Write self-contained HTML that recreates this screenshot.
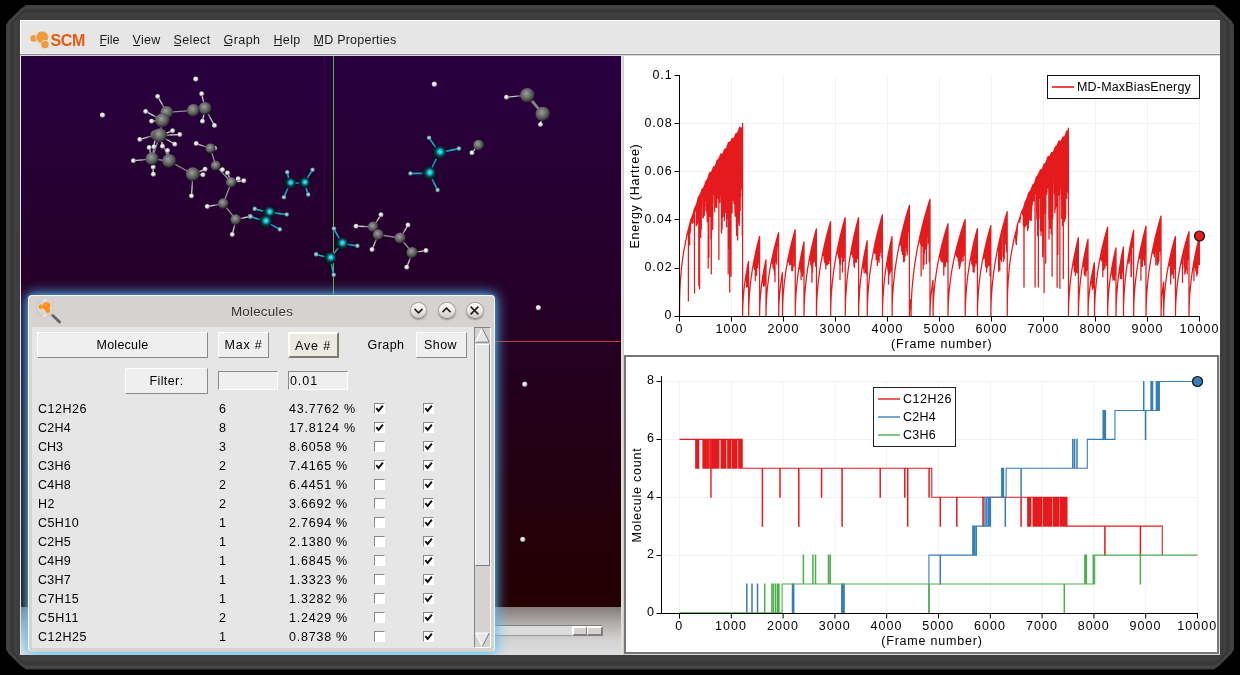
<!DOCTYPE html>
<html><head><meta charset="utf-8"><title>AMSmovie</title>
<style>html,body{margin:0;padding:0}
body{width:1240px;height:675px;background:#000;position:relative;overflow:hidden;font-family:"Liberation Sans",sans-serif;}
.t{position:absolute;white-space:nowrap;line-height:14px;color:#000}
.abs{position:absolute}
.btn{box-sizing:border-box;background:#efefef;border:1px solid;border-color:#fff #8a8a8a #8a8a8a #fff;}
.ent{box-sizing:border-box;background:#efefef;border:1px solid;border-color:#8a8a8a #fff #fff #8a8a8a;}
.cb{box-sizing:border-box;background:#fff;border:1px solid;border-color:#8a8a8a #fff #fff #8a8a8a;}
.tb{border-radius:50%;box-sizing:border-box;border:1px solid #aaa6a2;border-bottom-color:#8e8a86;background:linear-gradient(#fcfcfc,#efedeb 45%,#cdc9c5);box-shadow:0 1px 1.5px rgba(0,0,0,.3)}
#root{position:absolute;left:0;top:0;width:1240px;height:675px;will-change:transform}
</style></head>
<body>
<div id="root">
<svg class="abs" style="left:0;top:0" width="1240" height="675" viewBox="0 0 1240 675">
<polygon points="6.0,25.0 8.4,21.0 21.0,8.4 26.0,5.0 1214.0,5.0 1219.0,8.4 1231.6,21.0 1234.0,25.0 1234.0,649.5 1231.6,653.5 1219.0,666.1 1214.0,669.5 26.0,669.5 21.0,666.1 8.4,653.5 6.0,649.5" fill="#404040"/>
<polygon points="9.0,24.4 10.9,21.3 21.3,10.9 25.4,8.0 1214.6,8.0 1218.7,10.9 1229.1,21.3 1231.0,24.4 1231.0,650.1 1229.1,653.2 1218.7,663.6 1214.6,666.5 25.4,666.5 21.3,663.6 10.9,653.2 9.0,650.1" fill="#3a3a3a" stroke="#4a4a4a" stroke-width="1"/>
<polygon points="12.5,23.7 13.7,21.6 21.6,13.7 24.7,11.5 1215.3,11.5 1218.3,13.7 1226.3,21.6 1227.5,23.7 1227.5,650.8 1226.3,652.8 1218.3,660.8 1215.3,663.0 24.7,663.0 21.6,660.8 13.7,652.8 12.5,650.8" fill="#3e3e3e" stroke="#323232" stroke-width="1"/>
<polygon points="16.0,23.0 16.6,22.0 22.0,16.6 24.0,15.0 1216.0,15.0 1218.0,16.6 1223.4,22.0 1224.0,23.0 1224.0,651.5 1223.4,652.5 1218.0,657.9 1216.0,659.5 24.0,659.5 22.0,657.9 16.6,652.5 16.0,651.5" fill="#3d3d3d" stroke="#454545" stroke-width="0.8"/>
</svg>
<div style="position:absolute;left:20px;top:20px;width:1200px;height:635px;background:#e6e6e6;"></div>
<div style="position:absolute;left:20px;top:20px;width:1200px;height:1px;background:#fff;"></div>
<div style="position:absolute;left:20px;top:20px;width:1px;height:35px;background:#fff;"></div>
<div style="position:absolute;left:20px;top:53px;width:1200px;height:1px;background:#eeeeee;"></div>
<div style="position:absolute;left:20px;top:54px;width:1200px;height:1px;background:#8c8c8c;"></div>
<div style="position:absolute;left:20px;top:55px;width:1200px;height:1px;background:#dedad4;"></div>
<svg class="abs" style="left:28px;top:28px" width="60" height="22" viewBox="28 28 60 22">
<circle cx="33.7" cy="38.4" r="3.3" fill="#f09a3e"/><circle cx="42.2" cy="37.3" r="6.3" fill="#f09a3e" stroke="#e6e6e6" stroke-width="0.8"/><circle cx="44.9" cy="44.6" r="4.1" fill="#f09a3e" stroke="#e6e6e6" stroke-width="0.8"/></svg>
<span class="t " style="left:50.50px;top:33.76px;font-size:16px;letter-spacing:-0.352px;color:#e8590c;font-weight:bold;">SCM</span>
<span class="t " style="left:99.50px;top:32.67px;font-size:12.5px;letter-spacing:-0.036px;color:#1a1a1a;">File</span>
<div style="position:absolute;left:100px;top:45px;width:6px;height:1px;background:#1a1a1a;"></div>
<span class="t " style="left:132.50px;top:32.67px;font-size:12.5px;letter-spacing:0.283px;color:#1a1a1a;">View</span>
<div style="position:absolute;left:133px;top:45px;width:7px;height:1px;background:#1a1a1a;"></div>
<span class="t " style="left:173.50px;top:32.67px;font-size:12.5px;letter-spacing:0.376px;color:#1a1a1a;">Select</span>
<div style="position:absolute;left:174px;top:45px;width:7px;height:1px;background:#1a1a1a;"></div>
<span class="t " style="left:223.50px;top:32.67px;font-size:12.5px;letter-spacing:0.452px;color:#1a1a1a;">Graph</span>
<div style="position:absolute;left:224px;top:45px;width:8px;height:1px;background:#1a1a1a;"></div>
<span class="t " style="left:273.50px;top:32.67px;font-size:12.5px;letter-spacing:0.323px;color:#1a1a1a;">Help</span>
<div style="position:absolute;left:274px;top:45px;width:8px;height:1px;background:#1a1a1a;"></div>
<span class="t " style="left:313.50px;top:32.67px;font-size:12.5px;letter-spacing:0.240px;color:#1a1a1a;">MD Properties</span>
<div style="position:absolute;left:314px;top:45px;width:9px;height:1px;background:#1a1a1a;"></div>
<svg class="abs" style="left:21px;top:56px" width="600" height="551" viewBox="21 56 600 551">
<defs>
<linearGradient id="bg" x1="0" y1="0" x2="0" y2="1"><stop offset="0" stop-color="#28003f"/><stop offset="0.5" stop-color="#250024"/><stop offset="1" stop-color="#240000"/></linearGradient>
<radialGradient id="gC" cx="0.42" cy="0.38" r="0.62"><stop offset="0" stop-color="#9e9e9e"/><stop offset="0.3" stop-color="#7e7e7e"/><stop offset="0.65" stop-color="#595959"/><stop offset="0.9" stop-color="#303032"/><stop offset="1" stop-color="#141418"/></radialGradient>
<radialGradient id="gH" cx="0.45" cy="0.42" r="0.6"><stop offset="0" stop-color="#ffffff"/><stop offset="0.5" stop-color="#dcdcdc"/><stop offset="1" stop-color="#5c5c64"/></radialGradient>
<radialGradient id="gc" cx="0.55" cy="0.44" r="0.6"><stop offset="0" stop-color="#48f8ff"/><stop offset="0.25" stop-color="#18c0d0"/><stop offset="0.55" stop-color="#0a3a44"/><stop offset="1" stop-color="#06090c"/></radialGradient>
<radialGradient id="gh" cx="0.5" cy="0.45" r="0.6"><stop offset="0" stop-color="#cceeee"/><stop offset="0.5" stop-color="#7ab0b6"/><stop offset="1" stop-color="#2c5058"/></radialGradient>
</defs>
<rect x="21" y="56" width="600" height="551" fill="url(#bg)"/>
<line x1="333.5" y1="56" x2="333.5" y2="607" stroke="#4fb848" stroke-width="1"/>
<line x1="480" y1="341.5" x2="621" y2="341.5" stroke="#c03040" stroke-width="1"/>
<path d="M166.8 112.4L162.5 120.4M166.8 112.4L193.4 110.3M205.1 108.4L193.4 110.3M162.5 120.4L159.8 135.4M159.8 135.4L169.2 161M159.8 135.4L152.1 158.8M152.1 158.8L169.2 161M169.2 161L192.9 174.3M155.5 135L152.1 158.8M162.2 104.4L166.8 112.4M154.1 115.9L162.5 120.4M203.4 101.1L205.1 108.4M203.8 114.8L205.1 108.4M209.8 117.0L205.1 108.4M157.1 120.8L162.5 120.4M166.2 133.1L159.8 135.4M169.8 135.0L159.8 135.4M147.7 137.2L155.5 135M167.3 139.8L159.8 135.4M150.6 153.2L152.1 158.8M154.8 140.9L155.5 135M161.2 140.9L159.8 135.4M168.4 155.8L169.2 161M142.8 159.8L152.1 158.8M152.6 162.9L152.1 158.8M152.8 166.6L152.1 158.8M199.0 171.8L192.9 174.3M197.9 174.6L192.9 174.3M192.2 185.1L192.9 174.3" stroke="#8e8e8e" stroke-width="1.3" fill="none"/>
<path d="M157.7 96.4L162.2 104.4M145.7 111.4L154.1 115.9M201.7 93.8L203.4 101.1M202.5 121.2L203.8 114.8M214.5 125.5L209.8 117.0M151.6 121.2L157.1 120.8M172.6 130.8L166.2 133.1M179.8 134.6L169.8 135.0M139.8 139.4L147.7 137.2M174.8 144.2L167.3 139.8M149.2 147.6L150.6 153.2M154 146.8L154.8 140.9M162.5 146.3L161.2 140.9M167.6 150.6L168.4 155.8M133.4 160.7L142.8 159.8M153.2 167.1L152.6 162.9M153.4 174.3L152.8 166.6M205.1 169.2L199.0 171.8M203 174.8L197.9 174.6M191.5 195.9L192.2 185.1" stroke="#c8c8c8" stroke-width="1.3" fill="none"/>
<circle cx="157.7" cy="96.4" r="2.5" fill="url(#gH)"/>
<circle cx="145.7" cy="111.4" r="2.5" fill="url(#gH)"/>
<circle cx="201.7" cy="93.8" r="2.5" fill="url(#gH)"/>
<circle cx="202.5" cy="121.2" r="2.5" fill="url(#gH)"/>
<circle cx="214.5" cy="125.5" r="2.5" fill="url(#gH)"/>
<circle cx="151.6" cy="121.2" r="2.5" fill="url(#gH)"/>
<circle cx="172.6" cy="130.8" r="2.5" fill="url(#gH)"/>
<circle cx="179.8" cy="134.6" r="2.5" fill="url(#gH)"/>
<circle cx="139.8" cy="139.4" r="2.5" fill="url(#gH)"/>
<circle cx="174.8" cy="144.2" r="2.5" fill="url(#gH)"/>
<circle cx="149.2" cy="147.6" r="2.5" fill="url(#gH)"/>
<circle cx="154" cy="146.8" r="2.5" fill="url(#gH)"/>
<circle cx="162.5" cy="146.3" r="2.5" fill="url(#gH)"/>
<circle cx="167.6" cy="150.6" r="2.5" fill="url(#gH)"/>
<circle cx="133.4" cy="160.7" r="2.5" fill="url(#gH)"/>
<circle cx="153.2" cy="167.1" r="2.5" fill="url(#gH)"/>
<circle cx="153.4" cy="174.3" r="2.5" fill="url(#gH)"/>
<circle cx="205.1" cy="169.2" r="2.5" fill="url(#gH)"/>
<circle cx="203" cy="174.8" r="2.5" fill="url(#gH)"/>
<circle cx="191.5" cy="195.9" r="2.5" fill="url(#gH)"/>
<circle cx="155.5" cy="135" r="5.2" fill="url(#gC)"/>
<circle cx="166.8" cy="112.4" r="6.4" fill="url(#gC)"/>
<circle cx="162.5" cy="120.4" r="7.2" fill="url(#gC)"/>
<circle cx="205.1" cy="108.4" r="6.4" fill="url(#gC)"/>
<circle cx="193.4" cy="110.3" r="6.4" fill="url(#gC)"/>
<circle cx="159.8" cy="135.4" r="7.2" fill="url(#gC)"/>
<circle cx="152.1" cy="158.8" r="6.6" fill="url(#gC)"/>
<circle cx="169.2" cy="161" r="7" fill="url(#gC)"/>
<circle cx="192.9" cy="174.3" r="7" fill="url(#gC)"/>
<path d="M210.5 148.4L215.8 165.7M215.8 165.7L231.3 182.3M231.3 182.3L223.3 203.6M223.3 203.6L235.8 219.6M203.4 146.0L210.5 148.4M212.6 148.3L210.5 148.4M219.2 167.7L215.8 165.7M229.4 177.6L231.3 182.3M234.8 180.6L231.3 182.3M237.6 181.5L231.3 182.3M215.3 205.1L223.3 203.6M234.1 227.1L235.8 219.6M243.0 218.0L235.8 219.6" stroke="#8e8e8e" stroke-width="1.3" fill="none"/>
<path d="M196.3 143.6L203.4 146.0M214.7 148.2L212.6 148.3M222.5 169.7L219.2 167.7M227.5 172.9L229.4 177.6M238.2 178.8L234.8 180.6M243.8 180.7L237.6 181.5M207.3 206.5L215.3 205.1M232.3 234.5L234.1 227.1M250.2 216.4L243.0 218.0" stroke="#c8c8c8" stroke-width="1.3" fill="none"/>
<circle cx="196.3" cy="143.6" r="2.5" fill="url(#gH)"/>
<circle cx="214.7" cy="148.2" r="2.5" fill="url(#gH)"/>
<circle cx="222.5" cy="169.7" r="2.5" fill="url(#gH)"/>
<circle cx="227.5" cy="172.9" r="2.5" fill="url(#gH)"/>
<circle cx="238.2" cy="178.8" r="2.5" fill="url(#gH)"/>
<circle cx="243.8" cy="180.7" r="2.5" fill="url(#gH)"/>
<circle cx="207.3" cy="206.5" r="2.5" fill="url(#gH)"/>
<circle cx="232.3" cy="234.5" r="2.5" fill="url(#gH)"/>
<circle cx="250.2" cy="216.4" r="2.5" fill="url(#gH)"/>
<circle cx="210.5" cy="148.4" r="5" fill="url(#gC)"/>
<circle cx="215.8" cy="165.7" r="5" fill="url(#gC)"/>
<circle cx="231.3" cy="182.3" r="5.3" fill="url(#gC)"/>
<circle cx="223.3" cy="203.6" r="5.3" fill="url(#gC)"/>
<circle cx="235.8" cy="219.6" r="5.3" fill="url(#gC)"/>
<path d="M373.1 226.8L378.3 234.7M378.3 234.7L400.1 238M400.1 238L412.1 252.5M377.1 220.8L373.1 226.8M364.6 226.5L373.1 226.8M375.2 242.1L378.3 234.7M379.0 235.5L378.3 234.7M404.1 231.6L400.1 238M419.1 251.6L412.1 252.5M409.5 259.9L412.1 252.5" stroke="#8e8e8e" stroke-width="1.3" fill="none"/>
<path d="M381 214.7L377.1 220.8M356.1 226.2L364.6 226.5M372.1 249.6L375.2 242.1M379.6 236.3L379.0 235.5M408 225.1L404.1 231.6M426 250.6L419.1 251.6M406.8 267.2L409.5 259.9" stroke="#c8c8c8" stroke-width="1.3" fill="none"/>
<circle cx="381" cy="214.7" r="2.5" fill="url(#gH)"/>
<circle cx="356.1" cy="226.2" r="2.5" fill="url(#gH)"/>
<circle cx="372.1" cy="249.6" r="2.5" fill="url(#gH)"/>
<circle cx="379.6" cy="236.3" r="2.5" fill="url(#gH)"/>
<circle cx="408" cy="225.1" r="2.5" fill="url(#gH)"/>
<circle cx="426" cy="250.6" r="2.5" fill="url(#gH)"/>
<circle cx="406.8" cy="267.2" r="2.5" fill="url(#gH)"/>
<circle cx="373.1" cy="226.8" r="5.2" fill="url(#gC)"/>
<circle cx="378.3" cy="234.7" r="5.4" fill="url(#gC)"/>
<circle cx="400.1" cy="238" r="5.6" fill="url(#gC)"/>
<circle cx="412.1" cy="252.5" r="5.6" fill="url(#gC)"/>
<path d="M527.4 95.3L542.8 114" stroke="#6e6e6e" stroke-width="3" fill="none"/>
<path d="M527.4 95.3L542.8 114M527.4 95.3L542.8 114M517.0 96.2L527.4 95.3M541.6 119.2L542.8 114" stroke="#8e8e8e" stroke-width="1.3" fill="none"/>
<path d="M506.5 97.2L517.0 96.2M540.5 124.4L541.6 119.2" stroke="#c8c8c8" stroke-width="1.3" fill="none"/>
<circle cx="506.5" cy="97.2" r="2.5" fill="url(#gH)"/>
<circle cx="540.5" cy="124.4" r="2.5" fill="url(#gH)"/>
<circle cx="527.4" cy="95.3" r="7.3" fill="url(#gC)"/>
<circle cx="542.8" cy="114" r="7.3" fill="url(#gC)"/>
<path d="M475.3 148.9L478.6 145.1" stroke="#8e8e8e" stroke-width="1.3" fill="none"/>
<path d="M472 152.8L475.3 148.9" stroke="#c8c8c8" stroke-width="1.3" fill="none"/>
<circle cx="472" cy="152.8" r="2.5" fill="url(#gH)"/>
<circle cx="478.6" cy="145.1" r="5.4" fill="url(#gC)"/>
<path d="M269.1 212.4L265.4 221.5M261.9 210.7L269.1 212.4M277.9 213.4L269.1 212.4M272.6 225.4L265.4 221.5M257.9 219.1L265.4 221.5" stroke="#1098aa" stroke-width="1.6" fill="none"/>
<path d="M254.7 208.9L261.9 210.7M286.7 214.5L277.9 213.4M279.8 229.4L272.6 225.4M250.5 216.6L257.9 219.1" stroke="#18b0c2" stroke-width="1.6" fill="none"/>
<circle cx="254.7" cy="208.9" r="2.3" fill="url(#gh)"/>
<circle cx="286.7" cy="214.5" r="2.3" fill="url(#gh)"/>
<circle cx="279.8" cy="229.4" r="2.3" fill="url(#gh)"/>
<circle cx="250.5" cy="216.6" r="2.3" fill="url(#gh)"/>
<circle cx="269.1" cy="212.4" r="6" fill="url(#gc)"/>
<circle cx="265.4" cy="221.5" r="6.4" fill="url(#gc)"/>
<path d="M290.1 183.2L304.4 182.8M288.6 177.7L290.1 183.2M308.4 176.4L304.4 182.8M287.0 190.2L290.1 183.2M306.3 188.7L304.4 182.8" stroke="#1098aa" stroke-width="1.6" fill="none"/>
<path d="M287.2 172.2L288.6 177.7M312.5 169.9L308.4 176.4M283.9 197.3L287.0 190.2M308.2 194.6L306.3 188.7" stroke="#18b0c2" stroke-width="1.6" fill="none"/>
<circle cx="287.2" cy="172.2" r="2.3" fill="url(#gh)"/>
<circle cx="312.5" cy="169.9" r="2.3" fill="url(#gh)"/>
<circle cx="283.9" cy="197.3" r="2.3" fill="url(#gh)"/>
<circle cx="308.2" cy="194.6" r="2.3" fill="url(#gh)"/>
<circle cx="290.1" cy="183.2" r="5.6" fill="url(#gc)"/>
<circle cx="304.4" cy="182.8" r="5.6" fill="url(#gc)"/>
<path d="M341.8 243.6L330.2 258.1M337.9 236.1L341.8 243.6M349.6 244.8L341.8 243.6M323.1 256.2L330.2 258.1M331.9 266.5L330.2 258.1" stroke="#1098aa" stroke-width="1.6" fill="none"/>
<path d="M333.9 228.6L337.9 236.1M357.4 245.9L349.6 244.8M316.1 254.4L323.1 256.2M333.7 274.9L331.9 266.5" stroke="#18b0c2" stroke-width="1.6" fill="none"/>
<circle cx="333.9" cy="228.6" r="2.3" fill="url(#gh)"/>
<circle cx="357.4" cy="245.9" r="2.3" fill="url(#gh)"/>
<circle cx="316.1" cy="254.4" r="2.3" fill="url(#gh)"/>
<circle cx="333.7" cy="274.9" r="2.3" fill="url(#gh)"/>
<circle cx="341.8" cy="243.6" r="6.2" fill="url(#gc)"/>
<circle cx="330.2" cy="258.1" r="6.2" fill="url(#gc)"/>
<path d="M439.4 152.6L429.1 173.3M434.2 145.2L439.4 152.6M449.1 150.6L439.4 152.6M419.8 173.4L429.1 173.3M433.4 181.7L429.1 173.3" stroke="#1098aa" stroke-width="1.6" fill="none"/>
<path d="M429.1 137.9L434.2 145.2M458.9 148.6L449.1 150.6M410.4 173.5L419.8 173.4M437.6 190.1L433.4 181.7" stroke="#18b0c2" stroke-width="1.6" fill="none"/>
<circle cx="429.1" cy="137.9" r="2.3" fill="url(#gh)"/>
<circle cx="458.9" cy="148.6" r="2.3" fill="url(#gh)"/>
<circle cx="410.4" cy="173.5" r="2.3" fill="url(#gh)"/>
<circle cx="437.6" cy="190.1" r="2.3" fill="url(#gh)"/>
<circle cx="439.4" cy="152.6" r="6.8" fill="url(#gc)"/>
<circle cx="429.1" cy="173.3" r="6.8" fill="url(#gc)"/>
<circle cx="195.8" cy="79.1" r="2.7" fill="url(#gH)"/>
<circle cx="102.5" cy="115.1" r="2.7" fill="url(#gH)"/>
<circle cx="434.4" cy="84.3" r="2.7" fill="url(#gH)"/>
<circle cx="538.4" cy="307.7" r="2.7" fill="url(#gH)"/>
<circle cx="524.8" cy="384.3" r="2.7" fill="url(#gH)"/>
<circle cx="522.8" cy="539.4" r="2.7" fill="url(#gH)"/>
</svg>
<svg class="abs" style="left:621px;top:56px" width="599" height="599" viewBox="621 56 599 599">
<rect x="621" y="56" width="2" height="599" fill="#e2ded8"/><rect x="623" y="56" width="1" height="599" fill="#cfcbc7"/>
<rect x="624" y="56" width="596" height="299" fill="#fff"/>
<rect x="624" y="355" width="596" height="300" fill="#ddd8d4"/>
<rect x="624" y="355" width="595" height="299" fill="#777"/>
<rect x="626" y="357" width="591" height="295" fill="#fff"/>
<path d="M731.5 76V316M783.5 76V316M835.5 76V316M887.5 76V316M939.5 76V316M991.5 76V316M1043.5 76V316M1095.5 76V316M1147.5 76V316M1199.5 76V316M680 268.5H1199M680 219.5H1199M680 171.5H1199M680 123.5H1199" stroke="#f2f2f2" stroke-width="1" fill="none"/>
<path d="M679.5 315.9L679.6 304.7L679.6 301.1L679.7 298.5L679.7 296.4L679.8 294.6L679.8 293.0L679.9 291.5L679.9 290.2L680.0 289.0L680.0 287.8L680.1 286.8L680.1 285.8L680.2 284.8L680.2 283.9L680.3 283.0L680.3 282.2L680.4 281.3L680.4 280.6L680.5 279.8L680.5 279.1L680.6 278.4L680.6 277.7L680.7 277.0L680.7 276.4L680.8 275.7L680.9 275.1L680.9 274.5L681.0 273.9L681.0 273.3L681.1 272.8L681.1 272.2L681.2 271.7L681.2 271.1L681.3 270.6L681.3 270.1L681.4 269.6L681.4 269.1L681.5 268.6L681.5 268.1L681.6 267.6L681.6 267.1L681.7 266.6L681.7 266.2L681.8 265.7L681.8 265.3L681.9 264.8L681.9 264.4L682.0 263.9L682.0 263.5L682.1 263.0L682.2 262.6L682.2 262.2L682.3 261.8L682.3 261.3L682.4 260.9L682.4 260.5L682.5 260.1L682.5 259.7L682.6 259.3L682.6 258.9L682.7 258.5L682.7 258.1L682.8 257.7L682.8 257.3L682.9 256.9L682.9 256.5L683.0 256.1L683.0 255.8L683.1 255.4L683.1 255.0L683.2 254.6L683.2 254.3L683.3 253.9L683.3 253.6L683.4 253.3L683.5 253.0L683.5 252.7L683.6 252.5L683.6 252.2L683.7 251.9L683.7 251.6L683.8 251.3L683.8 251.0L683.9 250.8L683.9 250.5L684.0 250.2L684.0 249.9L684.1 249.7L684.1 249.4L684.2 249.1L684.2 248.8L684.3 248.6L684.3 248.3L684.4 248.0L684.4 247.8L684.5 247.5L684.5 247.2L684.6 247.0L684.6 246.7L684.7 246.4L684.8 246.2L684.8 245.9L684.9 245.6L684.9 245.4L685.0 245.1L685.0 244.8L685.1 244.6L685.1 244.3L685.2 244.0L685.2 243.8L685.3 243.5L685.3 243.2L685.4 243.0L685.4 242.7L685.5 242.4L685.5 242.2L685.6 241.9L685.6 241.6L685.7 241.3L685.7 241.1L685.8 240.8L685.8 240.5L685.9 240.3L685.9 240.0L686.0 239.7L686.1 239.4L686.1 239.2L686.2 238.9L686.2 238.6L686.3 238.3L686.3 238.0L686.4 237.8L686.4 237.5L686.5 237.2L686.5 236.9L686.6 236.6L686.6 236.4L686.7 236.1L686.7 235.8L686.8 235.5L686.8 235.2L686.9 235.0L686.9 234.7L687.0 234.4L687.0 234.2L687.1 234.0L687.1 233.8L687.2 233.6L687.2 233.4L687.3 233.2L687.4 233.0L687.4 232.8L687.5 232.6L687.5 232.5L687.6 232.3L687.6 232.1L687.7 231.9L687.7 231.7L687.8 231.5L687.8 231.3L687.9 231.1L687.9 231.2L688.0 230.8L688.0 231.4L688.1 230.4L688.1 230.2L688.2 234.8L688.2 229.8L688.3 230.5L688.3 229.4L688.4 229.5L688.4 300.9L688.5 229.9L688.5 228.6L688.6 229.0L688.7 228.3L688.7 228.0L688.8 227.8L688.8 228.4L688.9 227.4L688.9 227.2L689.0 227.0L689.0 226.7L689.1 226.5L689.1 228.4L689.2 226.1L689.2 225.9L689.3 240.3L689.3 225.4L689.4 225.2L689.4 230.0L689.5 224.8L689.5 234.6L689.6 244.9L689.6 224.2L689.7 224.6L689.7 231.1L689.8 223.6L689.8 223.3L689.9 230.8L690.0 222.9L690.0 223.0L690.1 233.3L690.1 224.3L690.2 222.1L690.2 222.1L690.3 221.7L690.3 221.5L690.4 221.2L690.4 221.0L690.5 230.9L690.5 220.6L690.6 226.8L690.6 220.5L690.7 222.0L690.7 219.8L690.8 220.4L690.8 219.5L690.9 219.3L690.9 219.2L691.0 219.5L691.0 220.5L691.1 219.9L691.1 219.1L691.2 218.7L691.3 218.6L691.3 219.1L691.4 218.3L691.4 218.2L691.5 218.1L691.5 218.0L691.6 218.2L691.6 217.8L691.7 217.6L691.7 218.2L691.8 217.4L691.8 217.8L691.9 217.2L691.9 217.0L692.0 219.3L692.0 221.2L692.1 222.5L692.1 223.6L692.2 217.5L692.2 216.4L692.3 216.1L692.3 216.0L692.4 216.6L692.4 215.7L692.5 215.6L692.6 215.4L692.6 215.3L692.7 215.2L692.7 215.0L692.8 215.0L692.8 214.7L692.9 214.5L692.9 214.4L693.0 214.2L693.0 222.7L693.1 213.9L693.1 216.6L693.2 213.6L693.2 213.4L693.3 213.4L693.3 218.3L693.4 212.8L693.4 212.6L693.5 216.4L693.5 213.5L693.6 216.3L693.6 215.8L693.7 211.7L693.7 211.5L693.8 211.3L693.9 211.1L693.9 210.9L694.0 211.3L694.0 210.5L694.1 210.3L694.1 210.1L694.2 209.9L694.2 209.7L694.3 209.5L694.3 209.3L694.4 209.1L694.4 208.9L694.5 293.1L694.5 208.5L694.6 208.4L694.6 208.3L694.7 208.2L694.7 208.1L694.8 208.0L694.8 207.9L694.9 207.8L694.9 207.8L695.0 207.7L695.0 207.6L695.1 207.5L695.2 207.4L695.2 207.3L695.3 207.2L695.3 207.1L695.4 207.9L695.4 206.9L695.5 206.8L695.5 209.4L695.6 206.5L695.6 206.4L695.7 206.3L695.7 206.6L695.8 211.2L695.8 207.1L695.9 205.8L695.9 205.7L696.0 205.7L696.0 205.5L696.1 205.3L696.1 206.0L696.2 205.1L696.2 209.1L696.3 204.9L696.3 225.7L696.4 208.0L696.5 204.3L696.5 204.8L696.6 210.8L696.6 203.9L696.7 219.7L696.7 203.6L696.8 223.6L696.8 203.2L696.9 204.6L696.9 204.6L697.0 216.1L697.0 224.7L697.1 202.4L697.1 205.0L697.2 202.0L697.2 203.0L697.3 218.3L697.3 201.4L697.4 206.3L697.4 223.4L697.5 200.8L697.5 200.6L697.6 200.4L697.6 211.5L697.7 200.0L697.8 199.9L697.8 203.5L697.9 210.6L697.9 207.6L698.0 199.0L698.0 199.1L698.1 198.6L698.1 216.8L698.2 198.4L698.2 199.8L698.3 198.7L698.3 197.6L698.4 200.6L698.4 199.4L698.5 221.6L698.5 197.3L698.6 197.2L698.6 198.1L698.7 223.1L698.7 196.9L698.8 210.5L698.8 285.3L698.9 196.7L698.9 196.6L699.0 196.6L699.1 196.4L699.1 196.3L699.2 196.2L699.2 205.7L699.3 196.0L699.3 195.9L699.4 196.1L699.4 195.7L699.5 195.7L699.5 195.5L699.6 288.7L699.6 240.1L699.7 195.3L699.7 197.0L699.8 195.1L699.8 205.0L699.9 197.0L699.9 194.9L700.0 198.8L700.0 194.7L700.1 194.6L700.1 194.5L700.2 194.4L700.2 194.3L700.3 223.3L700.4 194.0L700.4 195.5L700.5 193.8L700.5 199.6L700.6 193.6L700.6 193.5L700.7 193.3L700.7 193.2L700.8 193.1L700.8 237.5L700.9 212.1L700.9 196.3L701.0 194.9L701.0 192.4L701.1 192.2L701.1 221.8L701.2 192.0L701.2 229.4L701.3 226.5L701.3 218.4L701.4 191.3L701.4 191.2L701.5 191.0L701.5 192.7L701.6 190.7L701.7 190.5L701.7 190.3L701.8 190.2L701.8 190.0L701.9 196.4L701.9 189.7L702.0 194.6L702.0 189.3L702.1 189.2L702.1 189.2L702.2 189.2L702.2 192.5L702.3 189.9L702.3 189.1L702.4 189.0L702.4 189.0L702.5 188.9L702.5 189.0L702.6 188.8L702.6 193.9L702.7 188.8L702.7 188.7L702.8 217.3L702.8 188.6L702.9 188.6L703.0 190.1L703.0 188.5L703.1 193.4L703.1 188.3L703.2 188.3L703.2 188.2L703.3 217.9L703.3 188.1L703.4 188.3L703.4 187.9L703.5 187.8L703.5 187.8L703.6 214.5L703.6 201.7L703.7 192.0L703.7 189.2L703.8 187.3L703.8 190.5L703.9 190.0L703.9 187.0L704.0 187.1L704.0 186.8L704.1 187.2L704.1 188.7L704.2 186.4L704.3 186.3L704.3 215.5L704.4 186.9L704.4 185.9L704.5 209.8L704.5 185.6L704.6 185.5L704.6 185.3L704.7 196.2L704.7 185.0L704.8 191.6L704.8 190.4L704.9 184.6L704.9 209.9L705.0 184.3L705.0 205.7L705.1 183.9L705.1 183.7L705.2 200.6L705.2 184.0L705.3 183.2L705.3 183.9L705.4 182.9L705.4 182.7L705.5 197.6L705.6 182.3L705.6 182.1L705.7 188.2L705.7 181.8L705.8 181.6L705.8 182.1L705.9 181.4L705.9 185.4L706.0 184.6L706.0 186.3L706.1 181.2L706.1 181.1L706.2 181.1L706.2 181.0L706.3 181.0L706.3 180.9L706.4 180.9L706.4 210.9L706.5 180.8L706.5 199.5L706.6 183.4L706.6 207.5L706.7 180.5L706.7 180.5L706.8 181.9L706.9 180.3L706.9 213.6L707.0 180.2L707.0 180.1L707.1 180.0L707.1 209.9L707.2 179.8L707.2 221.6L707.3 204.6L707.3 179.5L707.4 202.3L707.4 200.8L707.5 179.2L707.5 179.1L707.6 179.0L707.6 178.9L707.7 192.4L707.7 178.7L707.8 179.8L707.8 178.4L707.9 181.9L707.9 178.1L708.0 191.4L708.0 213.2L708.1 177.9L708.2 177.6L708.2 268.0L708.3 177.2L708.3 177.1L708.4 176.9L708.4 206.8L708.5 176.6L708.5 176.5L708.6 185.2L708.6 176.9L708.7 175.9L708.7 175.7L708.8 177.6L708.8 175.4L708.9 257.4L708.9 175.0L709.0 174.8L709.0 174.8L709.1 177.2L709.1 174.2L709.2 174.1L709.2 173.9L709.3 173.7L709.3 187.8L709.4 204.5L709.5 174.5L709.5 173.0L709.6 206.3L709.6 209.6L709.7 172.8L709.7 172.8L709.8 172.8L709.8 172.8L709.9 172.8L709.9 174.1L710.0 216.4L710.0 173.1L710.1 173.3L710.1 197.0L710.2 172.8L710.2 190.0L710.3 172.8L710.3 172.7L710.4 172.7L710.4 172.7L710.5 173.0L710.5 172.7L710.6 172.7L710.6 172.6L710.7 172.9L710.8 177.1L710.8 175.3L710.9 172.5L710.9 238.7L711.0 172.4L711.0 181.1L711.1 172.3L711.1 172.3L711.2 223.6L711.2 172.2L711.3 173.7L711.3 273.9L711.4 214.2L711.4 177.6L711.5 234.7L711.5 202.2L711.6 195.8L711.6 171.6L711.7 171.5L711.7 179.2L711.8 171.3L711.8 171.2L711.9 173.8L711.9 171.0L712.0 170.9L712.1 185.3L712.1 170.6L712.2 175.0L712.2 170.4L712.3 170.3L712.3 204.6L712.4 179.9L712.4 171.1L712.5 169.7L712.5 170.3L712.6 182.6L712.6 170.5L712.7 169.2L712.7 169.0L712.8 229.3L712.8 168.7L712.9 190.1L712.9 175.0L713.0 204.8L713.0 168.1L713.1 168.5L713.1 199.8L713.2 185.2L713.2 169.4L713.3 167.3L713.4 167.3L713.4 167.2L713.5 171.5L713.5 176.0L713.6 167.2L713.6 176.4L713.7 167.2L713.7 167.2L713.8 194.0L713.8 180.7L713.9 184.6L713.9 167.1L714.0 167.1L714.0 167.1L714.1 167.1L714.1 167.1L714.2 167.0L714.2 167.0L714.3 167.0L714.3 166.9L714.4 166.9L714.4 170.4L714.5 176.5L714.5 166.8L714.6 168.9L714.7 166.7L714.7 211.9L714.8 167.1L714.8 166.5L714.9 185.3L714.9 166.3L715.0 166.3L715.0 166.2L715.1 183.0L715.1 166.0L715.2 165.9L715.2 168.4L715.3 165.7L715.3 167.9L715.4 174.1L715.4 165.4L715.5 165.3L715.5 204.4L715.6 165.1L715.6 164.9L715.7 164.8L715.7 164.7L715.8 165.1L715.8 164.4L715.9 207.2L716.0 204.9L716.0 164.0L716.1 163.8L716.1 163.7L716.2 163.5L716.2 163.4L716.3 163.2L716.3 164.6L716.4 162.9L716.4 171.7L716.5 162.5L716.5 195.2L716.6 162.2L716.6 162.0L716.7 207.6L716.7 161.6L716.8 177.1L716.8 161.3L716.9 161.1L716.9 201.7L717.0 160.7L717.0 198.5L717.1 172.1L717.1 167.9L717.2 160.4L717.3 196.3L717.3 160.3L717.4 160.3L717.4 160.3L717.5 164.0L717.5 160.2L717.6 160.2L717.6 160.1L717.7 160.1L717.7 160.1L717.8 160.0L717.8 160.0L717.9 159.9L717.9 159.9L718.0 159.8L718.0 159.8L718.1 159.7L718.1 159.7L718.2 159.7L718.2 159.6L718.3 198.7L718.3 159.4L718.4 167.2L718.4 180.5L718.5 174.9L718.6 195.7L718.6 159.1L718.7 165.1L718.7 158.9L718.8 165.7L718.8 158.7L718.9 259.4L718.9 210.0L719.0 158.4L719.0 183.0L719.1 158.2L719.1 186.7L719.2 157.9L719.2 174.8L719.3 200.9L719.3 157.5L719.4 157.4L719.4 157.3L719.5 180.3L719.5 157.1L719.6 161.4L719.6 175.9L719.7 156.8L719.7 156.7L719.8 161.5L719.9 156.5L719.9 156.4L720.0 202.3L720.0 156.2L720.1 156.0L720.1 155.9L720.2 162.5L720.2 176.6L720.3 155.5L720.3 155.4L720.4 170.5L720.4 155.1L720.5 155.0L720.5 154.8L720.6 195.1L720.6 154.6L720.7 154.6L720.7 154.3L720.8 154.1L720.8 173.9L720.9 155.6L720.9 154.1L721.0 154.3L721.0 154.1L721.1 154.2L721.2 154.2L721.2 175.0L721.3 155.5L721.3 173.5L721.4 154.3L721.4 231.5L721.5 180.5L721.5 177.3L721.6 154.3L721.6 233.0L721.7 175.1L721.7 154.3L721.8 154.4L721.8 154.3L721.9 154.4L721.9 154.6L722.0 154.3L722.0 226.7L722.1 178.3L722.1 228.7L722.2 154.3L722.2 154.2L722.3 166.1L722.3 154.2L722.4 154.2L722.5 217.0L722.5 154.0L722.6 154.0L722.6 153.9L722.7 154.6L722.7 153.8L722.8 175.8L722.8 158.8L722.9 166.9L722.9 154.2L723.0 187.7L723.0 216.7L723.1 153.2L723.1 153.2L723.2 153.3L723.2 153.0L723.3 158.5L723.3 177.4L723.4 152.7L723.4 152.5L723.5 152.4L723.5 153.1L723.6 152.1L723.6 166.0L723.7 151.9L723.8 151.7L723.8 151.6L723.9 165.0L723.9 153.0L724.0 151.1L724.0 151.0L724.1 215.1L724.1 150.7L724.2 150.5L724.2 150.4L724.3 150.2L724.3 150.1L724.4 220.4L724.4 149.7L724.5 196.7L724.5 149.6L724.6 149.2L724.6 151.2L724.7 149.2L724.7 149.2L724.8 191.1L724.8 149.3L724.9 149.3L724.9 149.3L725.0 149.3L725.1 212.8L725.1 206.0L725.2 157.4L725.2 167.6L725.3 149.2L725.3 149.2L725.4 149.2L725.4 149.2L725.5 149.2L725.5 149.2L725.6 167.0L725.6 149.1L725.7 149.1L725.7 149.4L725.8 149.0L725.8 186.4L725.9 174.8L725.9 148.9L726.0 212.1L726.0 149.4L726.1 148.7L726.1 158.8L726.2 148.6L726.2 171.8L726.3 203.8L726.4 159.2L726.4 148.3L726.5 148.2L726.5 150.8L726.6 226.8L726.6 147.9L726.7 147.8L726.7 147.7L726.8 147.6L726.8 173.6L726.9 147.3L726.9 162.2L727.0 218.4L727.0 146.9L727.1 146.8L727.1 146.7L727.2 146.5L727.2 146.4L727.3 146.2L727.3 146.1L727.4 145.9L727.4 145.7L727.5 172.5L727.5 145.4L727.6 145.2L727.7 162.3L727.7 145.5L727.8 148.7L727.8 163.1L727.9 144.3L727.9 144.2L728.0 144.0L728.0 143.8L728.1 148.6L728.1 160.1L728.2 273.9L728.2 143.0L728.3 142.8L728.3 225.7L728.4 142.6L728.4 204.6L728.5 151.5L728.5 142.5L728.6 221.3L728.6 148.9L728.7 142.5L728.7 142.5L728.8 142.5L728.8 142.5L728.9 190.9L729.0 142.4L729.0 248.6L729.1 142.4L729.1 142.3L729.2 189.2L729.2 142.3L729.3 155.0L729.3 150.8L729.4 147.6L729.4 142.2L729.5 143.6L729.5 163.0L729.6 205.5L729.6 142.3L729.7 142.3L729.7 292.2L729.8 142.3L729.8 142.2L729.9 142.2L729.9 142.2L730.0 142.2L730.0 161.6L730.1 142.1L730.1 142.1L730.2 149.3L730.3 142.0L730.3 142.0L730.4 162.3L730.4 155.5L730.5 145.8L730.5 141.7L730.6 188.8L730.6 141.6L730.7 141.5L730.7 144.6L730.8 141.3L730.8 161.6L730.9 202.2L730.9 148.5L731.0 276.3L731.0 140.9L731.1 140.8L731.1 156.3L731.2 140.5L731.2 140.4L731.3 140.7L731.3 140.2L731.4 141.1L731.4 139.9L731.5 139.8L731.6 178.5L731.6 139.6L731.7 142.6L731.7 139.3L731.8 150.5L731.8 198.3L731.9 138.9L731.9 138.7L732.0 207.3L732.0 202.5L732.1 163.1L732.1 213.0L732.2 176.9L732.2 200.8L732.3 138.3L732.3 145.8L732.4 138.4L732.4 138.5L732.5 138.5L732.5 138.7L732.6 138.6L732.6 140.3L732.7 138.7L732.7 139.7L732.8 142.5L732.9 151.3L732.9 138.7L733.0 179.1L733.0 138.7L733.1 138.8L733.1 151.8L733.2 138.8L733.2 138.8L733.3 141.7L733.3 200.2L733.4 138.7L733.4 184.0L733.5 138.7L733.5 147.4L733.6 195.0L733.6 138.6L733.7 138.6L733.7 138.5L733.8 143.5L733.8 175.0L733.9 203.0L733.9 138.3L734.0 142.0L734.0 138.2L734.1 147.8L734.2 138.0L734.2 138.0L734.3 137.9L734.3 204.0L734.4 137.7L734.4 138.7L734.5 145.8L734.5 166.3L734.6 137.3L734.6 137.2L734.7 172.3L734.7 194.4L734.8 136.8L734.8 136.6L734.9 137.0L734.9 211.7L735.0 175.7L735.0 136.1L735.1 136.2L735.1 216.0L735.2 135.6L735.2 135.5L735.3 175.7L735.3 135.1L735.4 184.9L735.5 134.8L735.5 157.2L735.6 134.5L735.6 134.4L735.7 136.2L735.7 175.9L735.8 137.0L735.8 216.0L735.9 205.5L735.9 133.5L736.0 133.5L736.0 133.5L736.1 133.5L736.1 184.5L736.2 138.4L736.2 133.6L736.3 174.8L736.3 140.0L736.4 134.9L736.4 228.4L736.5 177.1L736.5 133.5L736.6 146.6L736.6 235.3L736.7 133.5L736.8 133.5L736.8 136.8L736.9 185.8L736.9 135.1L737.0 133.4L737.0 187.4L737.1 133.3L737.1 194.3L737.2 156.4L737.2 133.2L737.3 158.0L737.3 133.1L737.4 133.0L737.4 151.3L737.5 159.3L737.5 132.8L737.6 222.9L737.6 146.2L737.7 240.0L737.7 132.5L737.8 137.1L737.8 132.3L737.9 145.7L737.9 132.1L738.0 137.2L738.1 131.9L738.1 132.0L738.2 222.7L738.2 131.5L738.3 131.4L738.3 131.2L738.4 131.1L738.4 156.5L738.5 165.3L738.5 203.9L738.6 169.2L738.6 166.7L738.7 130.2L738.7 130.0L738.8 130.4L738.8 129.6L738.9 198.7L738.9 150.9L739.0 153.1L739.0 128.9L739.1 128.7L739.1 140.1L739.2 198.3L739.2 128.2L739.3 225.4L739.4 191.6L739.4 218.2L739.5 127.6L739.5 127.5L739.6 136.7L739.6 127.2L739.7 170.8L739.7 127.3L739.8 127.4L739.8 127.4L739.9 176.8L739.9 127.6L740.0 127.6L740.0 175.7L740.1 127.7L740.1 127.8L740.2 127.9L740.2 210.6L740.3 129.9L740.3 128.0L740.4 128.1L740.4 128.1L740.5 128.1L740.5 128.2L740.6 196.3L740.7 128.2L740.7 128.3L740.8 129.3L740.8 128.3L740.9 129.8L740.9 128.3L741.0 129.4L741.0 189.3L741.1 134.2L741.1 128.3L741.2 129.5L741.2 150.0L741.3 128.3L741.3 128.3L741.4 128.3L741.4 158.5L741.5 143.1L741.5 128.2L741.6 128.1L741.6 147.6L741.7 128.0L741.7 127.9L741.8 131.6L741.8 127.8L741.9 127.7L742.0 127.7L742.0 127.6L742.1 146.9L742.1 133.4L742.2 127.3L742.2 130.0L742.3 235.7L742.3 139.2L742.4 128.1L742.4 131.9L742.5 126.7L742.5 199.1L742.6 123.3L742.6 315.9L742.6 315.9L742.7 310.8L742.7 308.7L742.8 307.1L742.8 305.7L742.9 304.5L742.9 303.4L743.0 302.4L743.0 301.5L743.1 300.6L743.1 299.8L743.2 299.0L743.3 298.3L743.3 297.5L743.4 296.8L743.4 296.2L743.5 295.5L743.5 294.9L743.6 294.3L743.6 293.7L743.7 293.1L743.7 292.6L743.8 292.0L743.8 291.5L743.9 290.9L743.9 290.4L744.0 289.9L744.0 289.4L744.1 288.9L744.1 288.5L744.2 288.0L744.2 287.5L744.3 287.1L744.3 286.6L744.4 286.2L744.4 285.8L744.5 285.3L744.6 284.9L744.6 284.5L744.7 284.1L744.7 283.7L744.8 283.3L744.8 282.9L744.9 282.5L744.9 282.1L745.0 281.7L745.0 281.3L745.1 281.0L745.1 280.6L745.2 280.3L745.2 279.9L745.3 279.5L745.3 279.2L745.4 278.8L745.4 279.5L745.5 279.4L745.5 279.8L745.6 277.4L745.6 277.1L745.7 276.8L745.7 276.4L745.8 276.1L745.9 275.8L745.9 280.7L746.0 275.1L746.0 278.9L746.1 274.5L746.1 274.2L746.2 279.9L746.2 273.6L746.3 273.3L746.3 280.7L746.4 272.7L746.4 272.4L746.5 272.1L746.5 271.8L746.6 275.3L746.6 287.1L746.7 270.9L746.7 270.6L746.8 270.3L746.8 270.0L746.9 269.8L746.9 269.5L747.0 269.2L747.0 268.9L747.1 268.6L747.2 268.8L747.2 268.1L747.3 267.8L747.3 283.8L747.4 271.4L747.4 267.0L747.5 286.4L747.5 271.7L747.6 266.2L747.6 283.1L747.7 265.7L747.7 265.5L747.8 265.2L747.8 264.9L747.9 281.5L747.9 264.4L748.0 264.2L748.0 263.9L748.1 263.7L748.1 263.4L748.2 270.8L748.2 269.2L748.3 262.7L748.3 262.5L748.4 262.2L748.5 262.0L748.5 279.8L748.6 270.9L748.6 261.3L748.7 315.9L748.7 315.9L748.7 310.4L748.8 308.1L748.8 306.4L748.9 304.9L748.9 303.6L749.0 302.5L749.0 301.4L749.1 300.4L749.1 299.5L749.2 298.6L749.2 297.7L749.3 296.9L749.3 296.1L749.4 295.4L749.4 294.7L749.5 294.0L749.5 293.3L749.6 292.6L749.6 292.0L749.7 291.4L749.8 290.8L749.8 290.2L749.9 289.6L749.9 289.0L750.0 288.5L750.0 288.0L750.1 287.4L750.1 286.9L750.2 286.4L750.2 285.9L750.3 285.4L750.3 284.9L750.4 284.4L750.4 283.9L750.5 283.5L750.5 283.0L750.6 282.6L750.6 282.1L750.7 281.7L750.7 281.2L750.8 280.8L750.8 280.4L750.9 280.0L750.9 279.5L751.0 279.1L751.1 278.7L751.1 278.3L751.2 277.9L751.2 277.5L751.3 277.1L751.3 276.8L751.4 276.4L751.4 276.0L751.5 275.6L751.5 275.2L751.6 274.9L751.6 274.5L751.7 274.2L751.7 273.8L751.8 273.4L751.8 273.1L751.9 272.7L751.9 272.4L752.0 272.0L752.0 271.7L752.1 271.4L752.1 271.0L752.2 270.7L752.2 270.4L752.3 270.0L752.4 269.7L752.4 269.4L752.5 269.1L752.5 268.7L752.6 268.4L752.6 268.1L752.7 267.8L752.7 267.5L752.8 267.2L752.8 266.9L752.9 266.6L752.9 266.3L753.0 266.0L753.0 265.7L753.1 265.4L753.1 265.1L753.2 264.8L753.2 264.5L753.3 264.2L753.3 263.9L753.4 263.6L753.4 263.3L753.5 263.0L753.5 262.8L753.6 265.1L753.7 262.4L753.7 261.9L753.8 261.6L753.8 261.4L753.9 264.9L753.9 260.8L754.0 260.5L754.0 260.3L754.1 265.9L754.1 264.1L754.2 259.5L754.2 267.7L754.3 258.9L754.3 258.7L754.4 258.4L754.4 258.2L754.5 257.9L754.5 262.7L754.6 257.4L754.6 269.4L754.7 256.9L754.7 261.3L754.8 264.6L754.8 256.1L754.9 267.2L755.0 255.6L755.0 255.4L755.1 255.1L755.1 254.9L755.2 254.6L755.2 254.4L755.3 254.1L755.3 280.5L755.4 253.6L755.4 253.4L755.5 259.1L755.5 252.9L755.6 252.7L755.6 252.4L755.7 252.2L755.7 252.0L755.8 271.6L755.8 251.5L755.9 251.3L755.9 251.0L756.0 250.8L756.0 250.6L756.1 250.4L756.1 250.1L756.2 249.9L756.3 249.7L756.3 249.4L756.4 249.2L756.4 249.0L756.5 275.3L756.5 248.5L756.6 248.3L756.6 272.4L756.7 247.9L756.7 247.7L756.8 260.7L756.8 247.2L756.9 256.6L756.9 246.8L757.0 246.6L757.0 260.3L757.1 246.1L757.1 245.9L757.2 245.7L757.2 245.5L757.3 245.3L757.3 245.1L757.4 244.9L757.4 263.7L757.5 267.5L757.6 244.2L757.6 244.0L757.7 243.8L757.7 258.9L757.8 243.4L757.8 259.1L757.9 243.0L757.9 242.8L758.0 242.6L758.0 242.4L758.1 242.2L758.1 242.0L758.2 241.8L758.2 241.5L758.3 241.3L758.3 241.1L758.4 240.9L758.4 261.5L758.5 240.5L758.5 240.3L758.6 240.1L758.6 239.9L758.7 239.8L758.7 239.6L758.8 263.0L758.9 239.2L758.9 248.6L759.0 238.8L759.0 264.5L759.1 262.3L759.1 238.2L759.2 238.0L759.2 237.8L759.3 237.6L759.3 251.1L759.4 270.0L759.4 250.1L759.5 236.8L759.5 236.7L759.6 236.5L759.6 315.9L759.6 315.9L759.7 310.8L759.7 308.7L759.8 307.1L759.8 305.7L759.9 304.5L759.9 303.5L760.0 302.5L760.0 301.5L760.1 300.7L760.2 299.8L760.2 299.1L760.3 298.3L760.3 297.6L760.4 296.9L760.4 296.2L760.5 295.6L760.5 295.0L760.6 294.4L760.6 293.8L760.7 293.2L760.7 292.6L760.8 292.1L760.8 291.5L760.9 291.0L760.9 290.5L761.0 290.0L761.0 289.5L761.1 289.0L761.1 288.6L761.2 288.1L761.2 287.6L761.3 287.2L761.3 286.7L761.4 286.3L761.5 285.9L761.5 285.4L761.6 285.0L761.6 284.6L761.7 284.2L761.7 283.8L761.8 283.4L761.8 283.0L761.9 282.6L761.9 282.2L762.0 281.8L762.0 281.5L762.1 281.1L762.1 280.7L762.2 280.4L762.2 280.0L762.3 279.6L762.3 279.4L762.4 278.9L762.4 279.0L762.5 278.2L762.5 277.9L762.6 277.6L762.6 277.2L762.7 276.9L762.8 278.4L762.8 276.2L762.9 275.9L762.9 275.6L763.0 275.3L763.0 275.0L763.1 274.6L763.1 274.3L763.2 274.0L763.2 282.9L763.3 273.4L763.3 273.1L763.4 272.8L763.4 272.5L763.5 276.2L763.5 285.4L763.6 273.9L763.6 271.3L763.7 271.1L763.7 270.8L763.8 272.3L763.8 286.4L763.9 282.4L763.9 269.6L764.0 269.4L764.1 269.1L764.1 268.8L764.2 268.5L764.2 268.3L764.3 280.4L764.3 267.7L764.4 267.5L764.4 284.8L764.5 266.9L764.5 266.7L764.6 275.3L764.6 266.2L764.7 277.7L764.7 265.6L764.8 269.8L764.8 265.1L764.9 285.0L764.9 264.6L765.0 264.4L765.0 264.1L765.1 263.9L765.1 280.9L765.2 263.4L765.2 277.1L765.3 262.9L765.4 262.6L765.4 275.6L765.5 262.2L765.5 261.9L765.6 261.7L765.6 267.0L765.7 261.2L765.7 261.0L765.8 264.2L765.8 273.8L765.9 273.0L765.9 260.0L766.0 259.8L766.0 315.9L766.0 315.9L766.1 310.5L766.1 308.3L766.2 306.6L766.2 305.2L766.3 303.9L766.3 302.8L766.4 301.7L766.4 300.8L766.5 299.8L766.5 299.0L766.6 298.1L766.7 297.4L766.7 296.6L766.8 295.9L766.8 295.2L766.9 294.5L766.9 293.8L767.0 293.2L767.0 292.6L767.1 292.0L767.1 291.4L767.2 290.8L767.2 290.2L767.3 289.7L767.3 289.1L767.4 288.6L767.4 288.1L767.5 287.6L767.5 287.1L767.6 286.6L767.6 286.1L767.7 285.6L767.7 285.1L767.8 284.7L767.8 284.2L767.9 283.8L768.0 283.3L768.0 282.9L768.1 282.5L768.1 282.0L768.2 281.6L768.2 281.2L768.3 280.8L768.3 280.4L768.4 280.0L768.4 279.6L768.5 279.2L768.5 278.8L768.6 278.4L768.6 278.0L768.7 277.7L768.7 277.3L768.8 276.9L768.8 276.6L768.9 276.2L768.9 275.8L769.0 275.5L769.0 275.1L769.1 274.8L769.1 274.4L769.2 274.1L769.3 273.7L769.3 273.4L769.4 273.1L769.4 272.7L769.5 272.4L769.5 272.1L769.6 271.8L769.6 271.4L769.7 271.1L769.7 270.8L769.8 270.5L769.8 270.2L769.9 269.8L769.9 269.5L770.0 269.2L770.0 268.9L770.1 268.6L770.1 268.3L770.2 268.0L770.2 267.7L770.3 267.4L770.3 267.1L770.4 266.8L770.4 266.5L770.5 266.3L770.6 266.0L770.6 265.7L770.7 265.4L770.7 265.1L770.8 264.8L770.8 264.6L770.9 264.3L770.9 264.0L771.0 263.7L771.0 263.4L771.1 263.2L771.1 262.9L771.2 262.6L771.2 262.4L771.3 262.1L771.3 261.8L771.4 261.6L771.4 261.6L771.5 261.0L771.5 262.4L771.6 260.5L771.6 260.3L771.7 260.0L771.7 260.0L771.8 259.5L771.9 259.2L771.9 259.0L772.0 258.7L772.0 258.5L772.1 262.1L772.1 262.2L772.2 257.7L772.2 257.5L772.3 257.3L772.3 257.0L772.4 256.8L772.4 263.4L772.5 260.2L772.5 258.9L772.6 255.8L772.6 255.6L772.7 255.3L772.7 255.1L772.8 254.9L772.8 254.6L772.9 254.4L772.9 254.2L773.0 267.5L773.0 253.7L773.1 253.5L773.2 253.2L773.2 253.0L773.3 252.8L773.3 252.6L773.4 252.3L773.4 252.1L773.5 251.9L773.5 251.7L773.6 268.3L773.6 261.9L773.7 251.0L773.7 250.8L773.8 250.6L773.8 250.3L773.9 250.1L773.9 249.9L774.0 249.7L774.0 249.5L774.1 249.2L774.1 263.3L774.2 270.7L774.2 248.6L774.3 248.4L774.3 248.2L774.4 248.0L774.5 257.8L774.5 247.6L774.6 247.3L774.6 247.1L774.7 246.9L774.7 274.8L774.8 273.1L774.8 246.3L774.9 246.1L774.9 245.9L775.0 271.1L775.0 281.7L775.1 245.3L775.1 245.1L775.2 244.9L775.2 244.7L775.3 244.5L775.3 244.3L775.4 244.1L775.4 243.9L775.5 243.7L775.5 243.5L775.6 243.3L775.6 243.1L775.7 242.9L775.8 242.7L775.8 242.5L775.9 242.3L775.9 242.1L776.0 241.9L776.0 254.4L776.1 241.5L776.1 261.8L776.2 256.0L776.2 240.9L776.3 240.8L776.3 240.6L776.4 240.4L776.4 240.2L776.5 240.0L776.5 239.8L776.6 247.1L776.6 239.4L776.7 239.2L776.7 239.1L776.8 264.3L776.8 238.7L776.9 253.6L776.9 238.3L777.0 238.1L777.1 251.1L777.1 248.9L777.2 237.6L777.2 246.6L777.3 237.2L777.3 237.0L777.4 236.9L777.4 236.7L777.5 236.5L777.5 236.3L777.6 236.1L777.6 236.0L777.7 235.8L777.7 235.6L777.8 235.4L777.8 235.2L777.9 246.0L777.9 234.9L778.0 234.7L778.0 234.5L778.1 234.4L778.1 234.2L778.2 234.0L778.2 233.8L778.3 233.7L778.4 233.5L778.4 233.3L778.5 233.1L778.5 233.0L778.6 232.8L778.6 232.6L778.7 315.9L778.7 315.9L778.7 310.8L778.8 308.7L778.8 307.1L778.9 305.7L778.9 304.5L779.0 303.4L779.0 302.4L779.1 301.5L779.1 300.6L779.2 299.8L779.2 299.0L779.3 298.2L779.3 297.5L779.4 296.8L779.4 296.1L779.5 295.5L779.5 294.8L779.6 294.2L779.7 293.6L779.7 293.1L779.8 292.5L779.8 292.0L779.9 291.4L779.9 290.9L780.0 290.4L780.0 289.9L780.1 289.4L780.1 288.9L780.2 288.4L780.2 287.9L780.3 287.5L780.3 287.0L780.4 286.6L780.4 286.1L780.5 285.7L780.5 285.3L780.6 284.8L780.6 284.4L780.7 284.0L780.7 283.6L780.8 283.2L780.8 282.8L780.9 282.4L781.0 282.0L781.0 281.6L781.1 281.3L781.1 280.9L781.2 280.5L781.2 280.2L781.3 279.8L781.3 279.4L781.4 279.1L781.4 278.7L781.5 278.4L781.5 278.0L781.6 277.7L781.6 277.4L781.7 277.0L781.7 276.7L781.8 276.3L781.8 276.0L781.9 275.7L781.9 275.4L782.0 275.1L782.0 274.7L782.1 274.4L782.1 274.1L782.2 273.8L782.3 273.5L782.3 273.2L782.4 272.9L782.4 272.6L782.5 315.9L782.5 315.9L782.5 310.4L782.6 308.1L782.6 306.4L782.7 304.9L782.7 303.6L782.8 302.4L782.8 301.3L782.9 300.3L782.9 299.4L783.0 298.5L783.0 297.6L783.1 296.8L783.1 296.1L783.2 295.3L783.2 294.6L783.3 293.9L783.3 293.2L783.4 292.5L783.4 291.9L783.5 291.3L783.6 290.7L783.6 290.1L783.7 289.5L783.7 288.9L783.8 288.4L783.8 287.8L783.9 287.3L783.9 286.8L784.0 286.3L784.0 285.7L784.1 285.2L784.1 284.8L784.2 284.3L784.2 283.8L784.3 283.3L784.3 282.9L784.4 282.4L784.4 282.0L784.5 281.5L784.5 281.1L784.6 280.6L784.6 280.2L784.7 279.8L784.7 279.4L784.8 279.0L784.9 278.6L784.9 278.2L785.0 277.8L785.0 277.4L785.1 277.0L785.1 276.6L785.2 276.2L785.2 275.8L785.3 275.4L785.3 275.1L785.4 274.7L785.4 274.3L785.5 274.0L785.5 273.6L785.6 273.3L785.6 272.9L785.7 272.6L785.7 272.2L785.8 271.9L785.8 271.5L785.9 271.2L785.9 270.8L786.0 270.5L786.0 270.2L786.1 269.8L786.2 269.5L786.2 269.2L786.3 268.9L786.3 268.5L786.4 268.2L786.4 267.9L786.5 267.6L786.5 267.3L786.6 267.0L786.6 266.7L786.7 266.4L786.7 266.0L786.8 265.7L786.8 265.4L786.9 265.1L786.9 264.8L787.0 264.6L787.0 264.3L787.1 264.0L787.1 263.7L787.2 263.4L787.2 263.1L787.3 262.8L787.3 262.5L787.4 262.2L787.5 262.0L787.5 261.7L787.6 261.4L787.6 261.1L787.7 260.8L787.7 260.6L787.8 260.3L787.8 260.0L787.9 259.8L787.9 259.5L788.0 259.2L788.0 259.0L788.1 258.7L788.1 258.4L788.2 258.2L788.2 257.9L788.3 257.6L788.3 257.4L788.4 257.1L788.4 256.9L788.5 256.6L788.5 260.2L788.6 257.9L788.6 260.7L788.7 255.6L788.8 255.3L788.8 255.1L788.9 260.7L788.9 255.5L789.0 254.3L789.0 262.5L789.1 260.9L789.1 253.6L789.2 262.7L789.2 253.1L789.3 252.9L789.3 252.6L789.4 252.4L789.4 261.6L789.5 251.9L789.5 251.7L789.6 264.9L789.6 251.2L789.7 251.0L789.7 259.9L789.8 250.5L789.8 250.3L789.9 250.1L789.9 249.8L790.0 264.6L790.1 249.4L790.1 249.2L790.2 262.0L790.2 248.7L790.3 248.5L790.3 248.3L790.4 254.5L790.4 247.8L790.5 247.6L790.5 247.4L790.6 247.1L790.6 246.9L790.7 258.1L790.7 246.5L790.8 250.8L790.8 246.0L790.9 245.8L790.9 245.6L791.0 245.4L791.0 264.0L791.1 254.9L791.1 244.8L791.2 244.5L791.2 244.3L791.3 244.1L791.4 243.9L791.4 252.5L791.5 243.5L791.5 243.3L791.6 243.1L791.6 242.9L791.7 255.1L791.7 242.5L791.8 242.2L791.8 270.7L791.9 262.3L791.9 258.3L792.0 241.4L792.0 241.2L792.1 241.0L792.1 240.8L792.2 240.6L792.2 262.9L792.3 240.2L792.3 240.0L792.4 250.0L792.4 254.8L792.5 239.4L792.5 239.2L792.6 270.7L792.7 241.7L792.7 238.6L792.8 238.4L792.8 238.2L792.9 245.3L792.9 237.8L793.0 237.7L793.0 265.2L793.1 237.3L793.1 237.1L793.2 266.9L793.2 236.7L793.3 236.5L793.3 236.3L793.4 239.4L793.4 252.0L793.5 235.7L793.5 235.6L793.6 235.4L793.6 235.2L793.7 235.0L793.7 234.8L793.8 234.6L793.8 234.4L793.9 234.2L794.0 234.1L794.0 233.9L794.1 233.7L794.1 233.5L794.2 239.4L794.2 233.1L794.3 233.0L794.3 232.8L794.4 232.6L794.4 232.4L794.5 232.2L794.5 257.9L794.6 231.9L794.6 265.4L794.7 231.5L794.7 231.3L794.8 231.1L794.8 231.0L794.9 230.8L794.9 230.6L795.0 230.4L795.0 242.1L795.1 241.2L795.1 229.9L795.2 229.7L795.3 315.9L795.3 315.9L795.3 310.2L795.4 307.8L795.4 306.0L795.5 304.5L795.5 303.1L795.6 301.9L795.6 300.8L795.7 299.7L795.7 298.7L795.8 297.8L795.8 296.9L795.9 296.1L795.9 295.3L796.0 294.5L796.0 293.7L796.1 293.0L796.1 292.3L796.2 291.6L796.2 291.0L796.3 290.3L796.3 289.7L796.4 289.1L796.4 288.5L796.5 287.9L796.6 287.3L796.6 286.7L796.7 286.2L796.7 285.6L796.8 285.1L796.8 284.6L796.9 284.1L796.9 283.5L797.0 283.0L797.0 282.5L797.1 282.1L797.1 281.6L797.2 281.1L797.2 280.6L797.3 280.2L797.3 279.7L797.4 279.3L797.4 278.8L797.5 278.4L797.5 278.0L797.6 277.5L797.6 277.1L797.7 276.7L797.7 276.3L797.8 275.9L797.9 275.5L797.9 275.1L798.0 274.7L798.0 274.3L798.1 273.9L798.1 273.5L798.2 273.1L798.2 272.7L798.3 272.3L798.3 272.0L798.4 271.6L798.4 271.2L798.5 270.9L798.5 270.5L798.6 270.1L798.6 269.8L798.7 269.4L798.7 269.1L798.8 268.7L798.8 268.4L798.9 268.0L798.9 267.7L799.0 267.4L799.0 267.0L799.1 266.7L799.2 266.4L799.2 266.0L799.3 267.7L799.3 265.4L799.4 265.1L799.4 264.7L799.5 266.0L799.5 264.1L799.6 268.8L799.6 267.1L799.7 263.2L799.7 262.9L799.8 263.0L799.8 265.4L799.9 261.9L799.9 261.6L800.0 261.3L800.0 262.4L800.1 260.7L800.1 267.8L800.2 260.2L800.2 259.9L800.3 265.3L800.3 259.3L800.4 259.0L800.5 258.7L800.5 258.4L800.6 258.1L800.6 257.9L800.7 257.6L800.7 262.6L800.8 272.0L800.8 256.7L800.9 259.9L800.9 256.2L801.0 255.9L801.0 256.5L801.1 279.7L801.1 255.1L801.2 254.8L801.2 254.6L801.3 262.8L801.3 266.0L801.4 260.8L801.4 253.5L801.5 253.2L801.5 253.0L801.6 252.7L801.6 254.1L801.7 266.6L801.8 256.8L801.8 260.0L801.9 254.6L801.9 251.2L802.0 250.9L802.0 272.3L802.1 250.4L802.1 250.2L802.2 249.9L802.2 256.4L802.3 253.3L802.3 249.2L802.4 249.0L802.4 248.7L802.5 268.9L802.5 276.3L802.6 248.7L802.6 247.7L802.7 247.5L802.7 247.3L802.8 247.0L802.8 246.8L802.9 246.6L802.9 246.3L803.0 246.1L803.1 254.8L803.1 245.6L803.2 247.5L803.2 253.1L803.3 244.9L803.3 244.7L803.4 273.2L803.4 244.2L803.5 244.0L803.5 243.8L803.6 269.8L803.6 243.3L803.7 272.7L803.7 242.9L803.8 242.7L803.8 242.4L803.9 273.8L803.9 258.5L804.0 241.8L804.0 315.9L804.0 315.9L804.1 310.3L804.1 307.9L804.2 306.1L804.2 304.6L804.3 303.3L804.4 302.1L804.4 301.0L804.5 299.9L804.5 299.0L804.6 298.0L804.6 297.2L804.7 296.3L804.7 295.5L804.8 294.8L804.8 294.0L804.9 293.3L804.9 292.6L805.0 291.9L805.0 291.3L805.1 290.6L805.1 290.0L805.2 289.4L805.2 288.8L805.3 288.2L805.3 287.7L805.4 287.1L805.4 286.6L805.5 286.0L805.5 285.5L805.6 285.0L805.7 284.5L805.7 283.9L805.8 283.5L805.8 283.0L805.9 282.5L805.9 282.0L806.0 281.5L806.0 281.1L806.1 280.6L806.1 280.2L806.2 279.7L806.2 279.3L806.3 278.9L806.3 278.4L806.4 278.0L806.4 277.6L806.5 277.2L806.5 276.8L806.6 276.4L806.6 276.0L806.7 275.6L806.7 275.2L806.8 274.8L806.8 274.4L806.9 274.0L807.0 273.6L807.0 273.3L807.1 272.9L807.1 272.5L807.2 272.2L807.2 271.8L807.3 271.4L807.3 271.1L807.4 270.7L807.4 270.4L807.5 270.0L807.5 269.7L807.6 269.3L807.6 269.0L807.7 268.6L807.7 268.3L807.8 268.0L807.8 267.6L807.9 267.3L807.9 267.0L808.0 266.7L808.0 266.3L808.1 266.0L808.1 265.7L808.2 265.4L808.3 265.1L808.3 264.8L808.4 264.4L808.4 264.1L808.5 263.8L808.5 263.5L808.6 263.2L808.6 262.9L808.7 262.6L808.7 262.3L808.8 262.0L808.8 261.7L808.9 261.4L808.9 261.1L809.0 260.8L809.0 260.6L809.1 260.3L809.1 260.0L809.2 259.7L809.2 259.4L809.3 259.2L809.3 259.0L809.4 258.6L809.4 258.8L809.5 258.0L809.6 257.8L809.6 257.5L809.7 257.2L809.7 256.9L809.8 260.6L809.8 258.1L809.9 256.1L809.9 255.9L810.0 255.6L810.0 255.3L810.1 257.3L810.1 254.8L810.2 254.5L810.2 255.3L810.3 254.0L810.3 253.8L810.4 257.9L810.4 253.3L810.5 253.0L810.5 252.8L810.6 252.5L810.6 252.3L810.7 252.0L810.7 264.5L810.8 258.5L810.9 258.2L810.9 251.0L811.0 250.8L811.0 250.5L811.1 255.2L811.1 251.2L811.2 249.8L811.2 261.1L811.3 249.3L811.3 249.1L811.4 259.7L811.4 248.6L811.5 248.4L811.5 248.1L811.6 247.9L811.6 247.7L811.7 265.8L811.7 267.1L811.8 247.0L811.8 246.7L811.9 261.7L811.9 282.2L812.0 281.2L812.0 266.2L812.1 250.4L812.2 245.4L812.2 245.1L812.3 244.9L812.3 244.7L812.4 248.6L812.4 264.9L812.5 269.1L812.5 243.8L812.6 272.2L812.6 250.2L812.7 243.1L812.7 268.5L812.8 262.7L812.8 242.5L812.9 242.3L812.9 264.4L813.0 250.2L813.0 263.3L813.1 257.1L813.1 241.2L813.2 241.0L813.2 262.8L813.3 240.5L813.3 252.8L813.4 247.4L813.5 239.9L813.5 239.7L813.6 239.5L813.6 239.3L813.7 260.8L813.7 257.9L813.8 238.7L813.8 238.5L813.9 257.2L813.9 238.0L814.0 237.8L814.0 241.6L814.1 237.4L814.1 237.2L814.2 237.0L814.2 236.8L814.3 236.6L814.3 236.4L814.4 236.2L814.4 236.0L814.5 238.3L814.5 235.6L814.6 235.4L814.6 239.2L814.7 235.0L814.8 251.0L814.8 234.6L814.9 262.1L814.9 238.4L815.0 234.1L815.0 242.4L815.1 233.7L815.1 244.6L815.2 245.1L815.2 233.1L815.3 232.9L815.3 232.7L815.4 232.5L815.4 232.3L815.5 266.1L815.5 231.9L815.6 243.6L815.6 231.6L815.7 231.4L815.7 259.3L815.8 248.8L815.8 230.8L815.9 259.5L815.9 230.4L816.0 230.2L816.1 230.1L816.1 229.9L816.2 229.7L816.2 240.6L816.3 229.3L816.3 229.1L816.4 263.1L816.4 228.8L816.5 315.9L816.5 315.9L816.5 310.2L816.6 307.8L816.6 306.0L816.7 304.5L816.7 303.1L816.8 301.9L816.8 300.8L816.9 299.7L816.9 298.7L817.0 297.8L817.0 296.9L817.1 296.1L817.1 295.3L817.2 294.5L817.2 293.7L817.3 293.0L817.4 292.3L817.4 291.6L817.5 291.0L817.5 290.3L817.6 289.7L817.6 289.1L817.7 288.5L817.7 287.9L817.8 287.3L817.8 286.7L817.9 286.2L817.9 285.6L818.0 285.1L818.0 284.6L818.1 284.0L818.1 283.5L818.2 283.0L818.2 282.5L818.3 282.1L818.3 281.6L818.4 281.1L818.4 280.6L818.5 280.2L818.5 279.7L818.6 279.3L818.7 278.8L818.7 278.4L818.8 278.0L818.8 277.5L818.9 277.1L818.9 276.7L819.0 276.3L819.0 275.9L819.1 275.4L819.1 275.0L819.2 274.6L819.2 274.2L819.3 273.9L819.3 273.5L819.4 273.1L819.4 272.7L819.5 272.3L819.5 272.0L819.6 271.6L819.6 271.2L819.7 270.9L819.7 270.5L819.8 270.1L819.8 269.8L819.9 269.4L820.0 269.1L820.0 268.7L820.1 268.4L820.1 268.0L820.2 267.7L820.2 267.4L820.3 267.0L820.3 266.7L820.4 266.4L820.4 266.0L820.5 265.7L820.5 265.4L820.6 265.0L820.6 264.7L820.7 264.4L820.7 264.1L820.8 263.8L820.8 263.5L820.9 263.2L820.9 262.8L821.0 262.5L821.0 262.2L821.1 261.9L821.1 261.6L821.2 261.3L821.3 261.0L821.3 260.7L821.4 260.4L821.4 260.1L821.5 259.8L821.5 259.6L821.6 259.3L821.6 259.0L821.7 258.7L821.7 258.4L821.8 258.1L821.8 257.8L821.9 257.6L821.9 257.3L822.0 257.0L822.0 256.7L822.1 256.4L822.1 256.2L822.2 255.9L822.2 255.6L822.3 255.4L822.3 255.1L822.4 254.8L822.4 254.5L822.5 254.3L822.6 254.8L822.6 253.8L822.7 253.5L822.7 253.2L822.8 253.0L822.8 252.7L822.9 252.5L822.9 252.2L823.0 255.7L823.0 251.7L823.1 251.4L823.1 251.2L823.2 250.9L823.2 253.3L823.3 250.4L823.3 251.0L823.4 254.0L823.4 249.7L823.5 249.4L823.5 249.2L823.6 248.9L823.6 248.7L823.7 248.4L823.7 248.2L823.8 248.0L823.9 247.7L823.9 247.5L824.0 247.2L824.0 247.0L824.1 259.4L824.1 246.5L824.2 246.3L824.2 255.0L824.3 245.8L824.3 258.2L824.4 260.3L824.4 245.1L824.5 244.9L824.5 251.5L824.6 244.4L824.6 244.2L824.7 244.0L824.7 243.8L824.8 243.5L824.8 262.8L824.9 243.1L824.9 242.9L825.0 243.8L825.0 242.4L825.1 242.2L825.2 242.0L825.2 258.8L825.3 241.5L825.3 250.5L825.4 241.1L825.4 241.3L825.5 240.7L825.5 249.8L825.6 259.2L825.6 258.9L825.7 239.8L825.7 239.6L825.8 239.4L825.8 268.9L825.9 242.7L825.9 238.7L826.0 238.5L826.0 238.3L826.1 238.1L826.1 245.5L826.2 237.7L826.2 247.2L826.3 250.4L826.3 255.4L826.4 236.8L826.5 236.6L826.5 258.4L826.6 240.4L826.6 236.0L826.7 235.8L826.7 235.6L826.8 235.4L826.8 235.2L826.9 264.8L826.9 234.8L827.0 234.6L827.0 234.4L827.1 234.2L827.1 234.0L827.2 249.2L827.2 233.6L827.3 233.4L827.3 233.2L827.4 233.0L827.4 264.8L827.5 246.8L827.5 232.4L827.6 232.2L827.6 232.0L827.7 231.8L827.8 231.6L827.8 231.4L827.9 247.3L827.9 231.0L828.0 230.9L828.0 230.7L828.1 257.1L828.1 234.0L828.2 241.1L828.2 258.1L828.3 229.7L828.3 229.5L828.4 263.5L828.4 258.0L828.5 228.9L828.5 228.8L828.6 228.6L828.6 232.0L828.7 256.2L828.7 236.6L828.8 227.8L828.8 227.6L828.9 227.5L828.9 227.3L829.0 263.6L829.1 226.9L829.1 235.0L829.2 226.5L829.2 226.4L829.3 245.7L829.3 226.0L829.4 225.8L829.4 225.6L829.5 225.4L829.5 225.3L829.6 234.5L829.6 260.4L829.7 224.7L829.7 256.6L829.8 224.4L829.8 224.2L829.9 224.0L829.9 223.8L830.0 223.7L830.0 259.3L830.1 223.3L830.1 223.1L830.2 222.9L830.2 249.1L830.3 222.6L830.4 259.2L830.4 222.2L830.5 253.7L830.5 221.9L830.6 221.7L830.6 221.5L830.7 315.9L830.7 315.9L830.7 310.0L830.8 307.6L830.8 305.7L830.9 304.1L830.9 302.7L831.0 301.5L831.0 300.3L831.1 299.3L831.1 298.3L831.2 297.3L831.2 296.4L831.3 295.5L831.3 294.7L831.4 293.9L831.4 293.1L831.5 292.4L831.5 291.6L831.6 290.9L831.7 290.3L831.7 289.6L831.8 288.9L831.8 288.3L831.9 287.7L831.9 287.1L832.0 286.5L832.0 285.9L832.1 285.3L832.1 284.8L832.2 284.2L832.2 283.7L832.3 283.1L832.3 282.6L832.4 282.1L832.4 281.6L832.5 281.1L832.5 280.6L832.6 280.1L832.6 279.6L832.7 279.2L832.7 278.7L832.8 278.2L832.8 277.8L832.9 277.3L833.0 276.9L833.0 276.4L833.1 276.0L833.1 275.6L833.2 275.1L833.2 274.7L833.3 274.3L833.3 273.9L833.4 273.5L833.4 273.1L833.5 272.7L833.5 272.3L833.6 271.9L833.6 271.5L833.7 271.1L833.7 270.7L833.8 270.3L833.8 270.0L833.9 269.6L833.9 269.2L834.0 268.8L834.0 268.5L834.1 268.1L834.1 267.7L834.2 267.4L834.3 267.0L834.3 266.7L834.4 266.3L834.4 266.0L834.5 265.6L834.5 265.3L834.6 264.9L834.6 264.6L834.7 264.3L834.7 263.9L834.8 263.6L834.8 263.3L834.9 263.0L834.9 262.6L835.0 262.3L835.0 262.0L835.1 261.7L835.1 261.3L835.2 261.0L835.2 260.7L835.3 260.4L835.3 260.1L835.4 259.8L835.4 259.5L835.5 259.2L835.6 258.9L835.6 258.6L835.7 258.3L835.7 258.0L835.8 257.7L835.8 257.4L835.9 257.1L835.9 256.8L836.0 256.5L836.0 256.2L836.1 255.9L836.1 255.6L836.2 255.3L836.2 255.0L836.3 254.8L836.3 254.5L836.4 254.2L836.4 253.9L836.5 253.6L836.5 253.4L836.6 253.1L836.6 252.8L836.7 252.5L836.7 252.3L836.8 252.1L836.9 251.8L836.9 251.5L837.0 252.2L837.0 251.9L837.1 252.2L837.1 250.4L837.2 250.1L837.2 249.9L837.3 249.6L837.3 249.3L837.4 249.1L837.4 248.8L837.5 248.6L837.5 248.3L837.6 248.1L837.6 247.8L837.7 247.5L837.7 253.7L837.8 247.0L837.8 246.8L837.9 251.4L837.9 246.3L838.0 246.0L838.0 247.9L838.1 248.3L838.2 245.3L838.2 245.1L838.3 244.8L838.3 244.6L838.4 244.3L838.4 244.1L838.5 243.8L838.5 243.6L838.6 257.3L838.6 243.1L838.7 251.5L838.7 242.7L838.8 254.9L838.8 242.2L838.9 251.8L838.9 250.0L839.0 241.5L839.0 258.9L839.1 241.0L839.1 254.1L839.2 240.6L839.2 240.3L839.3 244.2L839.3 239.9L839.4 239.6L839.5 239.4L839.5 239.2L839.6 239.0L839.6 238.7L839.7 238.5L839.7 264.0L839.8 254.8L839.8 237.8L839.9 237.6L839.9 237.4L840.0 237.2L840.0 279.6L840.1 236.7L840.1 236.5L840.2 251.8L840.2 236.1L840.3 244.9L840.3 235.7L840.4 235.4L840.4 235.2L840.5 235.0L840.5 234.8L840.6 264.0L840.6 261.5L840.7 249.5L840.8 234.0L840.8 233.7L840.9 233.5L840.9 233.3L841.0 233.1L841.0 240.2L841.1 255.6L841.1 252.7L841.2 232.3L841.2 232.1L841.3 249.6L841.3 231.7L841.4 231.5L841.4 250.9L841.5 231.0L841.5 256.8L841.6 230.6L841.6 230.4L841.7 234.5L841.7 230.0L841.8 229.8L841.8 229.6L841.9 229.4L841.9 243.3L842.0 229.0L842.1 228.8L842.1 235.5L842.2 228.4L842.2 228.2L842.3 228.0L842.3 257.0L842.4 227.7L842.4 227.5L842.5 227.3L842.5 272.0L842.6 226.9L842.6 254.4L842.7 226.5L842.7 226.3L842.8 226.1L842.8 225.9L842.9 249.0L842.9 225.5L843.0 225.3L843.0 252.8L843.1 224.9L843.1 224.8L843.2 224.6L843.2 224.4L843.3 224.2L843.4 224.0L843.4 253.4L843.5 239.3L843.5 223.4L843.6 223.2L843.6 223.1L843.7 261.3L843.7 228.5L843.8 222.5L843.8 257.5L843.9 240.3L843.9 225.1L844.0 221.8L844.0 221.6L844.1 221.4L844.1 221.2L844.2 221.0L844.2 220.9L844.3 220.7L844.3 220.5L844.4 220.3L844.4 234.5L844.5 219.9L844.5 219.8L844.6 219.6L844.7 219.4L844.7 219.2L844.8 257.3L844.8 218.9L844.9 218.7L844.9 218.5L845.0 218.3L845.0 218.2L845.1 218.0L845.1 217.8L845.2 230.5L845.2 217.5L845.3 315.9L845.3 315.9L845.3 309.7L845.4 307.2L845.4 305.2L845.5 303.6L845.5 302.1L845.6 300.8L845.6 299.6L845.7 298.5L845.7 297.4L845.8 296.4L845.8 295.5L845.9 294.6L846.0 293.7L846.0 292.9L846.1 292.1L846.1 291.3L846.2 290.5L846.2 289.8L846.3 289.1L846.3 288.4L846.4 287.7L846.4 287.0L846.5 286.4L846.5 285.8L846.6 285.1L846.6 284.5L846.7 283.9L846.7 283.3L846.8 282.8L846.8 282.2L846.9 281.6L846.9 281.1L847.0 280.6L847.0 280.0L847.1 279.5L847.1 279.0L847.2 278.5L847.3 278.0L847.3 277.5L847.4 277.0L847.4 276.5L847.5 276.0L847.5 275.6L847.6 275.1L847.6 274.6L847.7 274.2L847.7 273.7L847.8 273.3L847.8 272.8L847.9 272.4L847.9 272.0L848.0 271.5L848.0 271.1L848.1 270.7L848.1 270.3L848.2 269.9L848.2 269.4L848.3 269.0L848.3 268.6L848.4 268.2L848.4 267.8L848.5 267.5L848.6 267.1L848.6 266.7L848.7 266.3L848.7 265.9L848.8 265.5L848.8 265.2L848.9 264.8L848.9 264.4L849.0 264.1L849.0 263.7L849.1 263.3L849.1 263.0L849.2 262.6L849.2 262.3L849.3 261.9L849.3 261.6L849.4 261.2L849.4 260.9L849.5 260.5L849.5 260.2L849.6 259.8L849.6 259.5L849.7 259.2L849.7 258.8L849.8 258.5L849.9 258.2L849.9 257.9L850.0 257.5L850.0 257.2L850.1 256.9L850.1 256.6L850.2 256.2L850.2 255.9L850.3 255.6L850.3 255.3L850.4 255.0L850.4 254.7L850.5 254.4L850.5 254.1L850.6 253.8L850.6 253.5L850.7 253.2L850.7 252.9L850.8 252.6L850.8 252.3L850.9 252.0L850.9 251.7L851.0 251.5L851.0 252.5L851.1 250.8L851.2 250.5L851.2 250.2L851.3 249.9L851.3 249.6L851.4 251.7L851.4 249.1L851.5 248.8L851.5 248.5L851.6 248.2L851.6 250.3L851.7 247.7L851.7 247.4L851.8 247.1L851.8 246.8L851.9 254.7L851.9 246.3L852.0 246.5L852.0 245.7L852.1 245.5L852.1 245.2L852.2 244.9L852.2 253.7L852.3 248.0L852.3 244.1L852.4 243.9L852.5 243.6L852.5 243.4L852.6 243.1L852.6 247.5L852.7 242.6L852.7 242.3L852.8 242.1L852.8 241.8L852.9 241.6L852.9 257.4L853.0 257.3L853.0 240.8L853.1 240.5L853.1 240.3L853.2 240.0L853.2 239.8L853.3 247.5L853.3 239.3L853.4 252.2L853.4 242.6L853.5 238.6L853.5 238.3L853.6 238.1L853.6 237.8L853.7 237.6L853.8 237.3L853.8 263.4L853.9 236.9L853.9 236.6L854.0 266.3L854.0 258.8L854.1 235.9L854.1 235.7L854.2 235.4L854.2 235.2L854.3 259.4L854.3 234.7L854.4 262.8L854.4 234.3L854.5 234.0L854.5 267.2L854.6 233.6L854.6 233.4L854.7 257.6L854.7 257.4L854.8 232.7L854.8 232.4L854.9 232.2L854.9 232.0L855.0 245.6L855.1 231.5L855.1 231.3L855.2 249.6L855.2 230.9L855.3 230.6L855.3 230.4L855.4 230.2L855.4 230.0L855.5 229.8L855.5 229.5L855.6 229.3L855.6 229.1L855.7 262.2L855.7 228.7L855.8 228.5L855.8 262.0L855.9 243.5L855.9 253.2L856.0 241.5L856.0 227.4L856.1 227.2L856.1 226.9L856.2 262.0L856.2 226.5L856.3 261.7L856.4 226.1L856.4 254.3L856.5 225.7L856.5 262.1L856.6 225.3L856.6 253.6L856.7 236.1L856.7 224.6L856.8 224.4L856.8 224.2L856.9 224.0L856.9 240.4L857.0 223.6L857.0 223.4L857.1 223.2L857.1 223.0L857.2 252.9L857.2 222.6L857.3 249.7L857.3 222.2L857.4 258.6L857.4 255.9L857.5 221.6L857.5 253.8L857.6 221.2L857.7 221.0L857.7 220.8L857.8 220.6L857.8 240.1L857.9 232.2L857.9 220.0L858.0 245.8L858.0 219.6L858.1 219.4L858.1 219.2L858.2 219.0L858.2 251.8L858.3 218.6L858.3 218.4L858.4 218.2L858.4 218.0L858.5 217.8L858.5 246.6L858.6 217.5L858.6 315.9L858.6 315.9L858.7 310.0L858.7 307.6L858.8 305.7L858.8 304.2L858.9 302.8L859.0 301.5L859.0 300.4L859.1 299.3L859.1 298.3L859.2 297.4L859.2 296.4L859.3 295.6L859.3 294.8L859.4 294.0L859.4 293.2L859.5 292.4L859.5 291.7L859.6 291.0L859.6 290.3L859.7 289.7L859.7 289.0L859.8 288.4L859.8 287.8L859.9 287.2L859.9 286.6L860.0 286.0L860.0 285.4L860.1 284.9L860.1 284.3L860.2 283.8L860.3 283.2L860.3 282.7L860.4 282.2L860.4 281.7L860.5 281.2L860.5 280.7L860.6 280.2L860.6 279.7L860.7 279.3L860.7 278.8L860.8 278.3L860.8 277.9L860.9 277.4L860.9 277.0L861.0 276.6L861.0 276.1L861.1 275.7L861.1 275.3L861.2 274.8L861.2 274.4L861.3 274.0L861.3 273.6L861.4 273.2L861.4 272.8L861.5 272.4L861.6 272.0L861.6 271.6L861.7 271.2L861.7 270.8L861.8 270.5L861.8 270.1L861.9 269.7L861.9 269.3L862.0 269.0L862.0 268.6L862.1 268.3L862.1 267.9L862.2 267.5L862.2 267.2L862.3 267.0L862.3 267.2L862.4 266.6L862.4 266.1L862.5 266.4L862.5 265.1L862.6 264.8L862.6 264.5L862.7 267.5L862.7 263.8L862.8 268.0L862.9 263.1L862.9 262.8L863.0 262.5L863.0 262.1L863.1 261.8L863.1 261.5L863.2 261.2L863.2 260.9L863.3 260.6L863.3 260.3L863.4 260.0L863.4 265.5L863.5 259.3L863.5 259.0L863.6 258.7L863.6 264.4L863.7 258.1L863.7 257.8L863.8 257.5L863.8 257.2L863.9 257.0L863.9 271.0L864.0 256.4L864.0 256.1L864.1 272.8L864.2 255.5L864.2 255.2L864.3 266.4L864.3 254.7L864.4 254.4L864.4 254.1L864.5 253.8L864.5 253.6L864.6 253.3L864.6 253.0L864.7 257.3L864.7 252.5L864.8 266.1L864.8 257.9L864.9 251.7L864.9 251.4L865.0 251.1L865.0 265.1L865.1 250.6L865.1 250.3L865.2 250.1L865.2 249.8L865.3 262.3L865.3 249.3L865.4 257.5L865.5 256.4L865.5 272.7L865.6 257.4L865.6 270.5L865.7 247.8L865.7 247.5L865.8 250.4L865.8 247.0L865.9 263.3L865.9 246.5L866.0 246.3L866.0 266.6L866.1 245.8L866.1 250.8L866.2 245.3L866.2 245.0L866.3 244.8L866.3 244.5L866.4 244.3L866.4 269.7L866.5 274.0L866.5 243.6L866.6 270.4L866.6 263.9L866.7 242.9L866.8 264.7L866.8 242.4L866.9 242.2L866.9 272.0L867.0 241.7L867.0 241.5L867.1 241.2L867.1 241.0L867.2 271.1L867.2 240.6L867.3 315.9L867.3 315.9L867.3 310.0L867.4 307.5L867.4 305.6L867.5 304.0L867.5 302.6L867.6 301.4L867.6 300.2L867.7 299.1L867.7 298.1L867.8 297.2L867.8 296.2L867.9 295.4L867.9 294.5L868.0 293.7L868.1 292.9L868.1 292.2L868.2 291.5L868.2 290.8L868.3 290.1L868.3 289.4L868.4 288.7L868.4 288.1L868.5 287.5L868.5 286.9L868.6 286.3L868.6 285.7L868.7 285.1L868.7 284.5L868.8 284.0L868.8 283.4L868.9 282.9L868.9 282.4L869.0 281.9L869.0 281.3L869.1 280.8L869.1 280.3L869.2 279.9L869.2 279.4L869.3 278.9L869.4 278.4L869.4 278.0L869.5 277.5L869.5 277.0L869.6 276.6L869.6 276.1L869.7 275.7L869.7 275.3L869.8 274.8L869.8 274.4L869.9 274.0L869.9 273.6L870.0 273.2L870.0 272.8L870.1 272.4L870.1 271.9L870.2 271.6L870.2 271.2L870.3 270.8L870.3 270.4L870.4 270.0L870.4 269.6L870.5 269.2L870.5 268.9L870.6 268.5L870.7 268.1L870.7 267.8L870.8 267.4L870.8 267.0L870.9 266.7L870.9 266.3L871.0 266.0L871.0 265.6L871.1 265.3L871.1 264.9L871.2 264.6L871.2 264.2L871.3 263.9L871.3 263.6L871.4 263.2L871.4 262.9L871.5 262.6L871.5 262.2L871.6 261.9L871.6 261.6L871.7 261.3L871.7 260.9L871.8 260.6L871.8 260.3L871.9 260.0L872.0 259.7L872.0 259.4L872.1 259.1L872.1 258.7L872.2 258.4L872.2 258.1L872.3 257.8L872.3 257.5L872.4 257.2L872.4 256.9L872.5 256.6L872.5 256.3L872.6 256.0L872.6 255.8L872.7 255.5L872.7 255.2L872.8 254.9L872.8 254.6L872.9 254.3L872.9 254.0L873.0 253.7L873.0 253.5L873.1 253.2L873.1 252.9L873.2 252.6L873.3 252.3L873.3 252.1L873.4 251.8L873.4 251.5L873.5 251.3L873.5 251.0L873.6 250.7L873.6 250.4L873.7 250.2L873.7 249.9L873.8 250.5L873.8 249.4L873.9 249.1L873.9 248.9L874.0 248.6L874.0 248.3L874.1 248.1L874.1 248.7L874.2 249.3L874.2 250.9L874.3 247.0L874.3 246.8L874.4 249.3L874.4 246.3L874.5 252.0L874.6 252.7L874.6 245.9L874.7 245.3L874.7 245.0L874.8 253.5L874.8 244.5L874.9 252.9L874.9 244.0L875.0 243.8L875.0 243.6L875.1 243.3L875.1 243.1L875.2 242.8L875.2 242.6L875.3 242.4L875.3 242.1L875.4 241.9L875.4 241.6L875.5 241.4L875.5 241.2L875.6 240.9L875.6 240.7L875.7 240.5L875.7 240.2L875.8 240.0L875.9 253.6L875.9 243.5L876.0 239.3L876.0 239.1L876.1 238.9L876.1 259.5L876.2 250.0L876.2 238.2L876.3 238.0L876.3 237.7L876.4 237.5L876.4 237.3L876.5 237.1L876.5 236.8L876.6 236.6L876.6 247.5L876.7 238.8L876.7 236.0L876.8 235.7L876.8 235.5L876.9 248.9L876.9 235.1L877.0 234.9L877.0 234.6L877.1 258.9L877.2 234.2L877.2 234.0L877.3 233.8L877.3 263.9L877.4 265.4L877.4 233.1L877.5 232.9L877.5 260.8L877.6 232.5L877.6 232.3L877.7 232.1L877.7 231.9L877.8 231.7L877.8 231.5L877.9 231.3L877.9 231.0L878.0 230.8L878.0 245.0L878.1 260.2L878.1 230.2L878.2 246.7L878.2 229.8L878.3 229.6L878.3 229.4L878.4 229.2L878.5 250.5L878.5 228.8L878.6 251.6L878.6 228.4L878.7 249.1L878.7 260.1L878.8 227.8L878.8 242.9L878.9 241.7L878.9 227.2L879.0 227.0L879.0 258.7L879.1 262.3L879.1 226.6L879.2 226.2L879.2 226.0L879.3 225.8L879.3 225.6L879.4 225.4L879.4 225.2L879.5 225.1L879.5 224.9L879.6 248.2L879.6 224.5L879.7 253.1L879.8 255.6L879.8 223.9L879.9 255.2L879.9 223.5L880.0 240.1L880.0 228.0L880.1 251.2L880.1 250.9L880.2 222.6L880.2 239.0L880.3 222.2L880.3 222.0L880.4 221.8L880.4 221.6L880.5 252.6L880.5 221.3L880.6 221.1L880.6 220.9L880.7 220.7L880.7 220.5L880.8 220.3L880.8 226.7L880.9 220.0L880.9 219.8L881.0 219.6L881.1 219.4L881.1 219.2L881.2 219.1L881.2 218.9L881.3 218.7L881.3 240.0L881.4 218.3L881.4 218.2L881.5 218.0L881.5 217.8L881.6 217.6L881.6 217.4L881.7 217.3L881.7 217.1L881.8 250.0L881.8 216.7L881.9 216.6L881.9 257.4L882.0 216.2L882.0 216.0L882.1 215.9L882.1 215.7L882.2 240.4L882.2 215.3L882.3 215.2L882.4 215.0L882.4 214.8L882.5 315.9L882.5 315.9L882.5 310.0L882.6 307.6L882.6 305.8L882.7 304.2L882.7 302.8L882.8 301.6L882.8 300.4L882.9 299.3L882.9 298.3L883.0 297.4L883.0 296.5L883.1 295.6L883.1 294.8L883.2 294.0L883.2 293.2L883.3 292.5L883.3 291.8L883.4 291.1L883.4 290.4L883.5 289.7L883.5 289.1L883.6 288.4L883.7 287.8L883.7 287.2L883.8 286.6L883.8 286.0L883.9 285.5L883.9 284.9L884.0 284.4L884.0 283.8L884.1 283.3L884.1 282.8L884.2 282.3L884.2 281.8L884.3 281.3L884.3 280.8L884.4 280.3L884.4 279.8L884.5 279.3L884.5 278.9L884.6 278.4L884.6 278.0L884.7 277.5L884.7 277.1L884.8 276.6L884.8 276.2L884.9 275.8L885.0 275.3L885.0 274.9L885.1 274.5L885.1 274.1L885.2 273.7L885.2 273.3L885.3 272.9L885.3 272.5L885.4 272.1L885.4 271.7L885.5 271.3L885.5 270.9L885.6 270.5L885.6 270.2L885.7 269.8L885.7 269.4L885.8 269.1L885.8 268.7L885.9 268.3L885.9 268.0L886.0 267.6L886.0 267.3L886.1 266.9L886.1 266.6L886.2 266.2L886.3 265.9L886.3 265.5L886.4 265.2L886.4 264.9L886.5 264.5L886.5 264.2L886.6 263.9L886.6 264.0L886.7 263.2L886.7 262.9L886.8 263.2L886.8 262.2L886.9 265.0L886.9 261.6L887.0 261.8L887.0 261.0L887.1 260.7L887.1 260.3L887.2 260.0L887.2 260.4L887.3 265.8L887.3 263.7L887.4 261.2L887.4 258.5L887.5 258.2L887.6 257.9L887.6 257.6L887.7 269.2L887.7 257.1L887.8 262.3L887.8 256.5L887.9 256.2L887.9 255.9L888.0 255.6L888.0 255.3L888.1 255.0L888.1 254.8L888.2 254.5L888.2 254.2L888.3 271.6L888.3 253.7L888.4 253.4L888.4 270.9L888.5 252.8L888.5 271.2L888.6 284.0L888.6 252.0L888.7 251.8L888.7 251.5L888.8 267.2L888.9 251.0L888.9 250.7L889.0 262.3L889.0 250.2L889.1 249.9L889.1 249.6L889.2 258.7L889.2 274.5L889.3 271.2L889.3 248.6L889.4 248.4L889.4 259.8L889.5 262.4L889.5 272.5L889.6 273.8L889.6 252.3L889.7 254.2L889.7 246.6L889.8 246.4L889.8 246.1L889.9 245.9L889.9 245.6L890.0 245.4L890.0 272.1L890.1 272.9L890.2 267.2L890.2 244.4L890.3 244.2L890.3 243.9L890.4 243.7L890.4 243.5L890.5 243.2L890.5 248.5L890.6 242.8L890.6 242.5L890.7 242.3L890.7 251.2L890.8 241.8L890.8 241.6L890.9 241.4L890.9 241.1L891.0 260.3L891.0 268.4L891.1 240.5L891.1 270.9L891.2 240.0L891.2 239.8L891.3 239.6L891.3 269.8L891.4 239.1L891.5 238.9L891.5 238.7L891.6 238.4L891.6 238.2L891.7 238.0L891.7 237.8L891.8 262.4L891.8 237.3L891.9 237.1L891.9 236.9L892.0 238.7L892.0 236.5L892.1 315.9L892.1 315.9L892.1 309.8L892.2 307.3L892.2 305.4L892.3 303.8L892.3 302.4L892.4 301.1L892.4 299.9L892.5 298.8L892.5 297.7L892.6 296.8L892.6 295.8L892.7 294.9L892.8 294.1L892.8 293.2L892.9 292.5L892.9 291.7L893.0 290.9L893.0 290.2L893.1 289.5L893.1 288.8L893.2 288.2L893.2 287.5L893.3 286.9L893.3 286.2L893.4 285.6L893.4 285.0L893.5 284.4L893.5 283.9L893.6 283.3L893.6 282.7L893.7 282.2L893.7 281.7L893.8 281.1L893.8 280.6L893.9 280.1L893.9 279.6L894.0 279.1L894.1 278.6L894.1 278.1L894.2 277.6L894.2 277.1L894.3 276.7L894.3 276.2L894.4 275.7L894.4 275.3L894.5 274.8L894.5 274.4L894.6 274.0L894.6 273.5L894.7 273.1L894.7 272.7L894.8 272.2L894.8 271.8L894.9 271.4L894.9 271.0L895.0 270.6L895.0 270.2L895.1 269.8L895.1 269.4L895.2 269.0L895.2 268.6L895.3 268.2L895.4 267.8L895.4 267.5L895.5 267.1L895.5 266.7L895.6 266.3L895.6 266.0L895.7 265.6L895.7 265.2L895.8 264.9L895.8 264.5L895.9 264.2L895.9 263.8L896.0 263.5L896.0 263.1L896.1 262.8L896.1 262.4L896.2 262.1L896.2 261.7L896.3 261.4L896.3 261.1L896.4 260.7L896.4 260.4L896.5 260.1L896.5 259.8L896.6 259.4L896.7 259.1L896.7 258.8L896.8 258.5L896.8 258.1L896.9 257.8L896.9 257.5L897.0 257.2L897.0 256.9L897.1 256.6L897.1 256.3L897.2 256.0L897.2 255.7L897.3 255.4L897.3 255.1L897.4 254.8L897.4 254.5L897.5 254.2L897.5 253.9L897.6 253.6L897.6 253.3L897.7 253.0L897.7 252.7L897.8 252.4L897.8 252.1L897.9 251.8L898.0 251.5L898.0 251.3L898.1 251.0L898.1 250.7L898.2 250.4L898.2 250.1L898.3 249.9L898.3 249.6L898.4 249.3L898.4 249.0L898.5 248.8L898.5 248.5L898.6 248.2L898.6 247.9L898.7 247.7L898.7 247.4L898.8 247.1L898.8 246.9L898.9 246.6L898.9 246.3L899.0 246.1L899.0 245.8L899.1 245.6L899.1 245.3L899.2 245.0L899.3 244.8L899.3 244.5L899.4 244.3L899.4 244.0L899.5 243.9L899.5 243.5L899.6 244.0L899.6 243.9L899.7 242.7L899.7 242.5L899.8 242.2L899.8 242.0L899.9 241.7L899.9 241.5L900.0 245.4L900.0 242.6L900.1 240.8L900.1 240.5L900.2 240.3L900.2 240.3L900.3 239.8L900.3 239.6L900.4 239.3L900.4 239.1L900.5 238.8L900.6 238.6L900.6 244.3L900.7 238.1L900.7 237.9L900.8 237.7L900.8 240.6L900.9 237.2L900.9 237.0L901.0 236.7L901.0 236.5L901.1 236.3L901.1 236.0L901.2 235.8L901.2 235.6L901.3 235.4L901.3 235.1L901.4 234.9L901.4 234.7L901.5 247.5L901.5 234.2L901.6 234.0L901.6 250.2L901.7 243.7L901.7 250.9L901.8 239.7L901.9 232.9L901.9 232.7L902.0 232.4L902.0 232.2L902.1 232.0L902.1 231.8L902.2 234.0L902.2 251.2L902.3 231.1L902.3 230.9L902.4 247.1L902.4 254.5L902.5 238.3L902.5 230.1L902.6 229.9L902.6 250.8L902.7 229.4L902.7 229.2L902.8 243.2L902.8 228.8L902.9 234.2L902.9 240.2L903.0 228.2L903.0 248.5L903.1 227.7L903.2 244.4L903.2 236.2L903.3 241.1L903.3 226.9L903.4 226.7L903.4 226.5L903.5 226.3L903.5 261.8L903.6 225.9L903.6 233.2L903.7 225.5L903.7 225.3L903.8 234.6L903.8 224.9L903.9 253.8L903.9 237.5L904.0 224.3L904.0 224.1L904.1 237.8L904.1 223.7L904.2 223.5L904.2 223.3L904.3 232.3L904.3 222.9L904.4 222.7L904.5 261.2L904.5 222.3L904.6 222.1L904.6 221.9L904.7 221.7L904.7 221.5L904.8 232.2L904.8 221.1L904.9 220.9L904.9 226.4L905.0 247.6L905.0 241.0L905.1 229.7L905.1 220.0L905.2 256.0L905.2 232.6L905.3 219.4L905.3 219.2L905.4 219.0L905.4 218.8L905.5 218.7L905.5 218.5L905.6 233.7L905.6 218.1L905.7 217.9L905.8 217.7L905.8 217.5L905.9 227.1L905.9 236.5L906.0 217.0L906.0 216.8L906.1 216.6L906.1 216.4L906.2 216.2L906.2 216.0L906.3 230.0L906.3 215.7L906.4 215.5L906.4 247.3L906.5 215.1L906.5 215.0L906.6 214.8L906.6 214.6L906.7 251.2L906.7 214.2L906.8 214.1L906.8 213.9L906.9 213.7L906.9 213.5L907.0 213.3L907.1 213.2L907.1 213.0L907.2 212.8L907.2 254.8L907.3 212.4L907.3 212.3L907.4 212.1L907.4 252.8L907.5 243.6L907.5 211.6L907.6 211.4L907.6 225.1L907.7 237.6L907.7 237.3L907.8 210.7L907.8 210.5L907.9 210.3L907.9 210.2L908.0 210.0L908.0 209.8L908.1 209.6L908.1 209.5L908.2 209.3L908.2 209.1L908.3 209.0L908.4 208.8L908.4 227.5L908.5 208.4L908.5 208.3L908.6 216.6L908.6 207.9L908.7 231.6L908.7 207.6L908.8 207.4L908.8 207.3L908.9 207.1L908.9 206.9L909.0 206.8L909.0 226.2L909.1 206.4L909.1 206.3L909.2 219.9L909.2 210.6L909.3 205.8L909.3 205.6L909.4 205.4L909.4 315.9L909.4 315.9L909.5 312.8L909.5 311.5L909.6 310.6L909.7 309.7L909.7 309.0L909.8 308.4L909.8 307.8L909.9 307.2L909.9 306.7L910.0 306.2L910.0 305.7L910.1 305.2L910.1 304.8L910.2 304.4L910.2 304.0L910.3 303.6L910.3 303.2L910.4 302.8L910.4 302.5L910.5 302.1L910.5 301.8L910.6 301.5L910.6 301.1L910.7 300.8L910.7 300.5L910.8 300.2L910.8 299.9L910.9 299.6L911.0 299.3L911.0 299.1L911.1 315.9L911.1 315.9L911.1 309.8L911.2 307.3L911.2 305.3L911.3 303.7L911.3 302.2L911.4 300.9L911.4 299.7L911.5 298.6L911.5 297.6L911.6 296.6L911.6 295.6L911.7 294.7L911.7 293.9L911.8 293.1L911.8 292.3L911.9 291.5L911.9 290.7L912.0 290.0L912.0 289.3L912.1 288.6L912.1 287.9L912.2 287.3L912.3 286.6L912.3 286.0L912.4 285.4L912.4 284.8L912.5 284.2L912.5 283.6L912.6 283.0L912.6 282.5L912.7 281.9L912.7 281.4L912.8 280.8L912.8 280.3L912.9 279.8L912.9 279.3L913.0 278.8L913.0 278.3L913.1 277.8L913.1 277.3L913.2 276.8L913.2 276.3L913.3 275.9L913.3 275.4L913.4 274.9L913.4 274.5L913.5 274.0L913.6 273.6L913.6 273.2L913.7 272.7L913.7 272.3L913.8 271.9L913.8 271.4L913.9 271.0L913.9 270.6L914.0 270.2L914.0 269.8L914.1 269.4L914.1 269.0L914.2 268.6L914.2 268.2L914.3 267.8L914.3 267.4L914.4 267.1L914.4 266.7L914.5 266.3L914.5 265.9L914.6 265.5L914.6 265.2L914.7 264.8L914.7 264.4L914.8 264.1L914.9 263.7L914.9 263.4L915.0 263.0L915.0 262.7L915.1 262.3L915.1 262.0L915.2 261.6L915.2 261.3L915.3 260.9L915.3 260.6L915.4 260.3L915.4 259.9L915.5 259.6L915.5 259.3L915.6 258.9L915.6 258.6L915.7 258.3L915.7 258.0L915.8 257.7L915.8 257.3L915.9 257.0L915.9 256.7L916.0 256.4L916.0 256.1L916.1 255.8L916.2 255.5L916.2 255.1L916.3 254.8L916.3 254.5L916.4 254.2L916.4 253.9L916.5 253.6L916.5 253.3L916.6 253.0L916.6 252.7L916.7 252.4L916.7 252.1L916.8 251.9L916.8 251.6L916.9 251.3L916.9 251.0L917.0 250.7L917.0 250.4L917.1 250.1L917.1 249.9L917.2 249.6L917.2 249.3L917.3 249.0L917.3 248.7L917.4 248.5L917.5 248.2L917.5 247.9L917.6 247.6L917.6 247.4L917.7 247.1L917.7 246.8L917.8 246.5L917.8 246.3L917.9 246.0L917.9 245.7L918.0 245.5L918.0 245.2L918.1 245.0L918.1 244.7L918.2 244.4L918.2 244.2L918.3 243.9L918.3 243.7L918.4 243.4L918.4 243.1L918.5 242.9L918.5 242.6L918.6 242.4L918.6 242.1L918.7 241.9L918.8 241.6L918.8 241.4L918.9 241.1L918.9 240.9L919.0 240.6L919.0 240.4L919.1 240.1L919.1 239.9L919.2 240.2L919.2 240.7L919.3 239.1L919.3 238.9L919.4 240.7L919.4 238.5L919.5 238.2L919.5 241.1L919.6 237.7L919.6 237.5L919.7 237.2L919.7 237.0L919.8 236.8L919.8 236.5L919.9 239.1L919.9 236.1L920.0 236.2L920.1 240.3L920.1 235.4L920.2 235.1L920.2 242.3L920.3 234.7L920.3 238.7L920.4 241.7L920.4 243.6L920.5 233.7L920.5 235.0L920.6 233.3L920.6 233.1L920.7 232.8L920.7 240.1L920.8 232.4L920.8 232.2L920.9 232.0L920.9 244.5L921.0 231.5L921.0 245.6L921.1 238.8L921.1 276.1L921.2 230.6L921.2 244.8L921.3 230.2L921.4 244.3L921.4 229.8L921.5 229.5L921.5 229.3L921.6 231.6L921.6 235.0L921.7 228.7L921.7 228.5L921.8 238.6L921.8 228.0L921.9 231.4L921.9 227.6L922.0 245.9L922.0 227.2L922.1 227.0L922.1 226.8L922.2 226.6L922.2 226.4L922.3 226.2L922.3 226.0L922.4 225.7L922.4 244.6L922.5 246.2L922.5 225.1L922.6 224.9L922.7 224.7L922.7 224.5L922.8 236.1L922.8 224.1L922.9 223.9L922.9 227.6L923.0 223.5L923.0 223.3L923.1 252.6L923.1 222.9L923.2 222.7L923.2 269.2L923.3 222.3L923.3 222.1L923.4 246.5L923.4 252.0L923.5 221.5L923.5 221.3L923.6 221.1L923.6 220.9L923.7 223.4L923.7 220.5L923.8 220.3L923.8 220.1L923.9 237.0L924.0 259.4L924.0 264.5L924.1 250.7L924.1 219.2L924.2 220.3L924.2 218.8L924.3 218.6L924.3 218.4L924.4 252.7L924.4 218.0L924.5 217.8L924.5 217.6L924.6 217.4L924.6 250.2L924.7 217.1L924.7 216.9L924.8 216.7L924.8 216.5L924.9 216.3L924.9 216.1L925.0 215.9L925.0 215.8L925.1 215.6L925.1 215.4L925.2 215.2L925.3 221.6L925.3 218.6L925.4 214.6L925.4 247.3L925.5 214.3L925.5 214.1L925.6 223.2L925.6 213.7L925.7 228.4L925.7 229.9L925.8 213.2L925.8 213.0L925.9 212.8L925.9 249.2L926.0 212.5L926.0 225.3L926.1 214.0L926.1 226.7L926.2 212.1L926.2 229.4L926.3 211.4L926.3 249.4L926.4 263.8L926.4 210.8L926.5 248.4L926.6 236.0L926.6 228.1L926.7 210.1L926.7 210.0L926.8 211.4L926.8 209.6L926.9 245.7L926.9 209.3L927.0 209.1L927.0 208.9L927.1 208.7L927.1 208.6L927.2 229.3L927.2 208.2L927.3 224.3L927.3 207.9L927.4 207.7L927.4 235.1L927.5 217.2L927.5 207.2L927.6 207.0L927.6 236.9L927.7 213.6L927.7 206.5L927.8 206.3L927.9 206.2L927.9 206.0L928.0 205.8L928.0 205.6L928.1 205.5L928.1 205.3L928.2 205.1L928.2 205.0L928.3 234.5L928.3 243.0L928.4 204.5L928.4 204.3L928.5 204.1L928.5 204.0L928.6 237.9L928.6 203.6L928.7 203.5L928.7 203.3L928.8 203.1L928.8 203.0L928.9 227.6L928.9 202.6L929.0 202.5L929.0 232.3L929.1 222.9L929.2 202.0L929.2 261.5L929.3 223.3L929.3 201.5L929.4 201.3L929.4 201.2L929.5 201.0L929.5 200.9L929.6 200.7L929.6 200.5L929.7 200.4L929.7 200.2L929.8 200.0L929.8 244.4L929.9 227.2L929.9 213.6L930.0 199.4L930.0 315.9L930.0 315.9L930.1 311.2L930.1 309.2L930.2 307.7L930.2 306.5L930.3 305.3L930.3 304.3L930.4 303.4L930.5 302.6L930.5 301.7L930.6 301.0L930.6 300.3L930.7 299.6L930.7 298.9L930.8 298.2L930.8 297.6L930.9 297.0L930.9 296.4L931.0 295.9L931.0 295.3L931.1 294.8L931.1 294.3L931.2 293.8L931.2 293.3L931.3 292.8L931.3 292.3L931.4 291.8L931.4 291.4L931.5 290.9L931.5 290.5L931.6 290.1L931.6 289.6L931.7 289.2L931.8 288.8L931.8 288.4L931.9 288.0L931.9 287.6L932.0 287.2L932.0 286.8L932.1 286.4L932.1 286.1L932.2 285.7L932.2 285.3L932.3 285.0L932.3 284.6L932.4 284.2L932.4 283.9L932.5 283.6L932.5 283.2L932.6 282.9L932.6 282.5L932.7 282.2L932.7 281.9L932.8 281.5L932.8 281.2L932.9 280.9L932.9 280.6L933.0 280.3L933.1 315.9L933.1 315.9L933.1 310.5L933.2 308.2L933.2 306.5L933.3 305.0L933.3 303.7L933.4 302.6L933.4 301.5L933.5 300.5L933.5 299.6L933.6 298.7L933.6 297.9L933.7 297.0L933.7 296.3L933.8 295.5L933.8 294.8L933.9 294.1L933.9 293.5L934.0 292.8L934.0 292.2L934.1 291.6L934.1 291.0L934.2 290.4L934.2 289.8L934.3 289.2L934.4 288.7L934.4 288.2L934.5 287.6L934.5 287.1L934.6 286.6L934.6 286.1L934.7 285.6L934.7 285.1L934.8 284.6L934.8 284.2L934.9 283.7L934.9 283.2L935.0 282.8L935.0 282.4L935.1 281.9L935.1 281.5L935.2 281.1L935.2 280.6L935.3 280.2L935.3 279.8L935.4 279.4L935.4 279.0L935.5 278.6L935.5 278.2L935.6 277.8L935.7 277.4L935.7 277.0L935.8 276.7L935.8 276.3L935.9 275.9L935.9 275.5L936.0 275.2L936.0 274.8L936.1 274.5L936.1 274.1L936.2 273.7L936.2 273.4L936.3 273.1L936.3 272.7L936.4 272.4L936.4 272.0L936.5 271.7L936.5 271.4L936.6 271.0L936.6 270.7L936.7 270.4L936.7 270.0L936.8 269.7L936.8 269.4L936.9 269.1L937.0 268.8L937.0 268.5L937.1 268.1L937.1 267.8L937.2 267.5L937.2 267.2L937.3 266.9L937.3 266.6L937.4 266.3L937.4 266.0L937.5 265.7L937.5 265.4L937.6 265.1L937.6 264.9L937.7 264.6L937.7 264.3L937.8 264.0L937.8 263.7L937.9 263.4L937.9 263.1L938.0 262.9L938.0 262.6L938.1 262.3L938.1 262.0L938.2 261.8L938.3 261.5L938.3 261.2L938.4 260.9L938.4 260.7L938.5 260.4L938.5 260.1L938.6 259.9L938.6 259.6L938.7 259.3L938.7 259.1L938.8 258.8L938.8 258.6L938.9 258.3L938.9 258.1L939.0 257.8L939.0 257.5L939.1 257.3L939.1 257.0L939.2 256.8L939.2 256.5L939.3 256.3L939.3 256.1L939.4 255.8L939.4 256.3L939.5 255.3L939.6 255.1L939.6 255.2L939.7 255.1L939.7 254.3L939.8 255.8L939.8 255.0L939.9 253.6L939.9 253.4L940.0 253.1L940.0 257.4L940.1 253.8L940.1 252.4L940.2 252.2L940.2 252.0L940.3 251.7L940.3 251.5L940.4 251.3L940.4 251.1L940.5 257.6L940.5 255.8L940.6 250.4L940.6 255.4L940.7 249.9L940.7 260.2L940.8 249.5L940.9 249.3L940.9 249.0L941.0 248.8L941.0 250.4L941.1 248.4L941.1 248.2L941.2 256.2L941.2 257.1L941.3 247.5L941.3 247.3L941.4 248.6L941.4 246.9L941.5 246.6L941.5 260.8L941.6 246.2L941.6 246.0L941.7 249.4L941.7 245.6L941.8 245.9L941.8 252.1L941.9 262.0L941.9 244.7L942.0 258.9L942.0 244.3L942.1 250.9L942.2 247.7L942.2 243.7L942.3 243.5L942.3 243.3L942.4 243.1L942.4 242.9L942.5 242.7L942.5 242.5L942.6 242.3L942.6 242.1L942.7 258.1L942.7 241.7L942.8 241.5L942.8 251.2L942.9 241.1L942.9 240.9L943.0 240.7L943.0 240.5L943.1 240.3L943.1 262.1L943.2 239.9L943.2 239.7L943.3 239.5L943.3 239.3L943.4 239.1L943.5 248.5L943.5 261.4L943.6 238.6L943.6 238.4L943.7 238.2L943.7 238.0L943.8 275.2L943.8 260.1L943.9 237.4L943.9 237.2L944.0 262.0L944.0 236.9L944.1 254.3L944.1 236.5L944.2 267.2L944.2 261.5L944.3 235.9L944.3 235.7L944.4 235.6L944.4 235.4L944.5 235.2L944.5 238.8L944.6 234.8L944.6 234.6L944.7 234.5L944.8 234.3L944.8 234.1L944.9 233.9L944.9 233.7L945.0 264.5L945.0 233.4L945.1 259.4L945.1 233.0L945.2 232.8L945.2 232.7L945.3 232.5L945.3 249.9L945.4 240.2L945.4 231.9L945.5 266.3L945.5 231.6L945.6 251.4L945.6 231.2L945.7 231.1L945.7 230.9L945.8 230.7L945.8 230.6L945.9 230.4L945.9 230.2L946.0 230.0L946.1 229.9L946.1 245.4L946.2 229.5L946.2 229.3L946.3 229.2L946.3 229.0L946.4 228.8L946.4 260.4L946.5 228.5L946.5 246.4L946.6 261.3L946.6 228.0L946.7 227.8L946.7 227.7L946.8 227.5L946.8 238.5L946.9 227.1L946.9 227.0L947.0 248.8L947.0 226.6L947.1 226.5L947.1 226.3L947.2 261.8L947.2 226.0L947.3 262.2L947.4 225.7L947.4 225.5L947.5 225.3L947.5 225.2L947.6 225.0L947.6 224.8L947.7 259.9L947.7 224.5L947.8 251.1L947.8 224.2L947.9 255.0L947.9 223.9L948.0 223.7L948.0 315.9L948.0 315.9L948.1 310.6L948.1 308.4L948.2 306.7L948.2 305.3L948.3 304.0L948.3 302.9L948.4 301.9L948.4 300.9L948.5 300.0L948.5 299.1L948.6 298.3L948.7 297.5L948.7 296.8L948.8 296.1L948.8 295.4L948.9 294.7L948.9 294.0L949.0 293.4L949.0 292.8L949.1 292.2L949.1 291.6L949.2 291.0L949.2 290.5L949.3 289.9L949.3 289.4L949.4 288.9L949.4 288.4L949.5 287.9L949.5 287.4L949.6 286.9L949.6 286.4L949.7 285.9L949.7 285.5L949.8 285.0L949.8 284.5L949.9 284.1L950.0 283.7L950.0 283.2L950.1 282.8L950.1 282.4L950.2 282.0L950.2 281.6L950.3 281.1L950.3 280.7L950.4 280.3L950.4 280.0L950.5 279.6L950.5 279.2L950.6 278.8L950.6 278.4L950.7 278.1L950.7 277.7L950.8 277.3L950.8 277.0L950.9 276.6L950.9 276.2L951.0 275.9L951.0 275.5L951.1 275.2L951.1 274.8L951.2 274.5L951.3 274.2L951.3 273.8L951.4 273.5L951.4 273.2L951.5 272.8L951.5 272.5L951.6 272.2L951.6 271.9L951.7 271.6L951.7 271.2L951.8 270.9L951.8 270.6L951.9 270.3L951.9 270.0L952.0 269.7L952.0 269.4L952.1 269.1L952.1 268.8L952.2 268.5L952.2 268.2L952.3 267.9L952.3 267.6L952.4 267.3L952.4 267.0L952.5 266.7L952.6 266.5L952.6 266.2L952.7 265.9L952.7 265.6L952.8 265.3L952.8 265.1L952.9 264.8L952.9 264.5L953.0 264.2L953.0 264.0L953.1 263.7L953.1 263.4L953.2 263.2L953.2 262.9L953.3 262.6L953.3 262.4L953.4 262.1L953.4 261.8L953.5 261.6L953.5 261.3L953.6 261.1L953.6 260.8L953.7 260.6L953.7 260.3L953.8 260.1L953.9 259.8L953.9 259.6L954.0 259.3L954.0 259.1L954.1 258.8L954.1 258.6L954.2 258.3L954.2 258.1L954.3 257.8L954.3 257.6L954.4 257.4L954.4 257.1L954.5 256.9L954.5 256.6L954.6 256.4L954.6 256.2L954.7 255.9L954.7 255.7L954.8 255.5L954.8 255.2L954.9 255.0L954.9 254.8L955.0 254.5L955.0 254.3L955.1 254.1L955.2 253.9L955.2 253.6L955.3 253.4L955.3 253.2L955.4 253.0L955.4 252.7L955.5 252.5L955.5 252.3L955.6 254.1L955.6 252.8L955.7 251.6L955.7 251.4L955.8 251.2L955.8 251.0L955.9 250.8L955.9 250.6L956.0 251.4L956.0 250.1L956.1 255.1L956.1 249.7L956.2 249.5L956.2 252.6L956.3 249.1L956.3 248.9L956.4 256.0L956.5 253.4L956.5 248.2L956.6 248.0L956.6 247.8L956.7 247.6L956.7 247.4L956.8 247.2L956.8 247.0L956.9 246.8L956.9 246.6L957.0 246.4L957.0 248.8L957.1 255.0L957.1 245.8L957.2 249.0L957.2 245.4L957.3 257.2L957.3 245.0L957.4 244.8L957.4 251.5L957.5 244.4L957.5 257.4L957.6 244.0L957.6 243.8L957.7 247.0L957.8 243.4L957.8 243.2L957.9 243.0L957.9 246.6L958.0 242.7L958.0 242.5L958.1 242.3L958.1 242.1L958.2 260.9L958.2 241.7L958.3 241.5L958.3 241.3L958.4 241.1L958.4 240.9L958.5 240.8L958.5 240.6L958.6 250.0L958.6 257.7L958.7 259.5L958.7 254.2L958.8 239.6L958.8 239.5L958.9 264.1L958.9 239.1L959.0 265.8L959.1 238.7L959.1 238.5L959.2 261.6L959.2 238.2L959.3 245.2L959.3 237.8L959.4 237.6L959.4 268.5L959.5 237.3L959.5 237.1L959.6 253.1L959.6 236.8L959.7 236.6L959.7 236.4L959.8 236.2L959.8 260.8L959.9 235.9L959.9 235.7L960.0 266.8L960.0 235.3L960.1 235.2L960.1 235.0L960.2 234.8L960.2 234.7L960.3 234.5L960.4 235.4L960.4 264.1L960.5 234.0L960.5 261.3L960.6 233.6L960.6 233.5L960.7 233.3L960.7 233.1L960.8 232.9L960.8 232.8L960.9 232.6L960.9 232.4L961.0 253.7L961.0 232.1L961.1 231.9L961.1 231.8L961.2 246.4L961.2 231.4L961.3 231.3L961.3 231.1L961.4 250.9L961.4 230.8L961.5 230.6L961.5 230.4L961.6 230.3L961.7 234.1L961.7 261.7L961.8 242.5L961.8 243.7L961.9 229.5L961.9 229.3L962.0 229.1L962.0 251.6L962.1 228.8L962.1 228.7L962.2 238.0L962.2 228.3L962.3 228.2L962.3 228.0L962.4 227.8L962.4 227.7L962.5 227.5L962.5 227.4L962.6 227.2L962.6 227.1L962.7 226.9L962.7 226.7L962.8 226.6L962.8 226.4L962.9 256.6L963.0 226.1L963.0 242.5L963.1 225.8L963.1 225.6L963.2 225.5L963.2 260.8L963.3 225.2L963.3 240.4L963.4 250.8L963.4 224.7L963.5 224.6L963.5 224.4L963.6 224.3L963.6 224.1L963.7 223.9L963.7 238.6L963.8 250.5L963.8 223.5L963.9 223.3L963.9 223.2L964.0 223.0L964.0 222.9L964.1 234.9L964.1 222.6L964.2 222.4L964.3 222.3L964.3 222.1L964.4 245.3L964.4 221.8L964.5 221.7L964.5 255.3L964.6 221.4L964.6 221.2L964.7 255.6L964.7 220.9L964.8 220.8L964.8 220.6L964.9 220.5L964.9 220.4L965.0 220.2L965.0 220.1L965.1 255.1L965.1 219.8L965.2 219.6L965.2 315.9L965.2 315.9L965.3 310.2L965.3 307.8L965.4 306.0L965.4 304.5L965.5 303.1L965.6 301.9L965.6 300.8L965.7 299.7L965.7 298.8L965.8 297.8L965.8 297.0L965.9 296.1L965.9 295.3L966.0 294.5L966.0 293.8L966.1 293.1L966.1 292.3L966.2 291.7L966.2 291.0L966.3 290.4L966.3 289.7L966.4 289.1L966.4 288.5L966.5 287.9L966.5 287.3L966.6 286.8L966.6 286.2L966.7 285.7L966.7 285.1L966.8 284.6L966.9 284.1L966.9 283.6L967.0 283.1L967.0 282.6L967.1 282.1L967.1 281.6L967.2 281.2L967.2 280.7L967.3 280.2L967.3 279.8L967.4 279.3L967.4 278.9L967.5 278.4L967.5 278.0L967.6 277.6L967.6 277.2L967.7 276.7L967.7 276.3L967.8 275.9L967.8 275.5L967.9 275.1L967.9 274.7L968.0 274.3L968.0 273.9L968.1 273.5L968.2 273.2L968.2 272.8L968.3 272.4L968.3 272.0L968.4 271.7L968.4 271.3L968.5 270.9L968.5 270.6L968.6 270.2L968.6 269.8L968.7 269.5L968.7 269.1L968.8 268.8L968.8 268.5L968.9 268.1L968.9 267.8L969.0 267.4L969.0 267.1L969.1 266.8L969.1 266.4L969.2 266.1L969.2 265.8L969.3 265.5L969.3 265.1L969.4 264.8L969.5 264.5L969.5 264.2L969.6 263.9L969.6 263.6L969.7 263.2L969.7 262.9L969.8 262.6L969.8 262.3L969.9 262.0L969.9 261.7L970.0 261.4L970.0 261.1L970.1 260.8L970.1 260.5L970.2 260.2L970.2 259.9L970.3 259.6L970.3 259.4L970.4 259.1L970.4 258.8L970.5 258.5L970.5 259.1L970.6 259.6L970.6 257.7L970.7 257.4L970.8 257.1L970.8 256.8L970.9 256.5L970.9 256.3L971.0 260.3L971.0 255.7L971.1 260.0L971.1 255.2L971.2 254.9L971.2 254.6L971.3 254.4L971.3 254.1L971.4 253.9L971.4 258.7L971.5 258.5L971.5 253.1L971.6 252.8L971.6 252.6L971.7 252.3L971.7 252.0L971.8 264.1L971.8 251.5L971.9 251.3L971.9 251.0L972.0 250.8L972.1 250.5L972.1 260.8L972.2 250.0L972.2 259.2L972.3 249.5L972.3 249.3L972.4 249.0L972.4 255.6L972.5 265.8L972.5 257.3L972.6 248.1L972.6 247.8L972.7 254.8L972.7 254.9L972.8 247.1L972.8 256.6L972.9 250.6L972.9 246.4L973.0 246.2L973.0 245.9L973.1 245.7L973.1 271.7L973.2 245.2L973.2 249.3L973.3 265.7L973.4 260.9L973.4 244.3L973.5 244.1L973.5 271.3L973.6 243.7L973.6 243.4L973.7 243.2L973.7 243.0L973.8 261.0L973.8 242.5L973.9 242.3L973.9 242.1L974.0 241.9L974.0 241.6L974.1 241.4L974.1 251.9L974.2 241.0L974.2 272.3L974.3 240.6L974.3 240.3L974.4 240.1L974.4 239.9L974.5 239.7L974.5 266.5L974.6 239.3L974.7 239.1L974.7 238.8L974.8 253.3L974.8 252.2L974.9 238.2L974.9 238.0L975.0 262.1L975.0 266.1L975.1 237.4L975.1 261.9L975.2 237.0L975.2 236.8L975.3 253.3L975.3 258.3L975.4 236.1L975.4 235.9L975.5 246.5L975.5 235.5L975.6 243.7L975.6 235.1L975.7 234.9L975.7 250.5L975.8 262.8L975.8 234.3L975.9 239.5L976.0 233.9L976.0 246.2L976.1 233.5L976.1 260.2L976.2 233.1L976.2 232.9L976.3 232.7L976.3 257.0L976.4 262.8L976.4 232.1L976.5 232.0L976.5 231.8L976.6 231.6L976.6 253.3L976.7 231.2L976.7 245.0L976.8 230.8L976.8 230.6L976.9 230.4L976.9 230.2L977.0 265.0L977.0 229.8L977.1 252.8L977.1 229.5L977.2 229.3L977.3 229.1L977.3 228.9L977.4 228.7L977.4 228.5L977.5 315.9L977.5 315.9L977.5 310.3L977.6 307.9L977.6 306.1L977.7 304.6L977.7 303.3L977.8 302.1L977.8 301.0L977.9 300.0L977.9 299.0L978.0 298.1L978.0 297.2L978.1 296.4L978.1 295.6L978.2 294.8L978.2 294.1L978.3 293.4L978.3 292.7L978.4 292.0L978.4 291.4L978.5 290.7L978.6 290.1L978.6 289.5L978.7 288.9L978.7 288.3L978.8 287.7L978.8 287.2L978.9 286.6L978.9 286.1L979.0 285.6L979.0 285.1L979.1 284.6L979.1 284.0L979.2 283.6L979.2 283.1L979.3 282.6L979.3 282.1L979.4 281.7L979.4 281.2L979.5 280.7L979.5 280.3L979.6 279.8L979.6 279.4L979.7 279.0L979.7 278.6L979.8 278.1L979.9 277.7L979.9 277.3L980.0 276.9L980.0 276.5L980.1 276.1L980.1 275.7L980.2 275.3L980.2 274.9L980.3 274.5L980.3 274.1L980.4 273.8L980.4 273.4L980.5 273.0L980.5 272.7L980.6 272.3L980.6 271.9L980.7 271.6L980.7 271.2L980.8 270.9L980.8 270.5L980.9 270.2L980.9 269.8L981.0 269.5L981.0 269.1L981.1 268.8L981.2 268.5L981.2 268.1L981.3 267.8L981.3 267.5L981.4 267.1L981.4 266.8L981.5 266.5L981.5 266.2L981.6 265.9L981.6 265.5L981.7 265.2L981.7 264.9L981.8 264.6L981.8 264.3L981.9 264.0L981.9 263.7L982.0 263.4L982.0 263.1L982.1 262.8L982.1 262.5L982.2 262.2L982.2 261.9L982.3 261.6L982.3 261.3L982.4 261.0L982.5 260.7L982.5 260.4L982.6 260.2L982.6 259.9L982.7 259.6L982.7 259.3L982.8 259.0L982.8 258.8L982.9 258.5L982.9 258.2L983.0 257.9L983.0 257.7L983.1 257.4L983.1 257.1L983.2 256.8L983.2 256.6L983.3 257.6L983.3 256.0L983.4 257.0L983.4 255.5L983.5 255.3L983.5 258.3L983.6 254.7L983.6 255.8L983.7 254.2L983.8 254.0L983.8 253.7L983.9 256.5L983.9 258.8L984.0 257.1L984.0 254.0L984.1 252.4L984.1 252.2L984.2 252.0L984.2 252.9L984.3 251.5L984.3 257.4L984.4 251.0L984.4 250.7L984.5 250.5L984.5 250.2L984.6 256.3L984.6 249.8L984.7 249.5L984.7 249.3L984.8 249.0L984.8 248.8L984.9 252.4L984.9 248.3L985.0 248.1L985.1 247.9L985.1 247.6L985.2 247.4L985.2 247.2L985.3 246.9L985.3 246.7L985.4 258.4L985.4 246.3L985.5 246.0L985.5 264.2L985.6 245.6L985.6 245.4L985.7 248.0L985.7 266.7L985.8 244.7L985.8 244.5L985.9 244.2L985.9 260.4L986.0 243.8L986.0 243.6L986.1 243.4L986.1 243.1L986.2 242.9L986.2 242.7L986.3 242.5L986.4 242.3L986.4 242.1L986.5 241.8L986.5 241.6L986.6 241.4L986.6 272.1L986.7 257.2L986.7 240.8L986.8 262.6L986.8 264.6L986.9 240.2L986.9 253.8L987.0 239.7L987.0 239.5L987.1 239.3L987.1 239.1L987.2 238.9L987.2 239.7L987.3 238.5L987.3 238.3L987.4 238.1L987.4 237.9L987.5 267.3L987.5 255.7L987.6 248.7L987.7 237.1L987.7 247.4L987.8 236.7L987.8 236.5L987.9 236.3L987.9 254.8L988.0 246.7L988.0 235.7L988.1 239.3L988.1 235.3L988.2 235.1L988.2 246.3L988.3 234.7L988.3 234.5L988.4 234.3L988.4 234.1L988.5 253.3L988.5 233.7L988.6 233.5L988.6 233.3L988.7 233.2L988.7 233.0L988.8 265.5L988.8 232.6L988.9 232.4L989.0 232.2L989.0 232.0L989.1 259.7L989.1 253.9L989.2 263.4L989.2 231.3L989.3 231.1L989.3 230.9L989.4 230.7L989.4 257.8L989.5 256.9L989.5 230.1L989.6 230.0L989.6 229.8L989.7 263.3L989.7 246.1L989.8 229.2L989.8 254.3L989.9 228.9L989.9 228.7L990.0 230.0L990.0 228.3L990.1 275.8L990.1 228.0L990.2 254.2L990.3 227.6L990.3 227.4L990.4 227.2L990.4 259.0L990.5 226.9L990.5 226.7L990.6 226.5L990.6 226.3L990.7 226.2L990.7 226.0L990.8 225.8L990.8 225.6L990.9 315.9L990.9 315.9L990.9 310.0L991.0 307.6L991.0 305.7L991.1 304.1L991.1 302.7L991.2 301.5L991.2 300.3L991.3 299.3L991.3 298.3L991.4 297.3L991.4 296.4L991.5 295.5L991.6 294.7L991.6 293.9L991.7 293.1L991.7 292.4L991.8 291.6L991.8 290.9L991.9 290.3L991.9 289.6L992.0 288.9L992.0 288.3L992.1 287.7L992.1 287.1L992.2 286.5L992.2 285.9L992.3 285.3L992.3 284.8L992.4 284.2L992.4 283.7L992.5 283.2L992.5 282.6L992.6 282.1L992.6 281.6L992.7 281.1L992.7 280.6L992.8 280.1L992.9 279.6L992.9 279.2L993.0 278.7L993.0 278.2L993.1 277.8L993.1 277.3L993.2 276.9L993.2 276.4L993.3 276.0L993.3 275.6L993.4 275.2L993.4 274.7L993.5 274.3L993.5 273.9L993.6 273.5L993.6 273.1L993.7 272.7L993.7 272.3L993.8 271.9L993.8 271.5L993.9 271.1L993.9 270.7L994.0 270.3L994.0 270.0L994.1 269.6L994.2 269.2L994.2 268.8L994.3 268.5L994.3 268.1L994.4 267.8L994.4 267.4L994.5 267.0L994.5 266.7L994.6 266.3L994.6 266.0L994.7 265.6L994.7 265.3L994.8 265.0L994.8 264.6L994.9 264.3L994.9 264.0L995.0 263.6L995.0 263.3L995.1 263.0L995.1 262.6L995.2 262.3L995.2 262.0L995.3 261.7L995.3 261.4L995.4 261.0L995.5 260.7L995.5 260.4L995.6 260.1L995.6 259.8L995.7 259.5L995.7 259.2L995.8 258.9L995.8 258.6L995.9 258.3L995.9 258.0L996.0 257.7L996.0 257.4L996.1 257.1L996.1 256.8L996.2 256.5L996.2 256.2L996.3 255.9L996.3 255.6L996.4 255.3L996.4 255.1L996.5 254.8L996.5 254.5L996.6 254.2L996.6 253.9L996.7 253.7L996.8 253.4L996.8 253.1L996.9 252.8L996.9 252.6L997.0 252.3L997.0 252.0L997.1 251.7L997.1 251.5L997.2 251.2L997.2 250.9L997.3 250.7L997.3 250.4L997.4 250.1L997.4 249.9L997.5 249.6L997.5 249.4L997.6 249.1L997.6 248.8L997.7 248.6L997.7 248.3L997.8 248.1L997.8 247.8L997.9 247.6L997.9 248.0L998.0 248.9L998.1 246.8L998.1 247.8L998.2 249.3L998.2 246.1L998.3 247.4L998.3 247.9L998.4 245.3L998.4 245.1L998.5 244.8L998.5 244.6L998.6 244.3L998.6 244.1L998.7 271.6L998.7 243.6L998.8 243.4L998.8 249.3L998.9 245.9L998.9 246.1L999.0 242.4L999.0 242.2L999.1 244.5L999.1 249.6L999.2 242.1L999.2 241.3L999.3 241.0L999.4 240.8L999.4 240.6L999.5 240.3L999.5 240.1L999.6 239.9L999.6 253.2L999.7 239.4L999.7 239.2L999.8 239.0L999.8 269.9L999.9 238.5L999.9 238.3L1000.0 238.1L1000.0 237.9L1000.1 237.6L1000.1 237.4L1000.2 237.2L1000.2 237.0L1000.3 236.8L1000.3 236.6L1000.4 236.3L1000.4 236.1L1000.5 235.9L1000.5 235.7L1000.6 235.5L1000.7 259.3L1000.7 235.0L1000.8 234.8L1000.8 234.6L1000.9 234.4L1000.9 234.2L1001.0 234.0L1001.0 233.8L1001.1 233.6L1001.1 233.3L1001.2 233.1L1001.2 232.9L1001.3 232.7L1001.3 232.5L1001.4 232.3L1001.4 232.1L1001.5 251.9L1001.5 261.7L1001.6 231.5L1001.6 231.3L1001.7 231.1L1001.7 230.9L1001.8 230.7L1001.8 230.5L1001.9 230.3L1002.0 230.1L1002.0 229.9L1002.1 229.7L1002.1 229.5L1002.2 229.3L1002.2 229.1L1002.3 228.9L1002.3 228.7L1002.4 228.5L1002.4 228.8L1002.5 228.1L1002.5 227.9L1002.6 227.7L1002.6 227.5L1002.7 227.3L1002.7 227.1L1002.8 226.9L1002.8 226.7L1002.9 226.5L1002.9 226.3L1003.0 256.5L1003.0 225.9L1003.1 238.3L1003.1 225.5L1003.2 225.4L1003.3 241.9L1003.3 248.4L1003.4 254.9L1003.4 224.6L1003.5 224.4L1003.5 224.2L1003.6 224.0L1003.6 223.8L1003.7 261.4L1003.7 223.5L1003.8 223.3L1003.8 249.8L1003.9 222.9L1003.9 256.9L1004.0 225.4L1004.0 246.0L1004.1 236.7L1004.1 222.0L1004.2 221.8L1004.2 247.2L1004.3 224.9L1004.3 258.6L1004.4 240.6L1004.4 238.2L1004.5 220.7L1004.6 220.5L1004.6 220.3L1004.7 220.2L1004.7 220.0L1004.8 219.8L1004.8 219.6L1004.9 219.4L1004.9 237.0L1005.0 241.6L1005.0 218.9L1005.1 241.7L1005.1 218.5L1005.2 231.0L1005.2 218.2L1005.3 218.0L1005.3 217.8L1005.4 239.8L1005.4 237.1L1005.5 217.3L1005.5 217.1L1005.6 217.0L1005.6 216.8L1005.7 216.6L1005.7 244.1L1005.8 216.3L1005.9 216.1L1005.9 242.1L1006.0 222.4L1006.0 215.6L1006.1 215.4L1006.1 215.2L1006.2 215.1L1006.2 214.9L1006.3 214.7L1006.3 239.2L1006.4 214.4L1006.4 214.2L1006.5 251.8L1006.5 213.9L1006.6 213.7L1006.6 231.4L1006.7 213.3L1006.7 221.9L1006.8 213.0L1006.8 212.8L1006.9 212.7L1006.9 216.9L1007.0 212.3L1007.0 212.2L1007.1 212.0L1007.2 211.8L1007.2 211.7L1007.3 315.9L1007.3 315.9L1007.3 304.9L1007.4 301.4L1007.4 298.9L1007.5 296.8L1007.5 295.0L1007.6 293.4L1007.6 292.0L1007.7 290.7L1007.7 289.5L1007.8 288.4L1007.8 287.3L1007.9 286.3L1007.9 285.3L1008.0 284.4L1008.0 283.5L1008.1 282.7L1008.1 281.9L1008.2 281.1L1008.2 280.3L1008.3 279.6L1008.3 278.8L1008.4 278.1L1008.5 277.5L1008.5 276.8L1008.6 276.2L1008.6 275.5L1008.7 274.9L1008.7 274.3L1008.8 273.7L1008.8 273.2L1008.9 272.6L1008.9 272.0L1009.0 271.5L1009.0 270.9L1009.1 270.4L1009.1 269.9L1009.2 269.4L1009.2 268.9L1009.3 268.4L1009.3 267.9L1009.4 267.4L1009.4 266.9L1009.5 266.4L1009.5 265.9L1009.6 265.5L1009.6 265.0L1009.7 264.6L1009.8 264.1L1009.8 263.7L1009.9 263.2L1009.9 262.8L1010.0 262.3L1010.0 261.9L1010.1 261.5L1010.1 261.1L1010.2 260.7L1010.2 260.3L1010.3 260.0L1010.3 259.6L1010.4 259.3L1010.4 258.9L1010.5 258.6L1010.5 258.3L1010.6 257.9L1010.6 257.6L1010.7 257.3L1010.7 257.0L1010.8 256.7L1010.8 256.3L1010.9 256.0L1010.9 255.7L1011.0 255.4L1011.1 255.1L1011.1 254.8L1011.2 254.5L1011.2 254.2L1011.3 253.9L1011.3 253.6L1011.4 253.3L1011.4 253.0L1011.5 252.7L1011.5 252.4L1011.6 252.2L1011.6 251.9L1011.7 251.6L1011.7 251.3L1011.8 251.0L1011.8 250.7L1011.9 250.4L1011.9 250.2L1012.0 249.9L1012.0 249.6L1012.1 249.3L1012.1 249.0L1012.2 248.7L1012.2 248.4L1012.3 248.2L1012.4 247.9L1012.4 247.6L1012.5 247.3L1012.5 247.0L1012.6 246.7L1012.6 246.5L1012.7 246.2L1012.7 245.9L1012.8 245.6L1012.8 245.3L1012.9 245.0L1012.9 244.7L1013.0 244.5L1013.0 244.2L1013.1 243.9L1013.1 243.6L1013.2 243.3L1013.2 243.0L1013.3 242.7L1013.3 242.5L1013.4 242.2L1013.4 241.9L1013.5 241.6L1013.5 241.3L1013.6 241.0L1013.7 240.8L1013.7 240.5L1013.8 240.2L1013.8 239.9L1013.9 239.6L1013.9 239.3L1014.0 239.1L1014.0 238.9L1014.1 238.7L1014.1 238.6L1014.2 238.4L1014.2 238.2L1014.3 238.0L1014.3 237.8L1014.4 237.6L1014.4 237.4L1014.5 237.2L1014.5 237.0L1014.6 236.8L1014.6 236.6L1014.7 236.4L1014.7 236.2L1014.8 236.0L1014.8 235.8L1014.9 235.6L1015.0 235.4L1015.0 235.2L1015.1 235.0L1015.1 234.8L1015.2 235.2L1015.2 234.7L1015.3 236.1L1015.3 234.0L1015.4 233.8L1015.4 233.6L1015.5 235.7L1015.5 233.2L1015.6 238.1L1015.6 232.8L1015.7 232.6L1015.7 232.4L1015.8 241.4L1015.8 236.6L1015.9 231.7L1015.9 242.8L1016.0 231.3L1016.0 231.1L1016.1 230.8L1016.1 230.6L1016.2 237.6L1016.3 232.8L1016.3 230.0L1016.4 244.6L1016.4 229.5L1016.5 235.0L1016.5 229.0L1016.6 240.0L1016.6 229.8L1016.7 231.1L1016.7 228.1L1016.8 227.8L1016.8 229.8L1016.9 236.5L1016.9 228.0L1017.0 229.5L1017.0 226.6L1017.1 226.4L1017.1 226.2L1017.2 233.0L1017.2 233.8L1017.3 225.4L1017.3 225.6L1017.4 224.9L1017.4 224.7L1017.5 227.1L1017.6 224.9L1017.6 224.5L1017.7 223.7L1017.7 223.5L1017.8 223.4L1017.8 223.2L1017.9 223.1L1017.9 222.9L1018.0 222.8L1018.0 222.6L1018.1 222.5L1018.1 222.3L1018.2 222.2L1018.2 222.0L1018.3 221.9L1018.3 221.7L1018.4 221.6L1018.4 221.5L1018.5 221.4L1018.5 221.2L1018.6 221.1L1018.6 221.0L1018.7 220.9L1018.7 220.7L1018.8 220.6L1018.9 220.5L1018.9 220.4L1019.0 220.2L1019.0 220.1L1019.1 220.0L1019.1 219.8L1019.2 219.7L1019.2 219.6L1019.3 219.4L1019.3 220.2L1019.4 219.1L1019.4 219.0L1019.5 219.0L1019.5 218.7L1019.6 219.1L1019.6 218.8L1019.7 218.9L1019.7 218.1L1019.8 219.5L1019.8 219.3L1019.9 222.3L1019.9 217.4L1020.0 217.3L1020.0 219.3L1020.1 216.9L1020.2 216.8L1020.2 216.6L1020.3 218.9L1020.3 216.2L1020.4 218.2L1020.4 218.6L1020.5 215.7L1020.5 215.5L1020.6 215.5L1020.6 215.2L1020.7 215.0L1020.7 215.3L1020.8 214.6L1020.8 214.4L1020.9 214.2L1020.9 214.0L1021.0 213.8L1021.0 213.6L1021.1 213.4L1021.1 213.2L1021.2 213.0L1021.2 212.8L1021.3 212.6L1021.3 212.5L1021.4 212.3L1021.5 212.1L1021.5 212.0L1021.6 212.0L1021.6 211.9L1021.7 211.8L1021.7 211.7L1021.8 211.6L1021.8 211.5L1021.9 211.4L1021.9 211.3L1022.0 211.2L1022.0 211.1L1022.1 211.1L1022.1 211.0L1022.2 210.9L1022.2 210.8L1022.3 210.7L1022.3 210.6L1022.4 210.5L1022.4 211.2L1022.5 210.3L1022.5 210.2L1022.6 214.8L1022.6 209.9L1022.7 209.8L1022.8 209.7L1022.8 209.6L1022.9 209.5L1022.9 209.4L1023.0 209.2L1023.0 209.1L1023.1 209.6L1023.1 214.1L1023.2 208.8L1023.2 208.6L1023.3 208.5L1023.3 225.0L1023.4 211.9L1023.4 216.2L1023.5 207.9L1023.5 207.8L1023.6 207.6L1023.6 220.3L1023.7 207.3L1023.7 207.1L1023.8 207.0L1023.8 224.0L1023.9 211.8L1023.9 217.2L1024.0 287.2L1024.1 206.1L1024.1 205.9L1024.2 205.8L1024.2 217.5L1024.3 205.4L1024.3 205.2L1024.4 205.0L1024.4 204.8L1024.5 204.6L1024.5 204.5L1024.6 226.9L1024.6 215.4L1024.7 203.9L1024.7 203.7L1024.8 210.4L1024.8 203.8L1024.9 203.1L1024.9 202.9L1025.0 213.5L1025.0 202.5L1025.1 202.3L1025.1 202.1L1025.2 212.3L1025.2 201.8L1025.3 221.8L1025.4 223.6L1025.4 201.6L1025.5 201.8L1025.5 204.1L1025.6 226.0L1025.6 218.5L1025.7 201.2L1025.7 205.7L1025.8 201.0L1025.8 200.9L1025.9 205.1L1025.9 200.7L1026.0 200.6L1026.0 204.3L1026.1 218.1L1026.1 208.5L1026.2 200.2L1026.2 201.2L1026.3 205.6L1026.3 205.9L1026.4 209.3L1026.4 213.8L1026.5 199.6L1026.5 199.5L1026.6 199.3L1026.7 203.4L1026.7 224.6L1026.8 220.0L1026.8 221.2L1026.9 198.7L1026.9 198.6L1027.0 202.4L1027.0 198.3L1027.1 198.2L1027.1 198.0L1027.2 197.9L1027.2 197.7L1027.3 197.6L1027.3 197.4L1027.4 210.8L1027.4 225.8L1027.5 196.9L1027.5 196.8L1027.6 230.7L1027.6 199.5L1027.7 196.3L1027.7 197.6L1027.8 221.7L1027.8 209.4L1027.9 195.6L1028.0 213.2L1028.0 195.2L1028.1 195.0L1028.1 215.9L1028.2 212.7L1028.2 194.4L1028.3 194.2L1028.3 228.2L1028.4 194.7L1028.4 194.1L1028.5 193.6L1028.5 193.4L1028.6 193.3L1028.6 194.0L1028.7 193.0L1028.7 222.4L1028.8 192.6L1028.8 217.1L1028.9 192.3L1028.9 192.2L1029.0 192.1L1029.0 206.5L1029.1 192.1L1029.1 209.5L1029.2 192.0L1029.3 196.8L1029.3 205.4L1029.4 191.9L1029.4 192.3L1029.5 192.2L1029.5 192.7L1029.6 191.7L1029.6 219.7L1029.7 191.6L1029.7 191.7L1029.8 191.6L1029.8 191.5L1029.9 191.5L1029.9 215.2L1030.0 191.4L1030.0 191.3L1030.1 204.0L1030.1 191.2L1030.2 191.4L1030.2 191.2L1030.3 191.0L1030.3 209.6L1030.4 202.1L1030.4 201.9L1030.5 190.7L1030.6 190.9L1030.6 200.2L1030.7 190.4L1030.7 190.4L1030.8 220.0L1030.8 190.2L1030.9 190.1L1030.9 196.9L1031.0 189.9L1031.0 189.8L1031.1 189.7L1031.1 189.5L1031.2 189.4L1031.2 214.2L1031.3 196.7L1031.3 220.4L1031.4 198.7L1031.4 188.8L1031.5 188.7L1031.5 191.9L1031.6 188.4L1031.6 188.3L1031.7 210.7L1031.7 188.5L1031.8 187.8L1031.9 195.0L1031.9 187.5L1032.0 187.4L1032.0 187.2L1032.1 189.9L1032.1 205.9L1032.2 186.7L1032.2 186.6L1032.3 186.4L1032.3 203.2L1032.4 196.0L1032.4 187.8L1032.5 185.7L1032.5 188.2L1032.6 198.4L1032.6 185.2L1032.7 185.0L1032.7 185.1L1032.8 185.0L1032.8 201.0L1032.9 200.1L1032.9 184.8L1033.0 185.2L1033.0 190.2L1033.1 200.3L1033.2 184.7L1033.2 190.3L1033.3 192.1L1033.3 200.7L1033.4 184.5L1033.4 184.5L1033.5 184.4L1033.5 184.4L1033.6 188.7L1033.6 184.3L1033.7 187.5L1033.7 190.9L1033.8 184.1L1033.8 184.0L1033.9 184.0L1033.9 196.8L1034.0 183.8L1034.0 200.8L1034.1 183.8L1034.1 185.5L1034.2 188.4L1034.2 183.4L1034.3 193.0L1034.3 183.2L1034.4 183.9L1034.5 185.1L1034.5 194.1L1034.6 182.8L1034.6 182.7L1034.7 182.6L1034.7 192.6L1034.8 182.3L1034.8 182.2L1034.9 183.6L1034.9 187.0L1035.0 181.8L1035.0 181.7L1035.1 287.1L1035.1 181.4L1035.2 183.0L1035.2 181.1L1035.3 181.0L1035.3 180.8L1035.4 180.6L1035.4 182.4L1035.5 180.3L1035.5 180.1L1035.6 192.4L1035.6 179.8L1035.7 179.6L1035.8 186.4L1035.8 179.3L1035.9 186.1L1035.9 178.9L1036.0 179.4L1036.0 183.7L1036.1 188.6L1036.1 178.2L1036.2 179.4L1036.2 193.4L1036.3 177.6L1036.3 177.5L1036.4 177.2L1036.4 178.7L1036.5 176.9L1036.5 177.0L1036.6 176.9L1036.6 212.0L1036.7 177.8L1036.7 176.7L1036.8 182.1L1036.8 218.8L1036.9 176.6L1036.9 176.5L1037.0 176.5L1037.1 176.4L1037.1 192.1L1037.2 176.4L1037.2 176.2L1037.3 220.4L1037.3 176.1L1037.4 176.1L1037.4 176.0L1037.5 175.9L1037.5 235.6L1037.6 175.8L1037.6 201.2L1037.7 232.6L1037.7 181.6L1037.8 178.2L1037.8 232.5L1037.9 175.3L1037.9 175.2L1038.0 190.4L1038.0 180.7L1038.1 174.9L1038.1 228.4L1038.2 174.7L1038.2 187.8L1038.3 174.5L1038.4 286.9L1038.4 174.3L1038.5 193.2L1038.5 174.4L1038.6 174.1L1038.6 174.0L1038.7 173.9L1038.7 173.8L1038.8 173.7L1038.8 173.6L1038.9 192.4L1038.9 173.4L1039.0 176.3L1039.0 173.2L1039.1 173.1L1039.1 173.0L1039.2 172.9L1039.2 172.7L1039.3 190.3L1039.3 176.1L1039.4 172.4L1039.4 172.2L1039.5 198.3L1039.5 172.0L1039.6 174.6L1039.7 171.7L1039.7 171.6L1039.8 171.4L1039.8 171.3L1039.9 171.1L1039.9 194.2L1040.0 170.8L1040.0 218.2L1040.1 192.1L1040.1 215.7L1040.2 170.2L1040.2 172.1L1040.3 170.2L1040.3 171.7L1040.4 170.2L1040.4 176.6L1040.5 170.2L1040.5 230.7L1040.6 177.3L1040.6 181.1L1040.7 181.4L1040.7 170.2L1040.8 170.2L1040.8 177.0L1040.9 192.2L1041.0 235.6L1041.0 186.0L1041.1 176.4L1041.1 179.8L1041.2 181.7L1041.2 185.2L1041.3 170.0L1041.3 170.0L1041.4 170.0L1041.4 188.4L1041.5 177.8L1041.5 210.5L1041.6 187.8L1041.6 203.4L1041.7 169.7L1041.7 169.7L1041.8 211.3L1041.8 169.5L1041.9 169.5L1041.9 217.1L1042.0 231.2L1042.0 197.6L1042.1 173.2L1042.1 171.9L1042.2 169.0L1042.3 168.9L1042.3 168.8L1042.4 168.7L1042.4 168.6L1042.5 168.5L1042.5 173.8L1042.6 168.3L1042.6 168.2L1042.7 168.1L1042.7 256.8L1042.8 177.3L1042.8 184.3L1042.9 169.2L1042.9 167.5L1043.0 207.6L1043.0 173.9L1043.1 167.0L1043.1 166.9L1043.2 170.8L1043.2 166.6L1043.3 166.5L1043.3 168.4L1043.4 166.1L1043.4 166.0L1043.5 165.8L1043.6 249.3L1043.6 175.8L1043.7 167.1L1043.7 165.1L1043.8 165.0L1043.8 164.8L1043.9 173.4L1043.9 186.9L1044.0 164.3L1044.0 164.3L1044.1 292.5L1044.1 164.3L1044.2 182.7L1044.2 164.2L1044.3 164.2L1044.3 164.2L1044.4 174.2L1044.4 164.2L1044.5 164.2L1044.5 174.7L1044.6 164.1L1044.6 164.1L1044.7 213.1L1044.7 164.0L1044.8 164.0L1044.9 169.5L1044.9 163.9L1045.0 163.9L1045.0 210.8L1045.1 169.2L1045.1 190.4L1045.2 163.7L1045.2 163.6L1045.3 164.3L1045.3 163.5L1045.4 163.4L1045.4 187.0L1045.5 202.5L1045.5 170.7L1045.6 165.3L1045.6 163.1L1045.7 172.8L1045.7 263.2L1045.8 164.0L1045.8 216.4L1045.9 204.3L1045.9 204.0L1046.0 162.4L1046.0 162.2L1046.1 162.1L1046.2 188.4L1046.2 161.9L1046.3 161.7L1046.3 161.6L1046.4 161.5L1046.4 190.9L1046.5 193.6L1046.5 161.0L1046.6 162.4L1046.6 192.2L1046.7 160.6L1046.7 166.5L1046.8 163.9L1046.8 162.3L1046.9 194.2L1046.9 160.0L1047.0 168.9L1047.0 169.1L1047.1 159.2L1047.1 159.1L1047.2 158.9L1047.2 158.7L1047.3 161.0L1047.3 158.3L1047.4 158.1L1047.5 173.5L1047.5 157.8L1047.6 183.1L1047.6 158.4L1047.7 157.2L1047.7 157.1L1047.8 157.0L1047.8 156.9L1047.9 156.9L1047.9 156.9L1048.0 156.9L1048.0 188.1L1048.1 156.8L1048.1 157.8L1048.2 170.6L1048.2 184.1L1048.3 156.8L1048.3 156.8L1048.4 156.8L1048.4 156.8L1048.5 156.8L1048.5 156.9L1048.6 156.9L1048.6 168.5L1048.7 156.9L1048.8 158.8L1048.8 220.1L1048.9 167.1L1048.9 156.9L1049.0 165.0L1049.0 239.0L1049.1 217.7L1049.1 156.8L1049.2 156.8L1049.2 156.8L1049.3 156.7L1049.3 156.7L1049.4 212.7L1049.4 178.7L1049.5 212.0L1049.5 156.5L1049.6 156.5L1049.6 156.4L1049.7 156.4L1049.7 156.3L1049.8 156.2L1049.8 156.2L1049.9 158.6L1049.9 197.0L1050.0 228.3L1050.1 155.8L1050.1 155.8L1050.2 155.7L1050.2 155.6L1050.3 155.5L1050.3 155.4L1050.4 155.3L1050.4 192.3L1050.5 212.3L1050.5 155.1L1050.6 157.3L1050.6 192.6L1050.7 154.6L1050.7 154.4L1050.8 154.3L1050.8 203.9L1050.9 154.0L1050.9 156.9L1051.0 157.6L1051.0 199.5L1051.1 153.5L1051.1 153.3L1051.2 227.8L1051.2 233.8L1051.3 217.6L1051.4 152.8L1051.4 202.1L1051.5 152.6L1051.5 200.8L1051.6 152.4L1051.6 152.5L1051.7 202.3L1051.7 152.5L1051.8 152.5L1051.8 152.5L1051.9 192.3L1051.9 153.9L1052.0 152.6L1052.0 152.6L1052.1 276.2L1052.1 152.6L1052.2 152.6L1052.2 187.4L1052.3 152.6L1052.3 153.0L1052.4 152.6L1052.4 152.6L1052.5 152.6L1052.5 152.6L1052.6 155.3L1052.7 161.7L1052.7 152.5L1052.8 218.8L1052.8 176.9L1052.9 154.7L1052.9 152.4L1053.0 152.4L1053.0 152.3L1053.1 159.0L1053.1 152.2L1053.2 152.6L1053.2 152.1L1053.3 169.4L1053.3 167.4L1053.4 161.7L1053.4 169.5L1053.5 151.7L1053.5 151.6L1053.6 151.5L1053.6 162.4L1053.7 151.3L1053.7 151.2L1053.8 151.7L1053.8 151.3L1053.9 150.9L1054.0 165.3L1054.0 150.6L1054.1 184.0L1054.1 150.4L1054.2 193.0L1054.2 161.6L1054.3 186.2L1054.3 149.8L1054.4 186.8L1054.4 149.5L1054.5 162.3L1054.5 149.2L1054.6 149.1L1054.6 194.7L1054.7 156.4L1054.7 148.6L1054.8 148.4L1054.8 148.7L1054.9 212.7L1054.9 148.0L1055.0 186.3L1055.0 148.2L1055.1 166.6L1055.1 147.8L1055.2 157.9L1055.3 147.4L1055.3 146.9L1055.4 146.9L1055.4 209.1L1055.5 150.0L1055.5 146.9L1055.6 146.9L1055.6 146.9L1055.7 151.3L1055.7 146.8L1055.8 146.8L1055.8 146.8L1055.9 146.8L1055.9 206.9L1056.0 146.8L1056.0 146.7L1056.1 146.7L1056.1 150.9L1056.2 146.7L1056.2 155.8L1056.3 147.6L1056.3 155.8L1056.4 146.5L1056.4 146.5L1056.5 203.8L1056.6 146.3L1056.6 146.3L1056.7 146.2L1056.7 146.7L1056.8 146.1L1056.8 162.4L1056.9 145.9L1056.9 188.2L1057.0 150.8L1057.0 145.8L1057.1 145.6L1057.1 287.3L1057.2 145.4L1057.2 145.3L1057.3 145.2L1057.3 145.1L1057.4 145.0L1057.4 145.6L1057.5 144.7L1057.5 144.6L1057.6 145.4L1057.6 144.3L1057.7 144.7L1057.7 151.3L1057.8 143.9L1057.9 151.1L1057.9 254.6L1058.0 153.8L1058.0 143.3L1058.1 151.2L1058.1 143.7L1058.2 147.3L1058.2 142.6L1058.3 142.5L1058.3 174.9L1058.4 143.9L1058.4 142.2L1058.5 142.2L1058.5 141.9L1058.6 141.8L1058.6 143.7L1058.7 163.4L1058.7 151.2L1058.8 141.3L1058.8 141.1L1058.9 141.0L1058.9 140.9L1059.0 140.8L1059.0 140.8L1059.1 144.6L1059.2 140.9L1059.2 194.9L1059.3 141.0L1059.3 158.6L1059.4 141.1L1059.4 158.5L1059.5 141.2L1059.5 141.2L1059.6 141.3L1059.6 160.1L1059.7 141.3L1059.7 176.7L1059.8 141.4L1059.8 144.9L1059.9 288.3L1059.9 167.1L1060.0 141.7L1060.0 141.5L1060.1 148.6L1060.1 141.5L1060.2 141.5L1060.2 145.7L1060.3 141.5L1060.3 145.0L1060.4 150.4L1060.5 141.5L1060.5 149.7L1060.6 164.1L1060.6 145.3L1060.7 141.4L1060.7 146.0L1060.8 171.7L1060.8 141.3L1060.9 188.0L1060.9 171.0L1061.0 174.4L1061.0 150.1L1061.1 141.0L1061.1 141.0L1061.2 140.9L1061.2 140.8L1061.3 147.1L1061.3 145.7L1061.4 140.6L1061.4 193.7L1061.5 140.5L1061.5 200.1L1061.6 140.2L1061.6 146.6L1061.7 218.4L1061.8 139.8L1061.8 198.2L1061.9 141.6L1061.9 139.5L1062.0 139.3L1062.0 139.2L1062.1 139.3L1062.1 138.9L1062.2 173.2L1062.2 139.6L1062.3 160.2L1062.3 146.2L1062.4 138.2L1062.4 225.5L1062.5 137.9L1062.5 175.8L1062.6 199.6L1062.6 171.7L1062.7 139.2L1062.7 155.7L1062.8 149.5L1062.8 163.7L1062.9 160.6L1062.9 137.2L1063.0 138.7L1063.1 137.3L1063.1 190.9L1063.2 137.9L1063.2 171.9L1063.3 162.8L1063.3 278.5L1063.4 137.4L1063.4 137.4L1063.5 139.1L1063.5 137.4L1063.6 158.5L1063.6 149.1L1063.7 137.4L1063.7 151.8L1063.8 137.4L1063.8 137.4L1063.9 137.4L1063.9 153.1L1064.0 143.7L1064.0 165.0L1064.1 137.3L1064.1 155.0L1064.2 137.2L1064.2 137.2L1064.3 194.8L1064.4 215.8L1064.4 137.0L1064.5 137.0L1064.5 154.5L1064.6 221.3L1064.6 137.3L1064.7 136.7L1064.7 151.1L1064.8 136.5L1064.8 136.4L1064.9 217.3L1064.9 170.6L1065.0 136.1L1065.0 136.0L1065.1 135.9L1065.1 135.7L1065.2 135.6L1065.2 135.5L1065.3 135.4L1065.3 135.2L1065.4 135.1L1065.4 218.9L1065.5 134.8L1065.5 149.1L1065.6 134.5L1065.7 134.3L1065.7 214.8L1065.8 134.0L1065.8 140.4L1065.9 151.6L1065.9 133.5L1066.0 153.8L1066.0 135.4L1066.1 142.4L1066.1 140.1L1066.2 132.7L1066.2 132.4L1066.3 147.3L1066.3 132.1L1066.4 131.9L1066.4 131.7L1066.5 168.7L1066.5 131.4L1066.6 179.1L1066.6 151.2L1066.7 198.2L1066.7 133.8L1066.8 131.4L1066.8 147.1L1066.9 133.2L1067.0 131.4L1067.0 152.4L1067.1 139.1L1067.1 131.4L1067.2 147.6L1067.2 177.2L1067.3 131.5L1067.3 131.4L1067.4 138.5L1067.4 151.2L1067.5 131.3L1067.5 176.7L1067.6 131.3L1067.6 131.2L1067.7 168.1L1067.7 131.6L1067.8 131.1L1067.8 132.9L1067.9 192.1L1067.9 130.9L1068.0 130.9L1068.0 158.8L1068.1 130.7L1068.1 130.7L1068.2 130.7L1068.3 130.6L1068.3 149.1L1068.4 130.6L1068.4 128.2L1068.5 315.9L1068.5 315.9L1068.5 310.2L1068.6 307.9L1068.6 306.1L1068.7 304.6L1068.7 303.2L1068.8 302.0L1068.8 300.9L1068.9 299.9L1068.9 298.9L1069.0 298.0L1069.0 297.1L1069.1 296.3L1069.1 295.5L1069.2 294.7L1069.2 294.0L1069.3 293.3L1069.3 292.6L1069.4 291.9L1069.4 291.2L1069.5 290.6L1069.6 290.0L1069.6 289.4L1069.7 288.8L1069.7 288.2L1069.8 287.6L1069.8 287.0L1069.9 286.5L1069.9 285.9L1070.0 285.4L1070.0 284.9L1070.1 284.4L1070.1 283.9L1070.2 283.4L1070.2 282.9L1070.3 282.4L1070.3 281.9L1070.4 281.5L1070.4 281.0L1070.5 280.6L1070.5 280.1L1070.6 279.7L1070.6 279.2L1070.7 278.8L1070.7 278.4L1070.8 277.9L1070.9 277.5L1070.9 277.1L1071.0 276.7L1071.0 276.3L1071.1 275.9L1071.1 275.5L1071.2 275.1L1071.2 274.7L1071.3 274.3L1071.3 273.9L1071.4 273.5L1071.4 273.2L1071.5 272.8L1071.5 272.4L1071.6 272.1L1071.6 271.7L1071.7 271.3L1071.7 271.0L1071.8 270.6L1071.8 270.3L1071.9 269.9L1071.9 269.6L1072.0 269.2L1072.0 268.9L1072.1 268.5L1072.2 268.2L1072.2 267.9L1072.3 267.5L1072.3 267.2L1072.4 266.9L1072.4 266.6L1072.5 266.2L1072.5 265.9L1072.6 265.6L1072.6 265.3L1072.7 265.0L1072.7 265.2L1072.8 264.3L1072.8 264.7L1072.9 263.7L1072.9 263.4L1073.0 263.1L1073.0 262.8L1073.1 262.5L1073.1 262.5L1073.2 261.9L1073.2 261.6L1073.3 261.3L1073.3 261.0L1073.4 260.7L1073.5 260.4L1073.5 262.0L1073.6 259.9L1073.6 265.2L1073.7 259.3L1073.7 265.2L1073.8 258.7L1073.8 258.5L1073.9 258.2L1073.9 257.9L1074.0 257.6L1074.0 260.2L1074.1 257.1L1074.1 256.8L1074.2 256.5L1074.2 256.3L1074.3 271.7L1074.3 255.7L1074.4 255.5L1074.4 255.2L1074.5 254.9L1074.5 254.7L1074.6 260.5L1074.6 256.2L1074.7 253.9L1074.8 253.6L1074.8 253.4L1074.9 253.1L1074.9 267.4L1075.0 271.9L1075.0 252.4L1075.1 252.1L1075.1 251.9L1075.2 251.6L1075.2 251.4L1075.3 251.1L1075.3 250.9L1075.4 264.8L1075.4 275.3L1075.5 268.2L1075.5 260.4L1075.6 249.6L1075.6 268.3L1075.7 267.0L1075.7 248.9L1075.8 248.7L1075.8 248.4L1075.9 248.2L1075.9 248.0L1076.0 247.7L1076.1 247.5L1076.1 247.3L1076.2 247.0L1076.2 246.8L1076.3 267.2L1076.3 246.3L1076.4 246.1L1076.4 245.9L1076.5 245.7L1076.5 245.4L1076.6 245.2L1076.6 272.0L1076.7 244.8L1076.7 244.5L1076.8 247.6L1076.8 253.3L1076.9 243.9L1076.9 243.6L1077.0 249.5L1077.0 243.2L1077.1 273.0L1077.1 270.2L1077.2 242.5L1077.2 242.3L1077.3 242.1L1077.4 241.9L1077.4 241.7L1077.5 241.4L1077.5 241.2L1077.6 241.0L1077.6 245.9L1077.7 240.6L1077.7 258.7L1077.8 263.9L1077.8 240.0L1077.9 239.7L1077.9 246.6L1078.0 252.1L1078.0 239.1L1078.1 238.9L1078.1 267.7L1078.2 246.9L1078.2 238.3L1078.3 238.1L1078.3 250.9L1078.4 237.7L1078.4 315.9L1078.4 315.9L1078.5 310.2L1078.5 307.9L1078.6 306.1L1078.7 304.6L1078.7 303.2L1078.8 302.0L1078.8 300.9L1078.9 299.9L1078.9 298.9L1079.0 298.0L1079.0 297.1L1079.1 296.3L1079.1 295.5L1079.2 294.7L1079.2 294.0L1079.3 293.3L1079.3 292.6L1079.4 291.9L1079.4 291.2L1079.5 290.6L1079.5 290.0L1079.6 289.3L1079.6 288.8L1079.7 288.2L1079.7 287.6L1079.8 287.0L1079.8 286.5L1079.9 285.9L1080.0 285.4L1080.0 284.9L1080.1 284.4L1080.1 283.9L1080.2 283.4L1080.2 282.9L1080.3 282.4L1080.3 281.9L1080.4 281.5L1080.4 281.0L1080.5 280.5L1080.5 280.1L1080.6 279.7L1080.6 279.2L1080.7 278.8L1080.7 278.4L1080.8 277.9L1080.8 277.5L1080.9 277.1L1080.9 276.7L1081.0 276.3L1081.0 275.9L1081.1 275.5L1081.1 275.1L1081.2 274.7L1081.3 274.3L1081.3 273.9L1081.4 273.5L1081.4 273.2L1081.5 272.8L1081.5 272.4L1081.6 272.1L1081.6 271.7L1081.7 271.3L1081.7 271.0L1081.8 270.6L1081.8 270.3L1081.9 269.9L1081.9 269.6L1082.0 269.2L1082.0 268.9L1082.1 268.5L1082.1 268.2L1082.2 267.9L1082.2 267.5L1082.3 267.2L1082.3 266.9L1082.4 266.6L1082.4 266.2L1082.5 266.2L1082.6 265.6L1082.6 266.5L1082.7 265.0L1082.7 266.6L1082.8 266.6L1082.8 266.1L1082.9 263.7L1082.9 264.3L1083.0 263.1L1083.0 262.8L1083.1 262.5L1083.1 266.0L1083.2 261.9L1083.2 261.6L1083.3 261.3L1083.3 261.0L1083.4 260.7L1083.4 260.4L1083.5 260.2L1083.5 259.9L1083.6 266.0L1083.6 259.3L1083.7 259.0L1083.7 265.9L1083.8 258.5L1083.9 258.2L1083.9 257.9L1084.0 257.6L1084.0 257.3L1084.1 257.1L1084.1 256.8L1084.2 256.5L1084.2 256.3L1084.3 273.4L1084.3 267.9L1084.4 255.5L1084.4 275.1L1084.5 254.9L1084.5 254.7L1084.6 254.4L1084.6 254.2L1084.7 253.9L1084.7 253.6L1084.8 253.4L1084.8 267.2L1084.9 265.5L1084.9 252.6L1085.0 252.4L1085.0 252.1L1085.1 251.9L1085.2 264.0L1085.2 251.4L1085.3 251.1L1085.3 250.9L1085.4 250.6L1085.4 250.4L1085.5 271.3L1085.5 264.8L1085.6 270.5L1085.6 249.4L1085.7 273.8L1085.7 248.9L1085.8 255.5L1085.8 274.9L1085.9 248.2L1085.9 248.0L1086.0 247.7L1086.0 276.1L1086.1 247.3L1086.1 247.0L1086.2 246.8L1086.2 246.6L1086.3 246.3L1086.3 246.1L1086.4 271.2L1086.5 249.1L1086.5 269.3L1086.6 245.2L1086.6 245.0L1086.7 260.3L1086.7 244.5L1086.8 244.3L1086.8 244.1L1086.9 243.9L1086.9 270.2L1087.0 243.4L1087.0 267.4L1087.1 243.0L1087.1 242.7L1087.2 242.5L1087.2 242.3L1087.3 242.1L1087.3 241.9L1087.4 241.7L1087.4 241.4L1087.5 241.2L1087.5 256.9L1087.6 240.8L1087.6 240.6L1087.7 261.9L1087.8 262.6L1087.8 264.2L1087.9 268.8L1087.9 239.5L1088.0 239.3L1088.0 239.1L1088.1 315.9L1088.1 315.9L1088.1 311.1L1088.2 309.1L1088.2 307.6L1088.3 306.3L1088.3 305.1L1088.4 304.1L1088.4 303.2L1088.5 302.3L1088.5 301.5L1088.6 300.7L1088.6 299.9L1088.7 299.2L1088.7 298.5L1088.8 297.9L1088.8 297.2L1088.9 296.6L1088.9 296.0L1089.0 295.5L1089.1 294.9L1089.1 294.4L1089.2 293.8L1089.2 293.3L1089.3 292.8L1089.3 292.3L1089.4 291.8L1089.4 291.3L1089.5 290.9L1089.5 290.4L1089.6 290.0L1089.6 289.5L1089.7 289.1L1089.7 288.7L1089.8 288.2L1089.8 287.8L1089.9 287.4L1089.9 287.0L1090.0 286.6L1090.0 286.2L1090.1 285.8L1090.1 285.4L1090.2 285.1L1090.2 284.7L1090.3 284.3L1090.4 284.0L1090.4 283.6L1090.5 283.2L1090.5 282.9L1090.6 282.5L1090.6 282.2L1090.7 281.8L1090.7 281.5L1090.8 281.2L1090.8 280.8L1090.9 280.5L1090.9 280.2L1091.0 279.9L1091.0 279.5L1091.1 279.2L1091.1 278.9L1091.2 278.6L1091.2 283.1L1091.3 278.0L1091.3 277.7L1091.4 277.4L1091.4 278.6L1091.5 276.8L1091.5 276.5L1091.6 279.4L1091.7 275.9L1091.7 275.6L1091.8 275.3L1091.8 277.3L1091.9 274.8L1091.9 274.5L1092.0 274.2L1092.0 286.6L1092.1 273.6L1092.1 276.1L1092.2 273.1L1092.2 276.8L1092.3 287.4L1092.3 272.3L1092.4 287.0L1092.4 289.4L1092.5 271.5L1092.5 271.2L1092.6 287.6L1092.6 281.7L1092.7 270.5L1092.7 270.2L1092.8 288.8L1092.8 282.8L1092.9 283.4L1093.0 283.6L1093.0 284.6L1093.1 269.5L1093.1 268.5L1093.2 272.6L1093.2 268.0L1093.3 284.9L1093.3 267.5L1093.4 267.3L1093.4 287.4L1093.5 266.8L1093.5 266.6L1093.6 281.4L1093.6 266.1L1093.7 265.9L1093.7 265.6L1093.8 265.4L1093.8 275.0L1093.9 264.9L1093.9 264.7L1094.0 269.3L1094.0 264.3L1094.1 264.0L1094.1 263.8L1094.2 279.6L1094.3 270.1L1094.3 263.1L1094.4 262.9L1094.4 262.7L1094.5 315.9L1094.5 315.9L1094.5 310.3L1094.6 308.0L1094.6 306.2L1094.7 304.7L1094.7 303.4L1094.8 302.2L1094.8 301.1L1094.9 300.1L1094.9 299.1L1095.0 298.2L1095.0 297.4L1095.1 296.6L1095.1 295.8L1095.2 295.0L1095.2 294.3L1095.3 293.6L1095.3 292.9L1095.4 292.2L1095.4 291.6L1095.5 290.9L1095.6 290.3L1095.6 289.7L1095.7 289.1L1095.7 288.5L1095.8 288.0L1095.8 287.4L1095.9 286.9L1095.9 286.4L1096.0 285.8L1096.0 285.3L1096.1 284.8L1096.1 284.3L1096.2 283.8L1096.2 283.3L1096.3 282.9L1096.3 282.4L1096.4 281.9L1096.4 281.5L1096.5 281.0L1096.5 280.6L1096.6 280.1L1096.6 279.7L1096.7 279.3L1096.7 278.9L1096.8 278.4L1096.9 278.0L1096.9 277.6L1097.0 277.2L1097.0 276.8L1097.1 276.4L1097.1 276.0L1097.2 275.6L1097.2 275.2L1097.3 274.9L1097.3 274.5L1097.4 274.1L1097.4 273.7L1097.5 273.4L1097.5 273.0L1097.6 272.6L1097.6 272.3L1097.7 271.9L1097.7 271.6L1097.8 271.2L1097.8 270.9L1097.9 270.5L1097.9 270.2L1098.0 269.9L1098.0 269.5L1098.1 269.2L1098.2 268.8L1098.2 268.5L1098.3 268.2L1098.3 267.9L1098.4 267.5L1098.4 267.2L1098.5 266.9L1098.5 266.6L1098.6 266.3L1098.6 266.0L1098.7 265.6L1098.7 265.3L1098.8 265.0L1098.8 264.7L1098.9 264.4L1098.9 264.1L1099.0 263.8L1099.0 263.5L1099.1 263.2L1099.1 262.9L1099.2 262.6L1099.2 262.3L1099.3 262.1L1099.3 261.8L1099.4 261.5L1099.5 261.2L1099.5 260.9L1099.6 260.6L1099.6 260.3L1099.7 260.1L1099.7 259.8L1099.8 259.5L1099.8 259.2L1099.9 259.0L1099.9 258.7L1100.0 258.4L1100.0 258.1L1100.1 257.9L1100.1 257.6L1100.2 257.3L1100.2 258.3L1100.3 256.8L1100.3 256.5L1100.4 258.0L1100.4 256.9L1100.5 259.4L1100.5 255.5L1100.6 255.2L1100.6 255.0L1100.7 254.7L1100.8 254.5L1100.8 254.2L1100.9 259.7L1100.9 258.8L1101.0 253.5L1101.0 253.2L1101.1 257.2L1101.1 252.7L1101.2 252.5L1101.2 252.2L1101.3 252.0L1101.3 259.7L1101.4 251.5L1101.4 251.3L1101.5 251.0L1101.5 257.0L1101.6 250.5L1101.6 250.3L1101.7 250.1L1101.7 249.8L1101.8 249.6L1101.8 249.4L1101.9 249.1L1101.9 260.8L1102.0 248.7L1102.1 248.4L1102.1 261.7L1102.2 261.6L1102.2 252.2L1102.3 247.5L1102.3 247.3L1102.4 247.1L1102.4 246.8L1102.5 246.6L1102.5 246.4L1102.6 246.2L1102.6 245.9L1102.7 245.7L1102.7 245.5L1102.8 245.3L1102.8 276.8L1102.9 244.8L1102.9 244.6L1103.0 244.4L1103.0 244.2L1103.1 244.0L1103.1 243.7L1103.2 243.5L1103.2 260.3L1103.3 269.8L1103.4 250.2L1103.4 242.7L1103.5 242.5L1103.5 242.2L1103.6 242.0L1103.6 241.8L1103.7 250.0L1103.7 241.4L1103.8 270.0L1103.8 241.0L1103.9 240.8L1103.9 248.7L1104.0 240.4L1104.0 262.3L1104.1 239.9L1104.1 239.7L1104.2 239.5L1104.2 239.3L1104.3 263.2L1104.3 238.9L1104.4 238.7L1104.4 238.5L1104.5 248.2L1104.5 238.1L1104.6 237.9L1104.7 237.7L1104.7 258.9L1104.8 237.3L1104.8 237.1L1104.9 253.3L1104.9 268.1L1105.0 236.5L1105.0 236.3L1105.1 261.1L1105.1 235.9L1105.2 235.8L1105.2 235.6L1105.3 259.4L1105.3 243.1L1105.4 255.3L1105.4 261.9L1105.5 257.2L1105.5 234.4L1105.6 244.5L1105.6 241.9L1105.7 233.8L1105.7 233.6L1105.8 233.5L1105.8 233.9L1105.9 244.7L1106.0 232.9L1106.0 232.7L1106.1 232.5L1106.1 243.3L1106.2 239.2L1106.2 245.2L1106.3 252.3L1106.3 259.0L1106.4 263.7L1106.4 265.7L1106.5 231.0L1106.5 257.9L1106.6 233.1L1106.6 230.5L1106.7 230.3L1106.7 257.2L1106.8 229.9L1106.8 229.8L1106.9 243.5L1106.9 229.4L1107.0 256.3L1107.0 252.8L1107.1 228.9L1107.1 228.7L1107.2 257.7L1107.3 246.6L1107.3 228.1L1107.4 228.0L1107.4 227.8L1107.5 227.6L1107.5 240.6L1107.6 227.3L1107.6 227.1L1107.7 315.9L1107.7 315.9L1107.7 310.5L1107.8 308.3L1107.8 306.6L1107.9 305.1L1107.9 303.9L1108.0 302.7L1108.0 301.7L1108.1 300.7L1108.1 299.7L1108.2 298.9L1108.2 298.0L1108.3 297.2L1108.3 296.5L1108.4 295.8L1108.4 295.0L1108.5 294.4L1108.6 293.7L1108.6 293.1L1108.7 292.4L1108.7 291.8L1108.8 291.2L1108.8 290.6L1108.9 290.1L1108.9 289.5L1109.0 289.0L1109.0 288.4L1109.1 287.9L1109.1 287.4L1109.2 286.9L1109.2 286.4L1109.3 285.9L1109.3 285.4L1109.4 285.0L1109.4 284.5L1109.5 284.0L1109.5 283.6L1109.6 283.1L1109.6 282.7L1109.7 282.3L1109.7 281.8L1109.8 281.4L1109.9 281.0L1109.9 280.6L1110.0 280.2L1110.0 279.8L1110.1 279.4L1110.1 279.0L1110.2 278.6L1110.2 278.2L1110.3 277.8L1110.3 277.4L1110.4 277.1L1110.4 276.7L1110.5 276.3L1110.5 276.0L1110.6 275.6L1110.6 275.2L1110.7 274.9L1110.7 274.5L1110.8 274.2L1110.8 273.8L1110.9 273.5L1110.9 273.2L1111.0 272.8L1111.0 272.5L1111.1 272.2L1111.2 271.8L1111.2 271.8L1111.3 271.2L1111.3 270.8L1111.4 270.5L1111.4 270.2L1111.5 269.9L1111.5 269.6L1111.6 269.3L1111.6 272.0L1111.7 268.6L1111.7 268.3L1111.8 268.0L1111.8 267.7L1111.9 268.4L1111.9 267.1L1112.0 271.9L1112.0 266.5L1112.1 266.3L1112.1 266.0L1112.2 268.6L1112.2 269.9L1112.3 272.1L1112.3 275.8L1112.4 264.5L1112.5 269.3L1112.5 264.0L1112.6 263.7L1112.6 263.4L1112.7 276.3L1112.7 277.4L1112.8 262.6L1112.8 268.0L1112.9 262.0L1112.9 261.8L1113.0 261.5L1113.0 280.3L1113.1 261.0L1113.1 260.7L1113.2 260.5L1113.2 260.2L1113.3 267.0L1113.3 259.7L1113.4 274.8L1113.4 259.2L1113.5 279.1L1113.5 258.7L1113.6 258.4L1113.6 258.2L1113.7 257.9L1113.8 257.7L1113.8 257.4L1113.9 257.2L1113.9 256.9L1114.0 256.7L1114.0 266.4L1114.1 274.2L1114.1 265.0L1114.2 255.7L1114.2 259.0L1114.3 255.2L1114.3 255.0L1114.4 254.7L1114.4 254.5L1114.5 254.3L1114.5 280.0L1114.6 253.8L1114.6 253.6L1114.7 253.3L1114.7 253.1L1114.8 252.9L1114.8 274.8L1114.9 252.4L1114.9 252.2L1115.0 271.4L1115.1 266.3L1115.1 251.5L1115.2 251.3L1115.2 251.1L1115.3 269.1L1115.3 250.6L1115.4 250.4L1115.4 262.6L1115.5 249.9L1115.5 249.7L1115.6 249.5L1115.6 251.2L1115.7 265.7L1115.7 263.4L1115.8 256.5L1115.8 254.7L1115.9 248.2L1115.9 266.3L1116.0 247.8L1116.0 315.9L1116.0 315.9L1116.1 310.1L1116.1 307.7L1116.2 305.9L1116.2 304.3L1116.3 302.9L1116.4 301.7L1116.4 300.6L1116.5 299.5L1116.5 298.5L1116.6 297.6L1116.6 296.7L1116.7 295.8L1116.7 295.0L1116.8 294.2L1116.8 293.4L1116.9 292.7L1116.9 292.0L1117.0 291.3L1117.0 290.6L1117.1 290.0L1117.1 289.3L1117.2 288.7L1117.2 288.1L1117.3 287.5L1117.3 286.9L1117.4 286.3L1117.4 285.8L1117.5 285.2L1117.5 284.7L1117.6 284.1L1117.7 283.6L1117.7 283.1L1117.8 282.6L1117.8 282.1L1117.9 281.6L1117.9 281.1L1118.0 280.6L1118.0 280.2L1118.1 279.7L1118.1 279.2L1118.2 278.8L1118.2 278.3L1118.3 277.9L1118.3 277.4L1118.4 277.0L1118.4 276.6L1118.5 276.2L1118.5 275.7L1118.6 275.3L1118.6 274.9L1118.7 274.5L1118.7 274.1L1118.8 273.7L1118.8 273.3L1118.9 272.9L1119.0 272.5L1119.0 272.1L1119.1 271.8L1119.1 271.4L1119.2 271.1L1119.2 271.3L1119.3 270.3L1119.3 270.2L1119.4 269.5L1119.4 269.2L1119.5 268.8L1119.5 268.4L1119.6 268.1L1119.6 269.4L1119.7 267.4L1119.7 267.1L1119.8 272.9L1119.8 266.4L1119.9 266.0L1119.9 265.7L1120.0 265.4L1120.0 265.0L1120.1 264.7L1120.1 264.4L1120.2 264.0L1120.3 270.8L1120.3 273.5L1120.4 277.1L1120.4 262.8L1120.5 278.4L1120.5 262.1L1120.6 261.8L1120.6 261.5L1120.7 263.8L1120.7 260.9L1120.8 260.6L1120.8 260.3L1120.9 260.0L1120.9 270.8L1121.0 259.4L1121.0 259.1L1121.1 258.8L1121.1 258.5L1121.2 258.2L1121.2 257.9L1121.3 257.6L1121.3 257.4L1121.4 257.1L1121.4 256.8L1121.5 256.5L1121.6 256.2L1121.6 278.7L1121.7 255.7L1121.7 255.4L1121.8 255.1L1121.8 257.0L1121.9 254.5L1121.9 254.3L1122.0 254.0L1122.0 253.7L1122.1 253.5L1122.1 269.6L1122.2 252.9L1122.2 252.7L1122.3 252.4L1122.3 252.1L1122.4 262.9L1122.4 251.6L1122.5 251.3L1122.5 271.5L1122.6 250.8L1122.6 271.6L1122.7 250.3L1122.7 250.1L1122.8 249.8L1122.9 266.6L1122.9 263.1L1123.0 249.0L1123.0 248.8L1123.1 274.1L1123.1 248.3L1123.2 248.0L1123.2 247.8L1123.3 247.6L1123.3 247.3L1123.4 247.1L1123.4 246.8L1123.5 315.9L1123.5 315.9L1123.5 309.8L1123.6 307.2L1123.6 305.3L1123.7 303.6L1123.7 302.2L1123.8 300.9L1123.8 299.7L1123.9 298.5L1123.9 297.5L1124.0 296.5L1124.0 295.5L1124.1 294.6L1124.2 293.8L1124.2 292.9L1124.3 292.1L1124.3 291.4L1124.4 290.6L1124.4 289.9L1124.5 289.2L1124.5 288.5L1124.6 287.8L1124.6 287.1L1124.7 286.5L1124.7 285.8L1124.8 285.2L1124.8 284.6L1124.9 284.0L1124.9 283.4L1125.0 282.9L1125.0 282.3L1125.1 281.7L1125.1 281.2L1125.2 280.6L1125.2 280.1L1125.3 279.6L1125.3 279.1L1125.4 278.6L1125.5 278.1L1125.5 277.6L1125.6 277.1L1125.6 276.6L1125.7 276.1L1125.7 275.7L1125.8 275.2L1125.8 274.7L1125.9 274.3L1125.9 273.8L1126.0 273.4L1126.0 272.9L1126.1 272.5L1126.1 272.1L1126.2 271.7L1126.2 271.2L1126.3 270.8L1126.3 270.4L1126.4 270.0L1126.4 269.6L1126.5 269.2L1126.5 268.8L1126.6 268.4L1126.6 268.0L1126.7 267.6L1126.8 267.2L1126.8 266.8L1126.9 266.4L1126.9 266.0L1127.0 265.7L1127.0 265.3L1127.1 264.9L1127.1 264.6L1127.2 264.2L1127.2 263.8L1127.3 263.5L1127.3 263.1L1127.4 262.8L1127.4 262.4L1127.5 262.1L1127.5 261.7L1127.6 261.4L1127.6 261.0L1127.7 260.7L1127.7 260.4L1127.8 260.3L1127.8 260.7L1127.9 259.3L1127.9 259.0L1128.0 260.3L1128.1 258.3L1128.1 260.9L1128.2 257.7L1128.2 257.4L1128.3 257.0L1128.3 256.7L1128.4 256.4L1128.4 256.1L1128.5 261.3L1128.5 259.5L1128.6 255.3L1128.6 254.8L1128.7 254.5L1128.7 254.2L1128.8 253.9L1128.8 261.6L1128.9 253.3L1128.9 263.6L1129.0 260.4L1129.0 252.4L1129.1 252.1L1129.1 251.8L1129.2 251.5L1129.2 251.2L1129.3 251.0L1129.4 250.7L1129.4 260.0L1129.5 261.3L1129.5 254.7L1129.6 249.5L1129.6 249.2L1129.7 251.4L1129.7 248.7L1129.8 248.4L1129.8 248.1L1129.9 247.8L1129.9 255.1L1130.0 247.3L1130.0 247.0L1130.1 246.7L1130.1 246.5L1130.2 246.2L1130.2 245.9L1130.3 249.6L1130.3 245.4L1130.4 245.1L1130.4 244.9L1130.5 244.6L1130.5 244.3L1130.6 252.1L1130.7 243.8L1130.7 243.6L1130.8 243.3L1130.8 243.0L1130.9 242.8L1130.9 242.5L1131.0 242.3L1131.0 257.0L1131.1 276.8L1131.1 266.7L1131.2 255.2L1131.2 253.3L1131.3 240.7L1131.3 240.5L1131.4 276.2L1131.4 240.0L1131.5 239.8L1131.5 239.5L1131.6 269.2L1131.6 239.6L1131.7 265.0L1131.7 238.5L1131.8 247.1L1131.8 238.0L1131.9 237.8L1132.0 247.6L1132.0 237.3L1132.1 237.1L1132.1 245.8L1132.2 236.6L1132.2 236.4L1132.3 236.1L1132.3 235.9L1132.4 235.7L1132.4 235.4L1132.5 235.2L1132.5 235.0L1132.6 247.1L1132.6 234.5L1132.7 234.3L1132.7 234.0L1132.8 233.8L1132.8 233.6L1132.9 233.3L1132.9 233.1L1133.0 232.9L1133.0 244.2L1133.1 232.4L1133.1 232.2L1133.2 232.0L1133.3 231.8L1133.3 231.5L1133.4 231.3L1133.4 231.1L1133.5 230.9L1133.5 242.0L1133.6 230.4L1133.6 230.2L1133.7 315.9L1133.7 315.9L1133.7 310.1L1133.8 307.7L1133.8 305.8L1133.9 304.2L1133.9 302.9L1134.0 301.6L1134.0 300.5L1134.1 299.4L1134.1 298.4L1134.2 297.5L1134.2 296.6L1134.3 295.7L1134.3 294.9L1134.4 294.1L1134.4 293.3L1134.5 292.6L1134.6 291.9L1134.6 291.2L1134.7 290.5L1134.7 289.8L1134.8 289.2L1134.8 288.5L1134.9 287.9L1134.9 287.3L1135.0 286.7L1135.0 286.2L1135.1 285.6L1135.1 285.0L1135.2 284.5L1135.2 284.0L1135.3 283.4L1135.3 282.9L1135.4 282.4L1135.4 281.9L1135.5 281.4L1135.5 280.9L1135.6 280.4L1135.6 279.9L1135.7 279.5L1135.7 279.0L1135.8 278.6L1135.9 278.1L1135.9 277.7L1136.0 277.2L1136.0 276.8L1136.1 276.3L1136.1 275.9L1136.2 275.5L1136.2 275.1L1136.3 274.7L1136.3 274.3L1136.4 273.8L1136.4 273.4L1136.5 273.0L1136.5 272.6L1136.6 272.3L1136.6 271.9L1136.7 271.5L1136.7 271.1L1136.8 270.7L1136.8 270.4L1136.9 270.0L1136.9 269.6L1137.0 269.2L1137.0 268.9L1137.1 268.5L1137.2 268.2L1137.2 267.8L1137.3 267.5L1137.3 267.1L1137.4 266.8L1137.4 266.4L1137.5 266.1L1137.5 265.7L1137.6 265.4L1137.6 265.1L1137.7 264.7L1137.7 264.4L1137.8 264.1L1137.8 263.7L1137.9 263.4L1137.9 263.1L1138.0 262.8L1138.0 262.4L1138.1 262.1L1138.1 261.8L1138.2 261.5L1138.2 261.2L1138.3 260.9L1138.3 260.6L1138.4 260.3L1138.5 260.0L1138.5 259.7L1138.6 259.4L1138.6 259.1L1138.7 258.8L1138.7 258.5L1138.8 258.2L1138.8 257.9L1138.9 257.6L1138.9 257.3L1139.0 257.0L1139.0 256.7L1139.1 256.4L1139.1 256.1L1139.2 258.2L1139.2 256.5L1139.3 255.3L1139.3 255.0L1139.4 258.6L1139.4 257.6L1139.5 254.2L1139.5 253.9L1139.6 253.6L1139.6 253.4L1139.7 253.1L1139.8 252.8L1139.8 255.8L1139.9 252.3L1139.9 252.0L1140.0 253.7L1140.0 251.5L1140.1 251.2L1140.1 251.0L1140.2 256.3L1140.2 256.8L1140.3 258.1L1140.3 249.9L1140.4 251.2L1140.4 249.5L1140.5 249.2L1140.5 248.9L1140.6 252.1L1140.6 248.4L1140.7 255.4L1140.7 247.9L1140.8 248.6L1140.8 247.4L1140.9 247.1L1140.9 280.3L1141.0 246.6L1141.1 258.1L1141.1 257.5L1141.2 245.9L1141.2 245.7L1141.3 245.4L1141.3 245.2L1141.4 245.0L1141.4 244.7L1141.5 244.5L1141.5 244.2L1141.6 244.0L1141.6 243.8L1141.7 262.3L1141.7 243.3L1141.8 262.1L1141.8 242.8L1141.9 242.6L1141.9 259.5L1142.0 242.1L1142.0 259.3L1142.1 256.1L1142.1 241.4L1142.2 266.4L1142.2 241.0L1142.3 240.8L1142.4 240.5L1142.4 266.2L1142.5 240.1L1142.5 239.9L1142.6 239.6L1142.6 239.4L1142.7 246.2L1142.7 257.5L1142.8 238.8L1142.8 238.5L1142.9 238.3L1142.9 238.1L1143.0 256.5L1143.0 237.7L1143.1 237.4L1143.1 237.2L1143.2 258.8L1143.2 255.8L1143.3 236.6L1143.3 236.4L1143.4 236.1L1143.4 235.9L1143.5 235.7L1143.5 235.5L1143.6 259.9L1143.7 235.1L1143.7 257.2L1143.8 239.3L1143.8 242.3L1143.9 234.3L1143.9 234.0L1144.0 233.8L1144.0 233.6L1144.1 234.4L1144.1 233.2L1144.2 233.0L1144.2 232.8L1144.3 232.6L1144.3 232.4L1144.4 232.2L1144.4 248.4L1144.5 231.8L1144.5 231.6L1144.6 231.4L1144.6 265.1L1144.7 231.0L1144.7 230.8L1144.8 245.2L1144.8 236.4L1144.9 230.2L1145.0 230.0L1145.0 241.8L1145.1 229.6L1145.1 229.4L1145.2 229.2L1145.2 229.0L1145.3 244.6L1145.3 228.6L1145.4 228.4L1145.4 255.8L1145.5 228.0L1145.5 227.8L1145.6 227.6L1145.6 227.5L1145.7 227.3L1145.7 227.1L1145.8 226.9L1145.8 226.7L1145.9 226.5L1145.9 226.3L1146.0 226.1L1146.0 315.9L1146.0 315.9L1146.1 310.0L1146.1 307.6L1146.2 305.7L1146.3 304.1L1146.3 302.7L1146.4 301.5L1146.4 300.3L1146.5 299.3L1146.5 298.2L1146.6 297.3L1146.6 296.4L1146.7 295.5L1146.7 294.7L1146.8 293.9L1146.8 293.1L1146.9 292.4L1146.9 291.6L1147.0 290.9L1147.0 290.2L1147.1 289.6L1147.1 288.9L1147.2 288.3L1147.2 287.7L1147.3 287.1L1147.3 286.5L1147.4 285.9L1147.4 285.3L1147.5 284.8L1147.6 284.2L1147.6 283.7L1147.7 283.1L1147.7 282.6L1147.8 282.1L1147.8 281.6L1147.9 281.1L1147.9 280.6L1148.0 280.1L1148.0 279.6L1148.1 279.1L1148.1 278.7L1148.2 278.2L1148.2 277.8L1148.3 277.3L1148.3 276.9L1148.4 276.4L1148.4 276.0L1148.5 275.5L1148.5 275.1L1148.6 274.7L1148.6 274.3L1148.7 273.9L1148.7 273.5L1148.8 273.0L1148.9 272.6L1148.9 272.2L1149.0 271.9L1149.0 271.5L1149.1 271.1L1149.1 270.7L1149.2 270.3L1149.2 269.9L1149.3 269.6L1149.3 269.2L1149.4 268.8L1149.4 268.4L1149.5 268.1L1149.5 267.7L1149.6 267.4L1149.6 267.0L1149.7 266.7L1149.7 266.3L1149.8 266.0L1149.8 265.6L1149.9 265.3L1149.9 264.9L1150.0 264.6L1150.0 264.2L1150.1 263.9L1150.2 263.6L1150.2 263.3L1150.3 262.9L1150.3 262.6L1150.4 262.3L1150.4 262.0L1150.5 261.6L1150.5 261.3L1150.6 261.0L1150.6 260.7L1150.7 260.4L1150.7 260.1L1150.8 259.8L1150.8 259.4L1150.9 259.1L1150.9 258.8L1151.0 258.5L1151.0 258.2L1151.1 257.9L1151.1 257.6L1151.2 257.3L1151.2 257.0L1151.3 256.7L1151.3 256.5L1151.4 256.2L1151.5 255.9L1151.5 255.6L1151.6 255.3L1151.6 255.0L1151.7 254.7L1151.7 254.4L1151.8 254.2L1151.8 253.9L1151.9 253.6L1151.9 253.3L1152.0 253.1L1152.0 252.8L1152.1 252.5L1152.1 252.2L1152.2 252.0L1152.2 251.7L1152.3 251.4L1152.3 251.2L1152.4 251.0L1152.4 250.6L1152.5 250.4L1152.5 251.5L1152.6 251.0L1152.6 249.6L1152.7 249.3L1152.8 249.0L1152.8 248.8L1152.9 250.1L1152.9 248.3L1153.0 248.0L1153.0 247.8L1153.1 249.7L1153.1 250.3L1153.2 247.0L1153.2 252.5L1153.3 253.2L1153.3 246.3L1153.4 246.0L1153.4 245.8L1153.5 245.5L1153.5 245.3L1153.6 245.0L1153.6 251.7L1153.7 244.5L1153.7 244.3L1153.8 244.1L1153.8 243.8L1153.9 243.6L1153.9 243.3L1154.0 254.2L1154.1 242.9L1154.1 242.6L1154.2 254.5L1154.2 254.2L1154.3 248.8L1154.3 241.7L1154.4 241.4L1154.4 256.7L1154.5 241.0L1154.5 250.8L1154.6 249.5L1154.6 240.3L1154.7 240.1L1154.7 239.8L1154.8 250.9L1154.8 239.4L1154.9 239.2L1154.9 238.9L1155.0 238.7L1155.0 238.5L1155.1 238.3L1155.1 250.5L1155.2 237.8L1155.2 237.6L1155.3 237.4L1155.4 250.5L1155.4 236.9L1155.5 236.7L1155.5 250.6L1155.6 236.3L1155.6 236.1L1155.7 235.8L1155.7 235.6L1155.8 235.4L1155.8 265.1L1155.9 235.0L1155.9 234.8L1156.0 263.5L1156.0 234.3L1156.1 234.1L1156.1 233.9L1156.2 233.7L1156.2 233.5L1156.3 245.7L1156.3 240.9L1156.4 232.9L1156.4 232.7L1156.5 232.5L1156.5 232.2L1156.6 237.2L1156.7 231.8L1156.7 235.9L1156.8 231.4L1156.8 231.2L1156.9 231.0L1156.9 245.2L1157.0 241.4L1157.0 230.4L1157.1 230.2L1157.1 253.1L1157.2 247.5L1157.2 229.6L1157.3 251.7L1157.3 229.2L1157.4 265.1L1157.4 228.8L1157.5 228.6L1157.5 228.4L1157.6 228.2L1157.6 228.0L1157.7 227.8L1157.7 227.6L1157.8 257.8L1157.8 227.2L1157.9 227.0L1158.0 226.8L1158.0 264.0L1158.1 226.4L1158.1 237.7L1158.2 259.6L1158.2 225.9L1158.3 225.7L1158.3 225.5L1158.4 254.2L1158.4 225.1L1158.5 224.9L1158.5 255.9L1158.6 224.5L1158.6 226.3L1158.7 250.5L1158.7 224.0L1158.8 223.8L1158.8 223.6L1158.9 223.4L1158.9 261.2L1159.0 237.1L1159.0 222.8L1159.1 222.6L1159.1 222.5L1159.2 251.4L1159.3 241.5L1159.3 221.9L1159.4 221.7L1159.4 221.5L1159.5 221.4L1159.5 248.6L1159.6 237.0L1159.6 247.1L1159.7 238.3L1159.7 220.4L1159.8 220.3L1159.8 220.1L1159.9 219.9L1159.9 219.7L1160.0 219.5L1160.0 219.4L1160.1 250.5L1160.1 219.0L1160.2 230.0L1160.2 225.2L1160.3 239.7L1160.3 218.3L1160.4 218.1L1160.4 217.9L1160.5 217.8L1160.6 217.6L1160.6 235.6L1160.7 217.2L1160.7 217.1L1160.8 254.7L1160.8 216.7L1160.9 216.5L1160.9 216.4L1161.0 241.8L1161.0 216.0L1161.1 315.9L1161.1 315.9L1161.1 311.1L1161.2 309.1L1161.2 307.6L1161.3 306.3L1161.3 305.1L1161.4 304.1L1161.4 303.2L1161.5 302.3L1161.5 301.5L1161.6 300.7L1161.6 299.9L1161.7 299.2L1161.7 298.5L1161.8 297.9L1161.9 297.3L1161.9 296.6L1162.0 296.1L1162.0 295.5L1162.1 294.9L1162.1 294.4L1162.2 293.8L1162.2 293.3L1162.3 292.8L1162.3 292.3L1162.4 291.8L1162.4 291.4L1162.5 290.9L1162.5 290.4L1162.6 290.0L1162.6 289.5L1162.7 289.1L1162.7 288.7L1162.8 288.2L1162.8 287.8L1162.9 287.4L1162.9 287.0L1163.0 286.6L1163.0 286.2L1163.1 285.8L1163.2 285.5L1163.2 285.1L1163.3 284.7L1163.3 284.3L1163.4 284.0L1163.4 283.6L1163.5 283.2L1163.5 282.9L1163.6 282.5L1163.6 282.2L1163.7 315.9L1163.7 315.9L1163.7 310.6L1163.8 308.4L1163.8 306.7L1163.9 305.3L1163.9 304.1L1164.0 303.0L1164.0 301.9L1164.1 301.0L1164.1 300.0L1164.2 299.2L1164.2 298.4L1164.3 297.6L1164.3 296.8L1164.4 296.1L1164.5 295.4L1164.5 294.8L1164.6 294.1L1164.6 293.5L1164.7 292.9L1164.7 292.3L1164.8 291.7L1164.8 291.1L1164.9 290.6L1164.9 290.0L1165.0 289.5L1165.0 289.0L1165.1 288.4L1165.1 287.9L1165.2 287.4L1165.2 287.0L1165.3 286.5L1165.3 286.0L1165.4 285.5L1165.4 285.1L1165.5 284.6L1165.5 284.2L1165.6 283.8L1165.6 283.3L1165.7 282.9L1165.8 282.5L1165.8 282.1L1165.9 281.7L1165.9 281.3L1166.0 280.9L1166.0 280.5L1166.1 280.1L1166.1 279.7L1166.2 279.3L1166.2 278.9L1166.3 278.5L1166.3 278.2L1166.4 277.8L1166.4 277.4L1166.5 277.1L1166.5 276.7L1166.6 276.4L1166.6 276.0L1166.7 275.7L1166.7 275.3L1166.8 275.0L1166.8 274.6L1166.9 274.3L1166.9 274.0L1167.0 273.6L1167.1 273.3L1167.1 273.0L1167.2 272.7L1167.2 272.3L1167.3 272.0L1167.3 271.7L1167.4 271.4L1167.4 271.1L1167.5 270.8L1167.5 270.4L1167.6 270.1L1167.6 269.8L1167.7 269.5L1167.7 269.2L1167.8 268.9L1167.8 268.6L1167.9 268.3L1167.9 268.1L1168.0 267.8L1168.0 267.5L1168.1 267.2L1168.1 266.9L1168.2 266.6L1168.2 266.3L1168.3 266.1L1168.4 265.8L1168.4 265.5L1168.5 265.2L1168.5 264.9L1168.6 264.7L1168.6 264.4L1168.7 264.1L1168.7 264.1L1168.8 263.6L1168.8 263.3L1168.9 263.1L1168.9 262.8L1169.0 263.6L1169.0 262.3L1169.1 264.3L1169.1 265.7L1169.2 261.5L1169.2 261.2L1169.3 261.0L1169.3 263.4L1169.4 260.5L1169.4 260.5L1169.5 262.2L1169.5 259.7L1169.6 259.5L1169.7 264.5L1169.7 265.2L1169.8 258.7L1169.8 258.5L1169.9 258.3L1169.9 258.0L1170.0 257.8L1170.0 262.0L1170.1 262.1L1170.1 257.1L1170.2 256.8L1170.2 256.6L1170.3 256.4L1170.3 256.1L1170.4 255.9L1170.4 267.3L1170.5 255.4L1170.5 266.5L1170.6 258.7L1170.6 254.7L1170.7 284.1L1170.7 254.3L1170.8 273.4L1170.8 253.8L1170.9 253.6L1171.0 268.2L1171.0 253.2L1171.1 265.1L1171.1 257.4L1171.2 252.5L1171.2 255.9L1171.3 252.1L1171.3 251.8L1171.4 251.6L1171.4 257.1L1171.5 251.2L1171.5 251.0L1171.6 250.8L1171.6 250.5L1171.7 250.3L1171.7 250.1L1171.8 268.0L1171.8 249.7L1171.9 249.5L1171.9 274.7L1172.0 249.1L1172.0 248.9L1172.1 264.6L1172.1 248.4L1172.2 260.9L1172.3 248.0L1172.3 247.8L1172.4 262.5L1172.4 247.4L1172.5 264.1L1172.5 247.0L1172.6 246.8L1172.6 246.6L1172.7 246.4L1172.7 259.6L1172.8 246.0L1172.8 264.8L1172.9 245.6L1172.9 245.4L1173.0 245.2L1173.0 245.0L1173.1 244.8L1173.1 244.6L1173.2 264.4L1173.2 273.7L1173.3 258.3L1173.3 243.8L1173.4 243.6L1173.4 243.5L1173.5 265.4L1173.6 243.1L1173.6 242.9L1173.7 278.2L1173.7 242.5L1173.8 242.3L1173.8 242.1L1173.9 241.9L1173.9 241.7L1174.0 241.6L1174.0 241.4L1174.1 241.2L1174.1 241.0L1174.2 240.8L1174.2 240.6L1174.3 240.4L1174.3 240.2L1174.4 240.2L1174.4 239.9L1174.5 239.7L1174.5 239.5L1174.6 239.3L1174.6 239.2L1174.7 239.0L1174.7 247.2L1174.8 238.6L1174.9 238.4L1174.9 267.8L1175.0 238.1L1175.0 269.0L1175.1 256.2L1175.1 237.5L1175.2 264.8L1175.2 237.2L1175.3 237.0L1175.3 236.8L1175.4 236.6L1175.4 236.5L1175.5 315.9L1175.5 315.9L1175.5 310.7L1175.6 308.5L1175.6 306.9L1175.7 305.5L1175.7 304.2L1175.8 303.1L1175.8 302.1L1175.9 301.1L1175.9 300.2L1176.0 299.4L1176.0 298.6L1176.1 297.8L1176.2 297.1L1176.2 296.4L1176.3 295.7L1176.3 295.0L1176.4 294.4L1176.4 293.7L1176.5 293.1L1176.5 292.5L1176.6 292.0L1176.6 291.4L1176.7 290.8L1176.7 290.3L1176.8 289.8L1176.8 289.3L1176.9 288.8L1176.9 288.3L1177.0 287.8L1177.0 287.3L1177.1 286.8L1177.1 286.3L1177.2 285.9L1177.2 285.4L1177.3 285.0L1177.3 284.6L1177.4 284.1L1177.5 283.7L1177.5 283.3L1177.6 282.9L1177.6 282.4L1177.7 282.0L1177.7 281.6L1177.8 281.2L1177.8 280.9L1177.9 280.5L1177.9 280.1L1178.0 279.7L1178.0 279.3L1178.1 279.0L1178.1 278.6L1178.2 278.2L1178.2 277.9L1178.3 277.5L1178.3 277.2L1178.4 276.8L1178.4 276.5L1178.5 276.1L1178.5 275.8L1178.6 275.4L1178.6 275.1L1178.7 274.8L1178.8 274.4L1178.8 274.1L1178.9 273.8L1178.9 273.5L1179.0 273.1L1179.0 272.8L1179.1 272.5L1179.1 272.2L1179.2 271.9L1179.2 271.6L1179.3 271.3L1179.3 271.0L1179.4 270.7L1179.4 270.4L1179.5 270.1L1179.5 269.8L1179.6 269.5L1179.6 269.2L1179.7 268.9L1179.7 268.6L1179.8 268.3L1179.8 268.0L1179.9 267.7L1179.9 267.4L1180.0 267.2L1180.1 266.9L1180.1 266.6L1180.2 266.3L1180.2 266.1L1180.3 265.8L1180.3 265.5L1180.4 265.2L1180.4 265.0L1180.5 264.7L1180.5 264.4L1180.6 264.2L1180.6 263.9L1180.7 263.7L1180.7 263.4L1180.8 263.1L1180.8 262.9L1180.9 262.6L1180.9 262.4L1181.0 262.1L1181.0 261.9L1181.1 261.6L1181.1 261.4L1181.2 261.1L1181.2 260.9L1181.3 260.6L1181.4 260.4L1181.4 260.1L1181.5 260.7L1181.5 259.6L1181.6 259.4L1181.6 259.1L1181.7 258.9L1181.7 258.7L1181.8 258.4L1181.8 258.2L1181.9 258.0L1181.9 257.7L1182.0 257.5L1182.0 257.3L1182.1 257.0L1182.1 263.9L1182.2 256.6L1182.2 256.3L1182.3 256.1L1182.3 255.9L1182.4 255.6L1182.4 255.4L1182.5 282.3L1182.5 263.3L1182.6 257.3L1182.7 254.5L1182.7 254.3L1182.8 254.1L1182.8 253.9L1182.9 253.6L1182.9 253.4L1183.0 253.2L1183.0 253.0L1183.1 252.8L1183.1 252.6L1183.2 252.3L1183.2 252.1L1183.3 251.9L1183.3 251.7L1183.4 251.5L1183.4 251.3L1183.5 257.0L1183.5 250.9L1183.6 250.6L1183.6 250.4L1183.7 250.2L1183.7 250.0L1183.8 249.8L1183.8 249.6L1183.9 249.4L1184.0 264.3L1184.0 249.0L1184.1 248.8L1184.1 248.6L1184.2 248.4L1184.2 248.2L1184.3 248.0L1184.3 267.7L1184.4 247.6L1184.4 247.4L1184.5 247.2L1184.5 247.0L1184.6 251.0L1184.6 267.8L1184.7 246.4L1184.7 246.2L1184.8 246.0L1184.8 274.2L1184.9 245.6L1184.9 245.4L1185.0 245.2L1185.0 272.8L1185.1 244.8L1185.1 244.6L1185.2 244.5L1185.3 272.6L1185.3 244.1L1185.4 243.9L1185.4 250.1L1185.5 243.5L1185.5 271.8L1185.6 243.1L1185.6 242.9L1185.7 242.8L1185.7 242.6L1185.8 242.4L1185.8 242.2L1185.9 246.3L1185.9 241.8L1186.0 241.6L1186.0 241.5L1186.1 267.6L1186.1 241.1L1186.2 265.0L1186.2 257.2L1186.3 263.8L1186.3 240.4L1186.4 249.9L1186.4 269.6L1186.5 261.7L1186.6 254.6L1186.6 239.5L1186.7 239.3L1186.7 239.1L1186.8 238.9L1186.8 269.2L1186.9 238.6L1186.9 240.4L1187.0 238.2L1187.0 238.1L1187.1 237.9L1187.1 237.7L1187.2 244.1L1187.2 273.8L1187.3 237.2L1187.3 237.0L1187.4 252.6L1187.4 236.7L1187.5 236.5L1187.5 236.3L1187.6 255.5L1187.6 236.0L1187.7 235.8L1187.7 235.6L1187.8 235.5L1187.9 235.3L1187.9 235.1L1188.0 235.0L1188.0 234.8L1188.1 234.6L1188.1 259.5L1188.2 234.3L1188.2 234.1L1188.3 234.0L1188.3 233.8L1188.4 233.6L1188.4 233.5L1188.5 233.3L1188.5 247.7L1188.6 233.0L1188.6 232.8L1188.7 232.6L1188.7 232.5L1188.8 232.3L1188.8 232.1L1188.9 264.8L1188.9 231.8L1189.0 231.7L1189.0 315.9L1189.0 315.9L1189.1 310.3L1189.2 308.0L1189.2 306.2L1189.3 304.7L1189.3 303.3L1189.4 302.1L1189.4 301.0L1189.5 300.0L1189.5 299.0L1189.6 298.1L1189.6 297.3L1189.7 296.4L1189.7 295.6L1189.8 294.9L1189.8 294.1L1189.9 293.4L1189.9 292.7L1190.0 292.1L1190.0 291.4L1190.1 290.8L1190.1 290.1L1190.2 289.5L1190.2 288.9L1190.3 288.4L1190.3 287.8L1190.4 287.2L1190.5 286.7L1190.5 286.2L1190.6 285.6L1190.6 285.1L1190.7 284.6L1190.7 284.1L1190.8 283.6L1190.8 283.1L1190.9 282.7L1190.9 282.2L1191.0 281.7L1191.0 281.3L1191.1 280.8L1191.1 280.4L1191.2 279.9L1191.2 279.5L1191.3 279.0L1191.3 278.6L1191.4 278.2L1191.4 277.8L1191.5 277.4L1191.5 277.0L1191.6 276.6L1191.6 276.2L1191.7 275.8L1191.8 275.4L1191.8 275.0L1191.9 274.6L1191.9 274.2L1192.0 273.8L1192.0 273.5L1192.1 273.1L1192.1 272.7L1192.2 272.4L1192.2 272.0L1192.3 271.7L1192.3 271.3L1192.4 270.9L1192.4 270.6L1192.5 270.2L1192.5 269.9L1192.6 269.6L1192.6 269.2L1192.7 268.9L1192.7 268.5L1192.8 268.2L1192.8 267.9L1192.9 267.6L1192.9 267.2L1193.0 266.9L1193.1 266.6L1193.1 266.3L1193.2 266.0L1193.2 265.6L1193.3 265.3L1193.3 265.0L1193.4 264.7L1193.4 264.4L1193.5 264.1L1193.5 264.1L1193.6 264.0L1193.6 263.2L1193.7 262.9L1193.7 263.4L1193.8 262.3L1193.8 262.0L1193.9 261.7L1193.9 280.5L1194.0 261.1L1194.0 260.8L1194.1 260.6L1194.1 260.3L1194.2 260.0L1194.2 260.4L1194.3 259.4L1194.4 259.1L1194.4 258.9L1194.5 258.6L1194.5 258.3L1194.6 258.0L1194.6 259.7L1194.7 257.5L1194.7 257.2L1194.8 257.0L1194.8 256.7L1194.9 256.4L1194.9 266.0L1195.0 265.6L1195.0 257.3L1195.1 255.4L1195.1 264.8L1195.2 254.9L1195.2 267.6L1195.3 254.3L1195.3 254.1L1195.4 253.8L1195.4 253.6L1195.5 256.6L1195.5 266.5L1195.6 252.8L1195.7 264.6L1195.7 252.3L1195.8 270.8L1195.8 251.8L1195.9 251.6L1195.9 251.3L1196.0 251.1L1196.0 250.8L1196.1 250.6L1196.1 250.4L1196.2 250.1L1196.2 249.9L1196.3 249.6L1196.3 270.1L1196.4 255.2L1196.4 255.8L1196.5 262.4L1196.5 248.5L1196.6 248.2L1196.6 272.9L1196.7 265.9L1196.7 247.5L1196.8 247.3L1196.8 275.9L1196.9 246.8L1197.0 261.5L1197.0 246.4L1197.1 246.2L1197.1 245.9L1197.2 245.7L1197.2 245.5L1197.3 245.3L1197.3 245.0L1197.4 244.8L1197.4 244.6L1197.5 244.4L1197.5 256.1L1197.6 243.9L1197.6 243.7L1197.7 268.2L1197.7 273.6L1197.8 243.1L1197.8 242.8L1197.9 242.6L1197.9 242.4L1198.0 242.2L1198.0 267.2L1198.1 241.8L1198.1 241.6L1198.2 255.9L1198.3 241.1L1198.3 264.0L1198.4 240.7L1198.4 240.5L1198.5 240.3L1198.5 240.1L1198.6 239.9L1198.6 258.1L1198.7 239.5L1198.7 249.7L1198.8 239.1L1198.8 254.0L1198.9 238.6L1198.9 238.4L1199.0 238.2L1199.0 238.0L1199.1 237.8L1199.1 244.1L1199.2 237.4L1199.2 237.2L1199.3 257.5L1199.3 263.6L1199.4 236.6L1199.4 264.5L1199.5 236.2" stroke="#e41a1c" stroke-width="1.25" fill="none" stroke-linejoin="round"/>
<path d="M679.5 75V316.5H1200M679.5 316.5v5M731.5 316.5v5M783.5 316.5v5M835.5 316.5v5M887.5 316.5v5M939.5 316.5v5M991.5 316.5v5M1043.5 316.5v5M1095.5 316.5v5M1147.5 316.5v5M1199.5 316.5v5M679.5 316.5h-5M679.5 268.5h-5M679.5 219.5h-5M679.5 171.5h-5M679.5 123.5h-5M679.5 75.5h-5" stroke="#000" stroke-width="1" fill="none"/>
<circle cx="1199.5" cy="236" r="5" fill="#e41a1c" stroke="#111" stroke-width="1.2"/>
<rect x="1047.5" y="75.5" width="152" height="23" fill="#fff" stroke="#111" stroke-width="1"/>
<line x1="1052" y1="87" x2="1074" y2="87" stroke="#e41a1c" stroke-width="1.6"/>
<path d="M679.5 381V613M731.3 381V613M783.1 381V613M834.9 381V613M886.7 381V613M938.5 381V613M990.3 381V613M1042.1 381V613M1093.9 381V613M1145.7 381V613M1197.5 381V613M662 555.5H1197.5M662 497.5H1197.5M662 439.5H1197.5M662 381.5H1197.5" stroke="#f2f2f2" stroke-width="1" fill="none"/>
<path d="M679.5 439.4L695.7 439.4L695.7 468.3L696.1 468.3L696.1 439.4L696.7 439.4L696.7 468.3L697.0 468.3L697.0 439.4L697.4 439.4L697.4 468.3L697.8 468.3L697.8 439.4L698.3 439.4L698.3 468.3L698.8 468.3L698.8 439.4L702.9 439.4L702.9 468.3L703.1 468.3L703.1 439.4L703.6 439.4L703.6 468.3L703.9 468.3L703.9 439.4L704.5 439.4L704.5 468.3L704.8 468.3L704.8 439.4L705.1 439.4L705.1 468.3L705.6 468.3L705.6 439.4L706.1 439.4L706.1 468.3L706.5 468.3L706.5 439.4L707.1 439.4L707.1 468.3L707.4 468.3L707.4 439.4L707.9 439.4L707.9 468.3L708.4 468.3L708.4 439.4L709.7 439.4L709.7 468.3L710.0 468.3L710.0 439.4L710.4 439.4L710.4 468.3L710.7 468.3L710.8 468.3L710.8 497.2L711.1 497.2L711.1 468.3L711.6 468.3L711.6 439.4L711.8 439.4L711.8 468.3L712.2 468.3L712.2 439.4L712.7 439.4L712.7 468.3L712.9 468.3L712.9 439.4L713.1 439.4L713.1 468.3L713.6 468.3L713.6 439.4L714.0 439.4L714.0 468.3L714.2 468.3L714.2 439.4L714.5 439.4L714.5 468.3L715.0 468.3L715.0 439.4L715.1 439.4L715.1 468.3L715.7 468.3L715.7 439.4L716.1 439.4L716.1 468.3L716.4 468.3L716.4 439.4L716.7 439.4L716.7 468.3L717.2 468.3L717.2 439.4L717.6 439.4L717.6 468.3L717.9 468.3L717.9 439.4L718.4 439.4L718.4 468.3L718.9 468.3L718.9 439.4L721.1 439.4L721.1 468.3L721.7 468.3L721.7 439.4L722.3 439.4L722.3 468.3L722.6 468.3L722.6 439.4L722.9 439.4L722.9 468.3L723.2 468.3L723.2 439.4L723.4 439.4L723.4 468.3L723.6 468.3L723.6 439.4L723.9 439.4L723.9 468.3L724.3 468.3L724.3 439.4L724.6 439.4L724.6 468.3L724.9 468.3L724.9 439.4L725.6 439.4L725.6 468.3L725.9 468.3L725.9 439.4L727.7 439.4L727.7 468.3L728.0 468.3L728.0 439.4L728.4 439.4L728.4 468.3L728.9 468.3L728.9 439.4L729.2 439.4L729.2 468.3L729.6 468.3L729.6 439.4L729.9 439.4L729.9 468.3L730.3 468.3L730.3 439.4L730.7 439.4L730.7 468.3L731.0 468.3L731.0 439.4L732.5 439.4L732.5 468.3L733.0 468.3L733.0 439.4L733.1 439.4L733.1 468.3L733.6 468.3L733.6 439.4L734.0 439.4L734.0 468.3L734.4 468.3L734.4 439.4L734.7 439.4L734.7 468.3L735.1 468.3L735.1 439.4L735.5 439.4L735.5 468.3L736.0 468.3L736.0 439.4L736.6 439.4L736.6 468.3L737.0 468.3L737.0 439.4L738.7 439.4L738.7 468.3L739.0 468.3L739.0 439.4L739.4 439.4L739.4 468.3L739.9 468.3L739.9 439.4L740.3 439.4L740.3 468.3L740.6 468.3L740.6 439.4L740.8 439.4L740.8 468.3L741.0 468.3L741.0 439.4L741.2 439.4L741.2 468.3L741.6 468.3L741.6 439.4L742.2 439.4L742.2 468.3L762.2 468.3L762.2 526.1L762.6 526.1L762.6 468.3L779.8 468.3L779.8 497.2L780.2 497.2L780.2 468.3L798.6 468.3L798.6 526.1L799.0 526.1L799.0 468.3L821.4 468.3L821.4 497.2L821.8 497.2L821.8 468.3L841.9 468.3L841.9 526.1L842.3 526.1L842.3 468.3L880.0 468.3L880.0 497.2L880.4 497.2L880.4 468.3L904.6 468.3L904.6 497.2L905.0 497.2L905.0 468.3L907.5 468.3L907.5 526.1L907.9 526.1L907.9 468.3L928.9 468.3L928.9 497.2L929.3 497.2L929.3 468.3L931.8 468.3L931.8 497.2L940.1 497.2L940.1 526.1L940.5 526.1L940.5 497.2L956.6 497.2L956.6 526.1L957.0 526.1L957.0 497.2L982.8 497.2L982.8 526.1L983.3 526.1L983.3 497.2L1020.9 497.2L1020.9 526.1L1021.3 526.1L1021.3 497.2L1027.7 497.2L1027.7 526.1L1027.9 526.1L1027.9 497.2L1028.4 497.2L1028.4 526.1L1028.9 526.1L1028.9 497.2L1029.2 497.2L1029.2 526.1L1029.5 526.1L1029.5 497.2L1029.8 497.2L1029.8 526.1L1030.0 526.1L1030.0 497.2L1030.4 497.2L1030.4 526.1L1030.8 526.1L1030.8 497.2L1033.0 497.2L1033.0 526.1L1033.2 526.1L1033.2 497.2L1033.3 497.2L1033.3 526.1L1033.8 526.1L1033.8 497.2L1034.1 497.2L1034.1 526.1L1034.6 526.1L1034.6 497.2L1034.8 497.2L1034.8 526.1L1035.2 526.1L1035.2 497.2L1035.6 497.2L1035.6 526.1L1036.0 526.1L1036.0 497.2L1036.2 497.2L1036.2 526.1L1036.7 526.1L1036.7 497.2L1036.9 497.2L1036.9 526.1L1037.3 526.1L1037.3 497.2L1037.5 497.2L1037.5 526.1L1037.7 526.1L1037.7 497.2L1038.0 497.2L1038.0 526.1L1038.2 526.1L1038.2 497.2L1038.4 497.2L1038.4 526.1L1038.6 526.1L1038.6 497.2L1038.9 497.2L1038.9 526.1L1039.4 526.1L1039.4 497.2L1039.5 497.2L1039.5 526.1L1039.8 526.1L1039.8 497.2L1040.1 497.2L1040.1 526.1L1040.4 526.1L1040.4 497.2L1040.8 497.2L1040.8 526.1L1041.1 526.1L1041.1 497.2L1041.3 497.2L1041.3 526.1L1041.7 526.1L1041.7 497.2L1043.3 497.2L1043.3 526.1L1043.6 526.1L1043.6 497.2L1044.0 497.2L1044.0 526.1L1044.3 526.1L1044.3 497.2L1044.7 497.2L1044.7 526.1L1045.1 526.1L1045.1 497.2L1045.6 497.2L1045.6 526.1L1046.1 526.1L1046.1 497.2L1046.7 497.2L1046.7 526.1L1047.1 526.1L1047.1 497.2L1047.7 497.2L1047.7 526.1L1048.2 526.1L1048.2 497.2L1048.7 497.2L1048.7 526.1L1048.9 526.1L1048.9 497.2L1049.6 497.2L1049.6 526.1L1050.1 526.1L1050.1 497.2L1050.6 497.2L1050.6 526.1L1051.0 526.1L1051.0 497.2L1051.4 497.2L1051.4 526.1L1051.9 526.1L1051.9 497.2L1053.5 497.2L1053.5 526.1L1053.9 526.1L1053.9 497.2L1054.2 497.2L1054.2 526.1L1054.5 526.1L1054.5 497.2L1054.9 497.2L1054.9 526.1L1055.2 526.1L1055.2 497.2L1055.4 497.2L1055.4 526.1L1055.9 526.1L1055.9 497.2L1056.2 497.2L1056.2 526.1L1056.6 526.1L1056.6 497.2L1056.9 497.2L1056.9 526.1L1057.1 526.1L1057.1 497.2L1057.4 497.2L1057.4 526.1L1057.8 526.1L1057.8 497.2L1058.2 497.2L1058.2 526.1L1058.6 526.1L1058.6 497.2L1058.8 497.2L1058.8 526.1L1059.0 526.1L1059.0 497.2L1060.4 497.2L1060.4 526.1L1060.7 526.1L1060.7 497.2L1061.2 497.2L1061.2 526.1L1061.6 526.1L1061.6 497.2L1062.0 497.2L1062.0 526.1L1062.5 526.1L1062.5 497.2L1062.8 497.2L1062.8 526.1L1063.3 526.1L1063.3 497.2L1063.8 497.2L1063.8 526.1L1064.0 526.1L1064.0 497.2L1064.6 497.2L1064.6 526.1L1064.8 526.1L1064.8 497.2L1065.0 497.2L1065.0 526.1L1065.3 526.1L1065.3 497.2L1065.7 497.2L1065.7 526.1L1066.1 526.1L1066.1 497.2L1066.7 497.2L1066.7 526.1L1067.0 526.1L1067.0 497.2L1067.0 497.2L1067.0 526.1L1104.7 526.1L1104.7 555.1L1105.1 555.1L1105.1 526.1L1140.2 526.1L1140.2 555.1L1140.6 555.1L1140.6 526.1L1162.3 526.1L1162.3 555.1" stroke="#e41a1c" stroke-width="1.1" fill="none"/>
<path d="M679.5 613.5L746.6 613.5L746.6 584.0L747.0 584.0L747.0 613.5L751.8 613.5L751.8 584.0L752.2 584.0L752.2 613.5L757.3 613.5L757.3 584.0L757.7 584.0L757.7 613.5L792.3 613.5L792.3 584.0L792.6 584.0L792.6 613.5L793.6 613.5L793.6 584.0L793.9 584.0L793.9 613.5L841.6 613.5L841.6 584.0L842.0 584.0L842.0 613.5L843.0 613.5L843.0 584.0L843.4 584.0L843.4 613.5L843.8 613.5L843.8 584.0L844.3 584.0L844.3 613.5L928.9 613.5L928.9 555.1L940.1 555.1L940.1 584.0L940.5 584.0L940.5 555.1L972.7 555.1L972.7 526.1L973.2 526.1L973.2 555.1L973.9 555.1L973.9 526.1L974.1 526.1L974.1 555.1L974.9 555.1L974.9 526.1L975.2 526.1L975.2 555.1L976.5 555.1L976.5 526.1L984.8 526.1L984.8 497.2L985.2 497.2L985.2 526.1L986.6 526.1L986.6 497.2L986.8 497.2L986.8 526.1L988.2 526.1L988.2 497.2L988.5 497.2L988.5 526.1L989.0 526.1L989.0 497.2L989.5 497.2L989.5 526.1L990.6 526.1L990.6 497.2L1001.6 497.2L1001.6 468.3L1002.1 468.3L1002.1 497.2L1003.1 497.2L1003.1 468.3L1003.6 468.3L1003.6 497.2L1005.1 497.2L1005.1 526.1L1005.5 526.1L1005.5 497.2L1006.1 497.2L1006.1 468.3L1020.9 468.3L1020.9 497.2L1021.3 497.2L1021.3 468.3L1072.6 468.3L1072.6 439.4L1073.0 439.4L1073.0 468.3L1074.4 468.3L1074.4 439.4L1074.8 439.4L1074.8 468.3L1076.8 468.3L1076.8 439.4L1077.2 439.4L1077.2 468.3L1087.3 468.3L1087.3 439.4L1103.0 439.4L1103.0 410.5L1103.3 410.5L1103.3 439.4L1104.4 439.4L1104.4 410.5L1104.7 410.5L1104.7 439.4L1105.3 439.4L1105.3 410.5L1105.6 410.5L1105.6 439.4L1115.0 439.4L1115.0 410.5L1143.5 410.5L1143.5 381.5L1143.9 381.5L1143.9 410.5L1145.3 410.5L1145.3 439.4L1145.8 439.4L1145.8 410.5L1150.9 410.5L1150.9 381.5L1151.3 381.5L1151.3 410.5L1152.3 410.5L1152.3 381.5L1152.7 381.5L1152.7 410.5L1156.2 410.5L1156.2 381.5L1156.4 381.5L1156.4 410.5L1157.5 410.5L1157.5 381.5L1157.7 381.5L1157.7 410.5L1158.2 410.5L1158.2 381.5L1158.8 381.5L1158.8 410.5L1159.4 410.5L1159.4 381.5L1197.5 381.5" stroke="#377eb8" stroke-width="1.1" fill="none"/>
<path d="M679.5 612.9L764.5 612.9L764.5 584.0L764.9 584.0L764.9 612.9L771.7 612.9L771.7 584.0L772.1 584.0L772.1 612.9L773.4 612.9L773.4 584.0L773.8 584.0L773.8 612.9L775.5 612.9L775.5 584.0L775.9 584.0L775.9 612.9L777.5 612.9L777.5 584.0L777.9 584.0L777.9 612.9L778.6 612.9L778.6 584.0L779.1 584.0L779.1 612.9L782.1 612.9L782.1 584.0L803.2 584.0L803.2 555.1L803.6 555.1L803.6 584.0L812.7 584.0L812.7 555.1L813.1 555.1L813.1 584.0L815.3 584.0L815.3 555.1L815.7 555.1L815.7 584.0L828.3 584.0L828.3 555.1L828.7 555.1L828.7 584.0L830.0 584.0L830.0 555.1L830.4 555.1L830.4 584.0L928.9 584.0L928.9 612.9L929.3 612.9L929.3 584.0L1064.1 584.0L1064.1 612.9L1064.5 612.9L1064.5 584.0L1084.7 584.0L1084.7 555.1L1085.1 555.1L1085.1 584.0L1086.2 584.0L1086.2 555.1L1086.6 555.1L1086.6 584.0L1093.1 584.0L1093.1 555.1L1093.5 555.1L1093.5 584.0L1094.7 584.0L1094.7 555.1L1140.2 555.1L1140.2 584.0L1140.6 584.0L1140.6 555.1L1197.5 555.1" stroke="#4daf4a" stroke-width="1.1" fill="none"/>
<path d="M661.5 376V613.5H1198M679.5 613.5v5M731.3 613.5v5M783.1 613.5v5M834.9 613.5v5M886.7 613.5v5M938.5 613.5v5M990.3 613.5v5M1042.1 613.5v5M1093.9 613.5v5M1145.7 613.5v5M1197.5 613.5v5M661.5 613.5h-5M661.5 555.5h-5M661.5 497.5h-5M661.5 439.5h-5M661.5 381.5h-5" stroke="#000" stroke-width="1" fill="none"/>
<circle cx="1197.5" cy="381.5" r="5" fill="#377eb8" stroke="#111" stroke-width="1.2"/>
<rect x="873.5" y="387.5" width="82" height="59" fill="#fff" stroke="#222" stroke-width="1"/>
<line x1="878" y1="399" x2="900" y2="399" stroke="#e41a1c" stroke-width="1.4"/>
<line x1="878" y1="417" x2="900" y2="417" stroke="#377eb8" stroke-width="1.4"/>
<line x1="878" y1="435" x2="900" y2="435" stroke="#4daf4a" stroke-width="1.4"/>
</svg>
<span class="t " style="left:664.50px;top:307.67px;font-size:12.5px;letter-spacing:1.048px;">0</span>
<span class="t " style="left:644.50px;top:260.17px;font-size:12.5px;letter-spacing:0.918px;">0.02</span>
<span class="t " style="left:644.50px;top:211.67px;font-size:12.5px;letter-spacing:0.918px;">0.04</span>
<span class="t " style="left:644.50px;top:163.67px;font-size:12.5px;letter-spacing:0.918px;">0.06</span>
<span class="t " style="left:644.50px;top:115.67px;font-size:12.5px;letter-spacing:0.918px;">0.08</span>
<span class="t " style="left:652.50px;top:67.67px;font-size:12.5px;letter-spacing:0.874px;">0.1</span>
<span class="t " style="left:675.50px;top:321.67px;font-size:12.5px;letter-spacing:1.048px;">0</span>
<span class="t " style="left:715.50px;top:321.67px;font-size:12.5px;letter-spacing:1.048px;">1000</span>
<span class="t " style="left:767.50px;top:321.67px;font-size:12.5px;letter-spacing:1.048px;">2000</span>
<span class="t " style="left:819.50px;top:321.67px;font-size:12.5px;letter-spacing:1.048px;">3000</span>
<span class="t " style="left:871.50px;top:321.67px;font-size:12.5px;letter-spacing:1.048px;">4000</span>
<span class="t " style="left:923.50px;top:321.67px;font-size:12.5px;letter-spacing:1.048px;">5000</span>
<span class="t " style="left:975.50px;top:321.67px;font-size:12.5px;letter-spacing:1.048px;">6000</span>
<span class="t " style="left:1027.50px;top:321.67px;font-size:12.5px;letter-spacing:1.048px;">7000</span>
<span class="t " style="left:1079.50px;top:321.67px;font-size:12.5px;letter-spacing:1.048px;">8000</span>
<span class="t " style="left:1131.50px;top:321.67px;font-size:12.5px;letter-spacing:1.048px;">9000</span>
<span class="t " style="left:1179.50px;top:321.67px;font-size:12.5px;letter-spacing:1.048px;">10000</span>
<span class="t " style="left:891.05px;top:336.67px;font-size:12.5px;letter-spacing:0.800px;">(Frame number)</span>
<span class="t " style="left:1077.00px;top:80.17px;font-size:12.5px;letter-spacing:0.179px;">MD-MaxBiasEnergy</span>
<span class="t" style="left:581.50px;top:188.50px;font-size:12.5px;letter-spacing:0.744px;transform:rotate(-90deg);transform-origin:50% 50%;">Energy (Hartree)</span>
<span class="t " style="left:647.00px;top:605.47px;font-size:12.5px;letter-spacing:1.048px;">0</span>
<span class="t " style="left:647.00px;top:547.47px;font-size:12.5px;letter-spacing:1.048px;">2</span>
<span class="t " style="left:647.00px;top:489.47px;font-size:12.5px;letter-spacing:1.048px;">4</span>
<span class="t " style="left:647.00px;top:431.47px;font-size:12.5px;letter-spacing:1.048px;">6</span>
<span class="t " style="left:647.00px;top:373.47px;font-size:12.5px;letter-spacing:1.048px;">8</span>
<span class="t " style="left:675.30px;top:618.67px;font-size:12.5px;letter-spacing:1.048px;">0</span>
<span class="t " style="left:715.10px;top:618.67px;font-size:12.5px;letter-spacing:1.048px;">1000</span>
<span class="t " style="left:766.90px;top:618.67px;font-size:12.5px;letter-spacing:1.048px;">2000</span>
<span class="t " style="left:818.70px;top:618.67px;font-size:12.5px;letter-spacing:1.048px;">3000</span>
<span class="t " style="left:870.50px;top:618.67px;font-size:12.5px;letter-spacing:1.048px;">4000</span>
<span class="t " style="left:922.30px;top:618.67px;font-size:12.5px;letter-spacing:1.048px;">5000</span>
<span class="t " style="left:974.10px;top:618.67px;font-size:12.5px;letter-spacing:1.048px;">6000</span>
<span class="t " style="left:1025.90px;top:618.67px;font-size:12.5px;letter-spacing:1.048px;">7000</span>
<span class="t " style="left:1077.70px;top:618.67px;font-size:12.5px;letter-spacing:1.048px;">8000</span>
<span class="t " style="left:1129.50px;top:618.67px;font-size:12.5px;letter-spacing:1.048px;">9000</span>
<span class="t " style="left:1177.30px;top:618.67px;font-size:12.5px;letter-spacing:1.048px;">10000</span>
<span class="t " style="left:881.25px;top:633.67px;font-size:12.5px;letter-spacing:0.800px;">(Frame number)</span>
<span class="t" style="left:588.70px;top:487.50px;font-size:12.5px;letter-spacing:0.780px;transform:rotate(-90deg);transform-origin:50% 50%;">Molecule count</span>
<span class="t " style="left:903.00px;top:392.17px;font-size:12.5px;letter-spacing:0.523px;">C12H26</span>
<span class="t " style="left:903.00px;top:410.17px;font-size:12.5px;letter-spacing:0.260px;">C2H4</span>
<span class="t " style="left:903.00px;top:428.17px;font-size:12.5px;letter-spacing:0.260px;">C3H6</span>
<div style="position:absolute;left:21px;top:20px;width:1199px;height:635px;overflow:hidden"><div style="position:absolute;left:-21px;top:-20px;width:1240px;height:675px">
<div style="position:absolute;left:21px;top:607px;width:600px;height:48px;background:linear-gradient(#84797a 0%,#b4aeae 35%,#d4d2d2 70%,#dedede 100%);"></div>
<div style="position:absolute;left:440px;top:625px;width:163px;height:11px;box-sizing:border-box;background:#dcdcdc;border:1px solid;border-color:#7d7d7d #fff #9a9a9a #7d7d7d;"></div>
<div style="position:absolute;left:572px;top:626px;width:15px;height:10px;box-sizing:border-box;background:#d6d2d0;border:solid;border-width:2px 1px 2px 2px;border-color:#fff #7d7d7d #7d7d7d #fff;"></div>
<div style="position:absolute;left:587px;top:626px;width:15.5px;height:10px;box-sizing:border-box;background:#d6d2d0;border:solid;border-width:2px 2px 2px 1px;border-color:#fff #7d7d7d #7d7d7d #fff;"></div>
<div style="position:absolute;left:28px;top:295px;width:467px;height:357px;box-sizing:border-box;border:1px solid #f4f6f8;border-bottom-color:#d6d2d0;border-radius:4px;background:#d6d2d0;box-shadow:0 0 14px 1px rgb(82,196,255),0 0 4px 1px rgba(82,180,255,.3);"></div>
<div style="position:absolute;left:32px;top:327px;width:459px;height:321px;background:#e6e6e6;"></div>
<svg class="abs" style="left:34px;top:297px" width="30" height="28" viewBox="34 297 30 28">
<circle cx="45" cy="308" r="8.2" fill="#d9d6d4" stroke="#cdc9c6" stroke-width="1.3"/>
<path d="M43 300.2h4M43 315.8h4" stroke="#eeecea" stroke-width="1.6" fill="none"/>
<line x1="52.8" y1="315.4" x2="59.6" y2="322" stroke="#686664" stroke-width="2.8" stroke-linecap="round"/>
<circle cx="40.8" cy="306.7" r="2.2" fill="#ff9418"/><circle cx="46.4" cy="306.1" r="3.8" fill="#ff8a10"/><circle cx="47.8" cy="310.6" r="2.4" fill="#ff8c14"/><circle cx="45.6" cy="305" r="1.6" fill="#ffa030"/></svg>
<span class="t " style="left:231.00px;top:304.86px;font-size:13.4px;letter-spacing:0.198px;color:#333;text-shadow:0 1px 0 rgba(255,255,255,.7);">Molecules</span>
<div class="tb" style="position:absolute;left:409.8px;top:301.9px;width:17.6px;height:17.6px;"></div>
<svg class="abs" style="left:410.1px;top:302.2px" width="17" height="17" viewBox="-8.5 -8.5 17 17"><path d="M-4 -1.6 L0 2.4 L4 -1.6" fill="none" stroke="#1e1e1e" stroke-width="1.5"/></svg>
<div class="tb" style="position:absolute;left:438.0px;top:301.9px;width:17.6px;height:17.6px;"></div>
<svg class="abs" style="left:438.3px;top:302.2px" width="17" height="17" viewBox="-8.5 -8.5 17 17"><path d="M-4 1.6 L0 -2.4 L4 1.6" fill="none" stroke="#1e1e1e" stroke-width="1.5"/></svg>
<div class="tb" style="position:absolute;left:466.09999999999997px;top:301.9px;width:17.6px;height:17.6px;"></div>
<svg class="abs" style="left:466.4px;top:302.2px" width="17" height="17" viewBox="-8.5 -8.5 17 17"><path d="M-3.9 -3.9 L3.9 3.9 M3.9 -3.9 L-3.9 3.9" fill="none" stroke="#1e1e1e" stroke-width="1.5"/></svg>
<div class="btn" style="position:absolute;left:37px;top:332px;width:171px;height:26px;"></div>
<span class="t " style="left:96.50px;top:337.67px;font-size:12.5px;letter-spacing:0.247px;">Molecule</span>
<div class="btn" style="position:absolute;left:218px;top:332px;width:51px;height:26px;"></div>
<span class="t " style="left:224.50px;top:337.67px;font-size:12.5px;letter-spacing:0.792px;">Max #</span>
<div class="btn" style="position:absolute;left:288px;top:332px;width:51px;height:26px;background:#ece9e0;border-width:2px;border-color:#fff #7e7a72 #7e7a72 #fff;"></div>
<span class="t " style="left:295.00px;top:338.67px;font-size:12.5px;letter-spacing:0.852px;">Ave #</span>
<span class="t " style="left:367.50px;top:337.67px;font-size:12.5px;letter-spacing:0.452px;">Graph</span>
<div class="btn" style="position:absolute;left:416px;top:332px;width:51px;height:26px;"></div>
<span class="t " style="left:424.00px;top:337.67px;font-size:12.5px;letter-spacing:0.433px;">Show</span>
<div class="btn" style="position:absolute;left:125px;top:368px;width:83px;height:26px;"></div>
<span class="t " style="left:149.50px;top:373.67px;font-size:12.5px;letter-spacing:0.393px;">Filter:</span>
<div class="ent" style="position:absolute;left:218px;top:371px;width:60px;height:19px;"></div>
<div class="ent" style="position:absolute;left:288px;top:371px;width:60px;height:19px;"></div>
<span class="t " style="left:290.00px;top:373.67px;font-size:12.5px;letter-spacing:0.918px;">0.01</span>
<span class="t " style="left:38.00px;top:401.67px;font-size:12.5px;letter-spacing:0.523px;">C12H26</span>
<span class="t " style="left:219.00px;top:401.67px;font-size:12.5px;letter-spacing:1.048px;">6</span>
<span class="t " style="left:289.00px;top:401.67px;font-size:12.5px;letter-spacing:0.803px;">43.7762 %</span>
<div class="cb" style="position:absolute;left:374px;top:403px;width:11px;height:11px;"><svg width="9" height="9" viewBox="0 0 9 9" style="position:absolute;left:0;top:0"><path d="M1.3 4.2 L3.6 6.9 L7.9 1.6" fill="none" stroke="#111" stroke-width="1.9"/></svg></div>
<div class="cb" style="position:absolute;left:423px;top:403px;width:11px;height:11px;"><svg width="9" height="9" viewBox="0 0 9 9" style="position:absolute;left:0;top:0"><path d="M1.3 4.2 L3.6 6.9 L7.9 1.6" fill="none" stroke="#111" stroke-width="1.9"/></svg></div>
<span class="t " style="left:38.00px;top:420.67px;font-size:12.5px;letter-spacing:0.260px;">C2H4</span>
<span class="t " style="left:219.00px;top:420.67px;font-size:12.5px;letter-spacing:1.048px;">8</span>
<span class="t " style="left:289.00px;top:420.67px;font-size:12.5px;letter-spacing:0.803px;">17.8124 %</span>
<div class="cb" style="position:absolute;left:374px;top:422px;width:11px;height:11px;"><svg width="9" height="9" viewBox="0 0 9 9" style="position:absolute;left:0;top:0"><path d="M1.3 4.2 L3.6 6.9 L7.9 1.6" fill="none" stroke="#111" stroke-width="1.9"/></svg></div>
<div class="cb" style="position:absolute;left:423px;top:422px;width:11px;height:11px;"><svg width="9" height="9" viewBox="0 0 9 9" style="position:absolute;left:0;top:0"><path d="M1.3 4.2 L3.6 6.9 L7.9 1.6" fill="none" stroke="#111" stroke-width="1.9"/></svg></div>
<span class="t " style="left:38.00px;top:439.67px;font-size:12.5px;letter-spacing:-0.002px;">CH3</span>
<span class="t " style="left:219.00px;top:439.67px;font-size:12.5px;letter-spacing:1.048px;">3</span>
<span class="t " style="left:289.00px;top:439.67px;font-size:12.5px;letter-spacing:0.772px;">8.6058 %</span>
<div class="cb" style="position:absolute;left:374px;top:441px;width:11px;height:11px;"></div>
<div class="cb" style="position:absolute;left:423px;top:441px;width:11px;height:11px;"><svg width="9" height="9" viewBox="0 0 9 9" style="position:absolute;left:0;top:0"><path d="M1.3 4.2 L3.6 6.9 L7.9 1.6" fill="none" stroke="#111" stroke-width="1.9"/></svg></div>
<span class="t " style="left:38.00px;top:458.67px;font-size:12.5px;letter-spacing:0.260px;">C3H6</span>
<span class="t " style="left:219.00px;top:458.67px;font-size:12.5px;letter-spacing:1.048px;">2</span>
<span class="t " style="left:289.00px;top:458.67px;font-size:12.5px;letter-spacing:0.772px;">7.4165 %</span>
<div class="cb" style="position:absolute;left:374px;top:460px;width:11px;height:11px;"><svg width="9" height="9" viewBox="0 0 9 9" style="position:absolute;left:0;top:0"><path d="M1.3 4.2 L3.6 6.9 L7.9 1.6" fill="none" stroke="#111" stroke-width="1.9"/></svg></div>
<div class="cb" style="position:absolute;left:423px;top:460px;width:11px;height:11px;"><svg width="9" height="9" viewBox="0 0 9 9" style="position:absolute;left:0;top:0"><path d="M1.3 4.2 L3.6 6.9 L7.9 1.6" fill="none" stroke="#111" stroke-width="1.9"/></svg></div>
<span class="t " style="left:38.00px;top:477.67px;font-size:12.5px;letter-spacing:0.260px;">C4H8</span>
<span class="t " style="left:219.00px;top:477.67px;font-size:12.5px;letter-spacing:1.048px;">2</span>
<span class="t " style="left:289.00px;top:477.67px;font-size:12.5px;letter-spacing:0.772px;">6.4451 %</span>
<div class="cb" style="position:absolute;left:374px;top:479px;width:11px;height:11px;"></div>
<div class="cb" style="position:absolute;left:423px;top:479px;width:11px;height:11px;"><svg width="9" height="9" viewBox="0 0 9 9" style="position:absolute;left:0;top:0"><path d="M1.3 4.2 L3.6 6.9 L7.9 1.6" fill="none" stroke="#111" stroke-width="1.9"/></svg></div>
<span class="t " style="left:38.00px;top:496.67px;font-size:12.5px;letter-spacing:0.510px;">H2</span>
<span class="t " style="left:219.00px;top:496.67px;font-size:12.5px;letter-spacing:1.048px;">2</span>
<span class="t " style="left:289.00px;top:496.67px;font-size:12.5px;letter-spacing:0.772px;">3.6692 %</span>
<div class="cb" style="position:absolute;left:374px;top:498px;width:11px;height:11px;"></div>
<div class="cb" style="position:absolute;left:423px;top:498px;width:11px;height:11px;"><svg width="9" height="9" viewBox="0 0 9 9" style="position:absolute;left:0;top:0"><path d="M1.3 4.2 L3.6 6.9 L7.9 1.6" fill="none" stroke="#111" stroke-width="1.9"/></svg></div>
<span class="t " style="left:38.00px;top:515.67px;font-size:12.5px;letter-spacing:0.418px;">C5H10</span>
<span class="t " style="left:219.00px;top:515.67px;font-size:12.5px;letter-spacing:1.048px;">1</span>
<span class="t " style="left:289.00px;top:515.67px;font-size:12.5px;letter-spacing:0.772px;">2.7694 %</span>
<div class="cb" style="position:absolute;left:374px;top:517px;width:11px;height:11px;"></div>
<div class="cb" style="position:absolute;left:423px;top:517px;width:11px;height:11px;"><svg width="9" height="9" viewBox="0 0 9 9" style="position:absolute;left:0;top:0"><path d="M1.3 4.2 L3.6 6.9 L7.9 1.6" fill="none" stroke="#111" stroke-width="1.9"/></svg></div>
<span class="t " style="left:38.00px;top:534.67px;font-size:12.5px;letter-spacing:0.260px;">C2H5</span>
<span class="t " style="left:219.00px;top:534.67px;font-size:12.5px;letter-spacing:1.048px;">1</span>
<span class="t " style="left:289.00px;top:534.67px;font-size:12.5px;letter-spacing:0.772px;">2.1380 %</span>
<div class="cb" style="position:absolute;left:374px;top:536px;width:11px;height:11px;"></div>
<div class="cb" style="position:absolute;left:423px;top:536px;width:11px;height:11px;"><svg width="9" height="9" viewBox="0 0 9 9" style="position:absolute;left:0;top:0"><path d="M1.3 4.2 L3.6 6.9 L7.9 1.6" fill="none" stroke="#111" stroke-width="1.9"/></svg></div>
<span class="t " style="left:38.00px;top:553.67px;font-size:12.5px;letter-spacing:0.260px;">C4H9</span>
<span class="t " style="left:219.00px;top:553.67px;font-size:12.5px;letter-spacing:1.048px;">1</span>
<span class="t " style="left:289.00px;top:553.67px;font-size:12.5px;letter-spacing:0.772px;">1.6845 %</span>
<div class="cb" style="position:absolute;left:374px;top:555px;width:11px;height:11px;"></div>
<div class="cb" style="position:absolute;left:423px;top:555px;width:11px;height:11px;"><svg width="9" height="9" viewBox="0 0 9 9" style="position:absolute;left:0;top:0"><path d="M1.3 4.2 L3.6 6.9 L7.9 1.6" fill="none" stroke="#111" stroke-width="1.9"/></svg></div>
<span class="t " style="left:38.00px;top:572.67px;font-size:12.5px;letter-spacing:0.260px;">C3H7</span>
<span class="t " style="left:219.00px;top:572.67px;font-size:12.5px;letter-spacing:1.048px;">1</span>
<span class="t " style="left:289.00px;top:572.67px;font-size:12.5px;letter-spacing:0.772px;">1.3323 %</span>
<div class="cb" style="position:absolute;left:374px;top:574px;width:11px;height:11px;"></div>
<div class="cb" style="position:absolute;left:423px;top:574px;width:11px;height:11px;"><svg width="9" height="9" viewBox="0 0 9 9" style="position:absolute;left:0;top:0"><path d="M1.3 4.2 L3.6 6.9 L7.9 1.6" fill="none" stroke="#111" stroke-width="1.9"/></svg></div>
<span class="t " style="left:38.00px;top:591.67px;font-size:12.5px;letter-spacing:0.418px;">C7H15</span>
<span class="t " style="left:219.00px;top:591.67px;font-size:12.5px;letter-spacing:1.048px;">1</span>
<span class="t " style="left:289.00px;top:591.67px;font-size:12.5px;letter-spacing:0.772px;">1.3282 %</span>
<div class="cb" style="position:absolute;left:374px;top:593px;width:11px;height:11px;"></div>
<div class="cb" style="position:absolute;left:423px;top:593px;width:11px;height:11px;"><svg width="9" height="9" viewBox="0 0 9 9" style="position:absolute;left:0;top:0"><path d="M1.3 4.2 L3.6 6.9 L7.9 1.6" fill="none" stroke="#111" stroke-width="1.9"/></svg></div>
<span class="t " style="left:38.00px;top:610.67px;font-size:12.5px;letter-spacing:0.603px;">C5H11</span>
<span class="t " style="left:219.00px;top:610.67px;font-size:12.5px;letter-spacing:1.048px;">2</span>
<span class="t " style="left:289.00px;top:610.67px;font-size:12.5px;letter-spacing:0.772px;">1.2429 %</span>
<div class="cb" style="position:absolute;left:374px;top:612px;width:11px;height:11px;"></div>
<div class="cb" style="position:absolute;left:423px;top:612px;width:11px;height:11px;"><svg width="9" height="9" viewBox="0 0 9 9" style="position:absolute;left:0;top:0"><path d="M1.3 4.2 L3.6 6.9 L7.9 1.6" fill="none" stroke="#111" stroke-width="1.9"/></svg></div>
<span class="t " style="left:38.00px;top:629.67px;font-size:12.5px;letter-spacing:0.523px;">C12H25</span>
<span class="t " style="left:219.00px;top:629.67px;font-size:12.5px;letter-spacing:1.048px;">1</span>
<span class="t " style="left:289.00px;top:629.67px;font-size:12.5px;letter-spacing:0.772px;">0.8738 %</span>
<div class="cb" style="position:absolute;left:374px;top:631px;width:11px;height:11px;"></div>
<div class="cb" style="position:absolute;left:423px;top:631px;width:11px;height:11px;"><svg width="9" height="9" viewBox="0 0 9 9" style="position:absolute;left:0;top:0"><path d="M1.3 4.2 L3.6 6.9 L7.9 1.6" fill="none" stroke="#111" stroke-width="1.9"/></svg></div>
<div style="position:absolute;left:474px;top:327px;width:17px;height:321px;background:#d6d2d0;box-sizing:border-box;border:1px solid;border-color:#828282 #fff #fff #828282;"></div>
<div style="position:absolute;left:475px;top:343.5px;width:15px;height:222px;box-sizing:border-box;background:#e6e6e6;border:1px solid;border-color:#fff #7a7a7a #7a7a7a #fff;"></div>
<svg class="abs" style="left:475px;top:328px" width="15" height="15" viewBox="0 0 15 15"><path d="M7.3 0.3 L0.5 14 L14.3 14 Z" fill="#e6e6e6"/><path d="M7.3 0.3 L0.5 14" stroke="#fff" stroke-width="1.1"/><path d="M0.8 14.2 L14.3 14.2 L7.3 0.3" stroke="#7a7a7a" stroke-width="1" fill="none"/></svg>
<svg class="abs" style="left:475px;top:632px" width="15" height="15" viewBox="0 0 15 15"><path d="M7.3 14.5 L0.5 1 L14.3 1 Z" fill="#e6e6e6"/><path d="M0.5 1 L14.3 1 M0.5 1 L7.3 14.5" stroke="#fff" stroke-width="1.1" fill="none"/><path d="M14.3 1 L7.3 14.5" stroke="#7a7a7a" stroke-width="1" fill="none"/></svg>
</div></div>
</div>
</body></html>
